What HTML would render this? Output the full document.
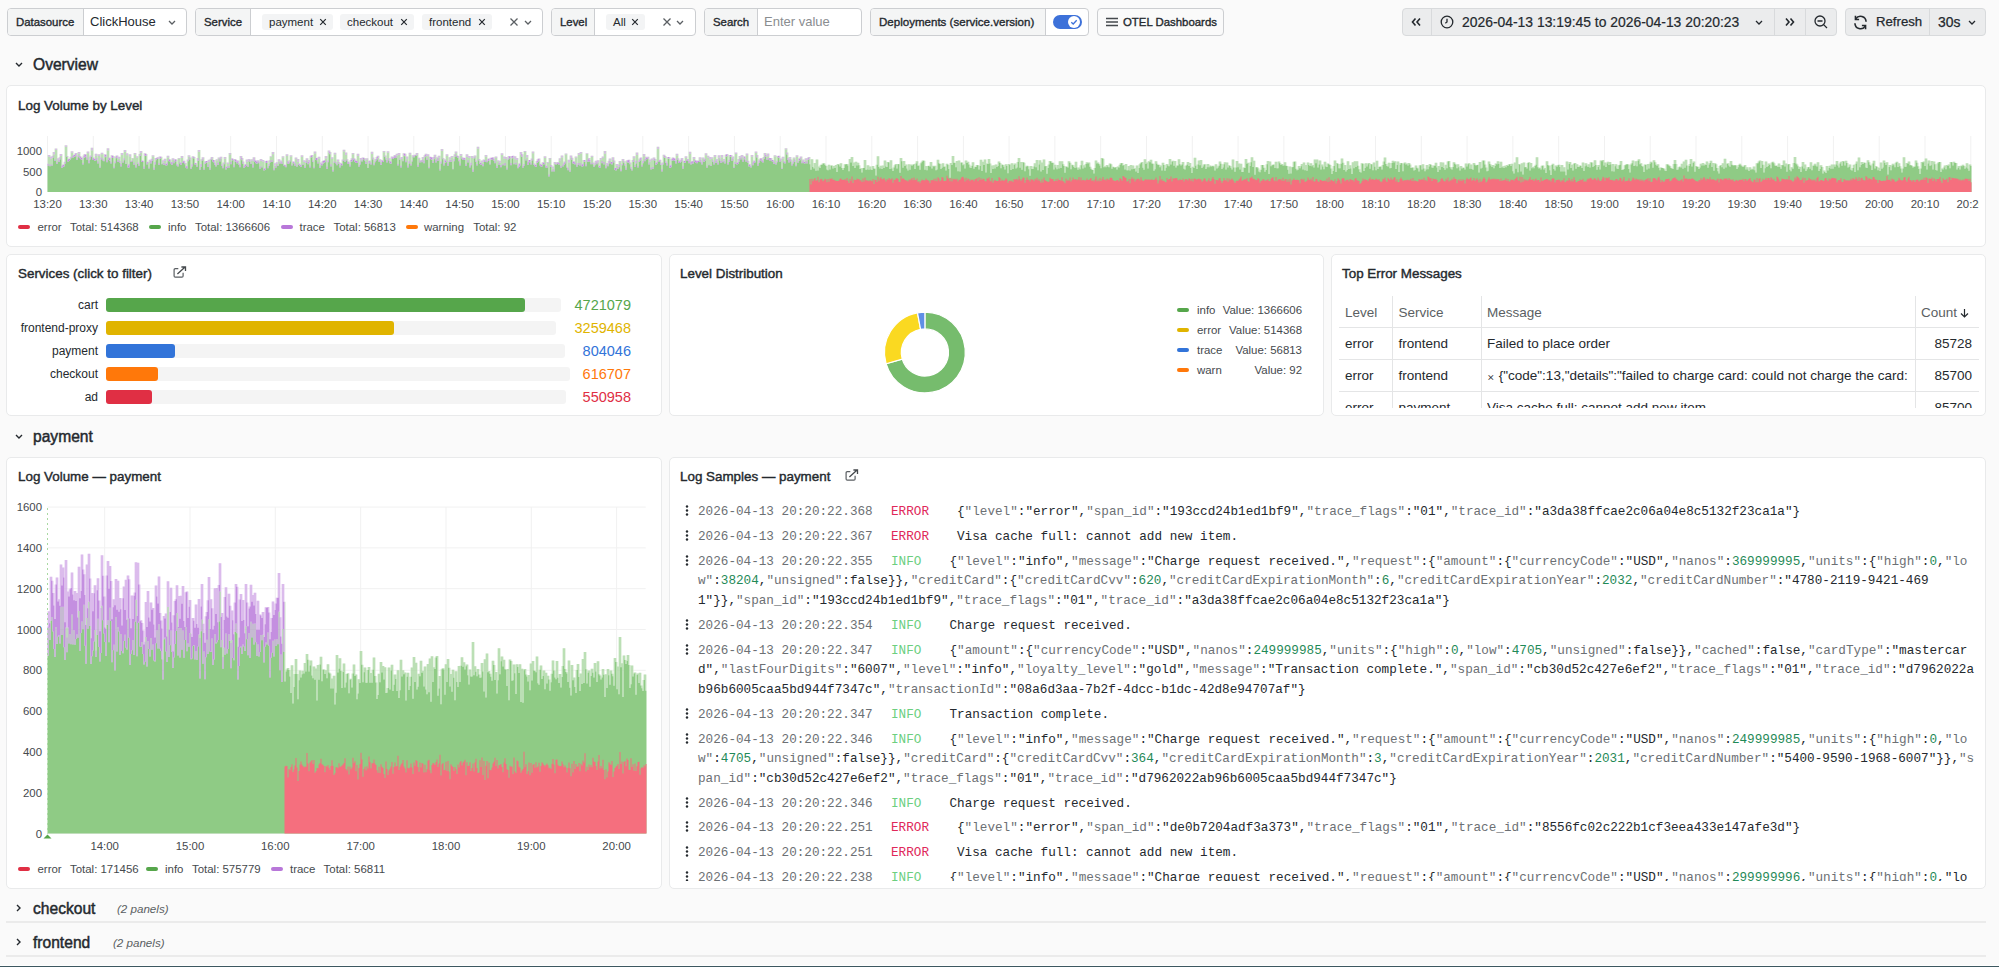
<!DOCTYPE html><html><head><meta charset="utf-8"><style>
*{box-sizing:border-box;margin:0;padding:0}
html,body{width:1999px;height:967px;overflow:hidden;background:#fafafa;font-family:"Liberation Sans",sans-serif;color:#24292e}
.a{position:absolute}
.box{position:absolute;top:8px;height:28px;border:1px solid #ccced1;border-radius:4px;background:#fff;overflow:hidden}
.lbl{position:absolute;top:0;left:0;height:26px;background:#f4f5f5;border-right:1px solid #ccced1;font-size:11.4px;-webkit-text-stroke:0.35px #24292e;line-height:26px;padding-left:8px;color:#24292e;white-space:nowrap}
.val{position:absolute;top:0;height:26px;line-height:26px;font-size:13px;white-space:nowrap}
.chip{position:absolute;top:6px;height:16px;background:#f3f4f5;border-radius:3px;font-size:11.5px;line-height:16px;white-space:nowrap;color:#24292e}
.btn{position:absolute;top:8px;height:28px;border:1px solid #d8dadc;border-radius:4px;background:#ebeced}
.panel{position:absolute;background:#fff;border:1px solid #e9eaeb;border-radius:5px;overflow:hidden}
.ptitle{position:absolute;font-size:13.4px;-webkit-text-stroke:0.4px #24292e;white-space:nowrap;color:#24292e;line-height:16px}
.rowt{position:absolute;font-size:15.6px;-webkit-text-stroke:0.45px #24292e;white-space:nowrap;color:#24292e;line-height:18px}
.ax{position:absolute;font-size:11.4px;color:#45494d;white-space:nowrap;line-height:12px}
.leg{position:absolute;font-size:11.45px;color:#45494d;white-space:nowrap;line-height:12px}
.sw{display:inline-block;width:12px;height:4px;border-radius:2px;vertical-align:middle;margin-right:7px;position:relative;top:-1px}
.mono{font-family:"Liberation Mono",monospace;font-size:12.67px;white-space:pre;line-height:19.6px}
</style></head><body><div class="box" style="left:7px;width:180px"><div class="lbl" style="width:76px">Datasource</div><div class="val" style="left:82px">ClickHouse</div></div>
<svg class="a" style="left:168px;top:20px" width="8" height="5" viewBox="0 0 8 5"><path d="M1 1 L4 4 L7 1" fill="none" stroke="#5b5f63" stroke-width="1.3"/></svg>
<div class="box" style="left:195px;width:348px"><div class="lbl" style="width:55px">Service</div></div>
<div class="chip" style="left:262px;top:14px;width:71px;padding-left:7px">payment</div>
<svg class="a" style="left:319px;top:18px" width="8" height="8" viewBox="0 0 10 10"><path d="M1.5 1.5 L8.5 8.5 M8.5 1.5 L1.5 8.5" fill="none" stroke="#24292e" stroke-width="1.5"/></svg>
<div class="chip" style="left:340px;top:14px;width:74px;padding-left:7px">checkout</div>
<svg class="a" style="left:400px;top:18px" width="8" height="8" viewBox="0 0 10 10"><path d="M1.5 1.5 L8.5 8.5 M8.5 1.5 L1.5 8.5" fill="none" stroke="#24292e" stroke-width="1.5"/></svg>
<div class="chip" style="left:422px;top:14px;width:70px;padding-left:7px">frontend</div>
<svg class="a" style="left:478px;top:18px" width="8" height="8" viewBox="0 0 10 10"><path d="M1.5 1.5 L8.5 8.5 M8.5 1.5 L1.5 8.5" fill="none" stroke="#24292e" stroke-width="1.5"/></svg>
<svg class="a" style="left:509px;top:17px" width="10" height="10" viewBox="0 0 10 10"><path d="M1.5 1.5 L8.5 8.5 M8.5 1.5 L1.5 8.5" fill="none" stroke="#5b5f63" stroke-width="1.3"/></svg>
<svg class="a" style="left:524px;top:20px" width="8" height="5" viewBox="0 0 8 5"><path d="M1 1 L4 4 L7 1" fill="none" stroke="#5b5f63" stroke-width="1.3"/></svg>
<div class="box" style="left:551px;width:145px"><div class="lbl" style="width:43px">Level</div></div>
<div class="chip" style="left:606px;top:14px;width:39px;padding-left:7px">All</div>
<svg class="a" style="left:631px;top:18px" width="8" height="8" viewBox="0 0 10 10"><path d="M1.5 1.5 L8.5 8.5 M8.5 1.5 L1.5 8.5" fill="none" stroke="#24292e" stroke-width="1.5"/></svg>
<svg class="a" style="left:662px;top:17px" width="10" height="10" viewBox="0 0 10 10"><path d="M1.5 1.5 L8.5 8.5 M8.5 1.5 L1.5 8.5" fill="none" stroke="#5b5f63" stroke-width="1.3"/></svg>
<svg class="a" style="left:676px;top:20px" width="8" height="5" viewBox="0 0 8 5"><path d="M1 1 L4 4 L7 1" fill="none" stroke="#5b5f63" stroke-width="1.3"/></svg>
<div class="box" style="left:704px;width:158px"><div class="lbl" style="width:53px">Search</div><div class="val" style="left:59px;color:#8a8d90">Enter value</div></div>
<div class="box" style="left:870px;width:219px"><div class="lbl" style="width:175px;font-size:11.55px">Deployments (service.version)</div></div>
<div class="a" style="left:1053px;top:15px;width:29px;height:14px;border-radius:7px;background:#3d71d9"></div>
<div class="a" style="left:1068px;top:16px;width:12px;height:12px;border-radius:6px;background:#fff"></div>
<svg class="a" style="left:1068px;top:16px" width="12" height="12" viewBox="0 0 12 12"><path d="M3.3 6.2 L5.2 8 L8.7 4.2" fill="none" stroke="#3d71d9" stroke-width="1.3"/></svg>
<div class="box" style="left:1097px;width:127px;background:#fafafa"></div>
<svg class="a" style="left:1106px;top:17px" width="12" height="10" viewBox="0 0 12 10"><path d="M0 1.5 H12 M0 5 H12 M0 8.5 H12" stroke="#45494d" stroke-width="1.4"/></svg>
<div class="a" style="left:1123px;top:8px;line-height:28px;font-size:11.4px;-webkit-text-stroke:0.35px #24292e;white-space:nowrap">OTEL Dashboards</div>
<div class="btn" style="left:1402px;width:435px"></div>
<div class="a" style="left:1431px;top:9px;width:1px;height:26px;background:#d8dadc"></div>
<div class="a" style="left:1774px;top:9px;width:1px;height:26px;background:#d8dadc"></div>
<div class="a" style="left:1805px;top:9px;width:1px;height:26px;background:#d8dadc"></div>
<svg class="a" style="left:1410px;top:17px" width="12" height="10" viewBox="0 0 12 10"><path d="M5.5 1.5 L2.5 5 L5.5 8.5 M10 1.5 L7 5 L10 8.5" fill="none" stroke="#24292e" stroke-width="1.6"/></svg>
<svg class="a" style="left:1440px;top:15px" width="14" height="14" viewBox="0 0 14 14"><circle cx="7" cy="7" r="5.8" fill="none" stroke="#24292e" stroke-width="1.3"/><path d="M7 3.8 V7 L5.3 8.2" fill="none" stroke="#24292e" stroke-width="1.3"/></svg>
<div class="a" style="left:1462px;top:8px;line-height:28px;font-size:13.9px;-webkit-text-stroke:0.2px #24292e;white-space:nowrap">2026-04-13 13:19:45 to 2026-04-13 20:20:23</div>
<svg class="a" style="left:1755px;top:20px" width="8" height="5" viewBox="0 0 8 5"><path d="M1 1 L4 4 L7 1" fill="none" stroke="#24292e" stroke-width="1.3"/></svg>
<svg class="a" style="left:1784px;top:17px" width="12" height="10" viewBox="0 0 12 10"><path d="M2 1.5 L5 5 L2 8.5 M6.5 1.5 L9.5 5 L6.5 8.5" fill="none" stroke="#24292e" stroke-width="1.6"/></svg>
<svg class="a" style="left:1814px;top:15px" width="14" height="14" viewBox="0 0 14 14"><circle cx="6" cy="6" r="5" fill="none" stroke="#24292e" stroke-width="1.3"/><path d="M3.5 6 H8.5 M9.6 9.6 L13 13" fill="none" stroke="#24292e" stroke-width="1.3"/></svg>
<div class="btn" style="left:1845px;width:141px"></div>
<div class="a" style="left:1929px;top:9px;width:1px;height:26px;background:#d8dadc"></div>
<svg class="a" style="left:1853px;top:15px" width="15" height="15" viewBox="0 0 14 14"><path d="M12.2 6.3 A5.2 5.2 0 0 0 2.6 3.6 M1.8 7.7 A5.2 5.2 0 0 0 11.4 10.4" fill="none" stroke="#24292e" stroke-width="1.5"/><path d="M2.3 0.8 V4.2 H5.7 M11.7 13.2 V9.8 H8.3" fill="none" stroke="#24292e" stroke-width="1.5"/></svg>
<div class="a" style="left:1876px;top:8px;line-height:28px;font-size:13.2px;-webkit-text-stroke:0.25px #24292e;white-space:nowrap">Refresh</div>
<div class="a" style="left:1938px;top:8px;line-height:28px;font-size:13.9px;-webkit-text-stroke:0.25px #24292e;white-space:nowrap">30s</div>
<svg class="a" style="left:1968px;top:20px" width="8" height="5" viewBox="0 0 8 5"><path d="M1 1 L4 4 L7 1" fill="none" stroke="#24292e" stroke-width="1.3"/></svg>
<svg class="a" style="left:15px;top:62px" width="8" height="5" viewBox="0 0 8 5"><path d="M1 1 L4 4 L7 1" fill="none" stroke="#24292e" stroke-width="1.4"/></svg>
<div class="rowt" style="left:33px;top:56px">Overview</div>
<svg class="a" style="left:15px;top:434px" width="8" height="5" viewBox="0 0 8 5"><path d="M1 1 L4 4 L7 1" fill="none" stroke="#24292e" stroke-width="1.4"/></svg>
<div class="rowt" style="left:33px;top:428px">payment</div>
<svg class="a" style="left:16px;top:904px" width="5" height="8" viewBox="0 0 5 8"><path d="M1 1 L4 4 L1 7" fill="none" stroke="#24292e" stroke-width="1.4"/></svg>
<div class="rowt" style="left:33px;top:900px">checkout</div>
<div class="a" style="left:117px;top:901.5px;font-size:11.6px;font-style:italic;color:#5b5f63;white-space:nowrap;line-height:14px">(2 panels)</div>
<svg class="a" style="left:16px;top:938px" width="5" height="8" viewBox="0 0 5 8"><path d="M1 1 L4 4 L1 7" fill="none" stroke="#24292e" stroke-width="1.4"/></svg>
<div class="rowt" style="left:33px;top:934px">frontend</div>
<div class="a" style="left:113px;top:935.5px;font-size:11.6px;font-style:italic;color:#5b5f63;white-space:nowrap;line-height:14px">(2 panels)</div>
<div class="a" style="left:6px;top:921px;width:1980px;height:2px;background:#ebebeb"></div>
<div class="a" style="left:6px;top:955px;width:1980px;height:2px;background:#ebebeb"></div>
<div class="a" style="left:0;top:965px;width:1999px;height:1px;background:#fff"></div>
<div class="a" style="left:0;top:966px;width:1999px;height:1px;background:#3d5860"></div>
<div class="panel" style="left:6px;top:85px;width:1980px;height:162px"></div>
<div class="ptitle" style="left:18px;top:97.5px">Log Volume by Level</div>
<svg class="a" style="left:0;top:0" width="1999" height="260" viewBox="0 0 1999 260"><path d="M47.5 136V192" stroke="#f1f1f1" stroke-width="1"/><path d="M93.3 136V192" stroke="#f1f1f1" stroke-width="1"/><path d="M139.1 136V192" stroke="#f1f1f1" stroke-width="1"/><path d="M184.9 136V192" stroke="#f1f1f1" stroke-width="1"/><path d="M230.7 136V192" stroke="#f1f1f1" stroke-width="1"/><path d="M276.5 136V192" stroke="#f1f1f1" stroke-width="1"/><path d="M322.3 136V192" stroke="#f1f1f1" stroke-width="1"/><path d="M368.1 136V192" stroke="#f1f1f1" stroke-width="1"/><path d="M413.8 136V192" stroke="#f1f1f1" stroke-width="1"/><path d="M459.6 136V192" stroke="#f1f1f1" stroke-width="1"/><path d="M505.4 136V192" stroke="#f1f1f1" stroke-width="1"/><path d="M551.2 136V192" stroke="#f1f1f1" stroke-width="1"/><path d="M597 136V192" stroke="#f1f1f1" stroke-width="1"/><path d="M642.8 136V192" stroke="#f1f1f1" stroke-width="1"/><path d="M688.6 136V192" stroke="#f1f1f1" stroke-width="1"/><path d="M734.4 136V192" stroke="#f1f1f1" stroke-width="1"/><path d="M780.2 136V192" stroke="#f1f1f1" stroke-width="1"/><path d="M826 136V192" stroke="#f1f1f1" stroke-width="1"/><path d="M871.8 136V192" stroke="#f1f1f1" stroke-width="1"/><path d="M917.6 136V192" stroke="#f1f1f1" stroke-width="1"/><path d="M963.4 136V192" stroke="#f1f1f1" stroke-width="1"/><path d="M1009.1 136V192" stroke="#f1f1f1" stroke-width="1"/><path d="M1054.9 136V192" stroke="#f1f1f1" stroke-width="1"/><path d="M1100.7 136V192" stroke="#f1f1f1" stroke-width="1"/><path d="M1146.5 136V192" stroke="#f1f1f1" stroke-width="1"/><path d="M1192.3 136V192" stroke="#f1f1f1" stroke-width="1"/><path d="M1238.1 136V192" stroke="#f1f1f1" stroke-width="1"/><path d="M1283.9 136V192" stroke="#f1f1f1" stroke-width="1"/><path d="M1329.7 136V192" stroke="#f1f1f1" stroke-width="1"/><path d="M1375.5 136V192" stroke="#f1f1f1" stroke-width="1"/><path d="M1421.3 136V192" stroke="#f1f1f1" stroke-width="1"/><path d="M1467.1 136V192" stroke="#f1f1f1" stroke-width="1"/><path d="M1512.9 136V192" stroke="#f1f1f1" stroke-width="1"/><path d="M1558.7 136V192" stroke="#f1f1f1" stroke-width="1"/><path d="M1604.5 136V192" stroke="#f1f1f1" stroke-width="1"/><path d="M1650.2 136V192" stroke="#f1f1f1" stroke-width="1"/><path d="M1696 136V192" stroke="#f1f1f1" stroke-width="1"/><path d="M1741.8 136V192" stroke="#f1f1f1" stroke-width="1"/><path d="M1787.6 136V192" stroke="#f1f1f1" stroke-width="1"/><path d="M1833.4 136V192" stroke="#f1f1f1" stroke-width="1"/><path d="M1879.2 136V192" stroke="#f1f1f1" stroke-width="1"/><path d="M1925 136V192" stroke="#f1f1f1" stroke-width="1"/><path d="M1970.8 136V192" stroke="#f1f1f1" stroke-width="1"/><path d="M47.5 163.8V155.1h1V163.8zM49.5 164.4V155.1h1V164.4zM51.5 164.5V155.7h1V164.5zM52.5 155.7V152.1h1V155.7zM54.5 159.4V148.4h1V159.4zM56.5 162.6V148.4h1V162.6zM58.5 160.2V157.3h1V160.2zM59.5 157.3V154.1h1V157.3zM61.5 165.7V154.1h1V165.7zM63.5 164.7V161.8h1V164.7zM64.5 161.8V145.2h1V161.8zM66.5 155.9V145.2h1V155.9zM67.5 159.5V155.9h1V159.5zM69.5 158.7V156.7h1V158.7zM70.5 156.7V151.2h1V156.7zM72.5 155.8V151.2h1V155.8zM73.5 155V154.6h1V155zM74.5 154.6V153.1h1V154.6zM76.5 158.4V153.1h1V158.4zM77.5 155.2V152h1V155.2zM79.5 156.1V152h1V156.1zM80.5 157.3V156.1h1V157.3zM81.5 158.1V157.3h1V158.1zM82.5 162.9V155.4h1V162.9zM83.5 155.4V154.1h1V155.4zM85.5 155.1V154.1h1V155.1zM86.5 157.5V151.5h1V157.5zM88.5 160.5V151.5h1V160.5zM89.5 157.1V155.6h1V157.1zM90.5 155.6V147.8h1V155.6zM92.5 157.5V147.8h1V157.5zM93.5 158.5V157.5h1V158.5zM94.5 158.9V153.7h1V158.9zM96.5 157.7V153.7h1V157.7zM97.5 161.4V154.2h1V161.4zM99.5 166.4V154.2h1V166.4zM100.5 157.4V152.8h1V157.4zM102.5 158.4V152.8h1V158.4zM103.5 160.5V154.3h1V160.5zM105.5 155.1V154.3h1V155.1zM106.5 160.3V148.2h1V160.3zM108.5 157.5V148.2h1V157.5zM109.5 158.2V157.5h1V158.2zM110.5 161.8V155.2h1V161.8zM112.5 156V155.2h1V156zM113.5 166.7V156h1V166.7zM114.5 161.6V156.6h1V161.6zM115.5 156.6V155.6h1V156.6zM117.5 160.2V155.6h1V160.2zM119.5 161V156.8h1V161zM120.5 163.8V153.1h1V163.8zM122.5 161.6V153.1h1V161.6zM123.5 158.2V150h1V158.2zM125.5 163.5V150h1V163.5zM127.5 165.6V153.2h1V165.6zM128.5 164V154.3h1V164zM130.5 161V154.3h1V161zM131.5 160.5V157.9h1V160.5zM133.5 162.4V153.1h1V162.4zM135.5 165.2V153.1h1V165.2zM137.5 162.6V156.3h1V162.6zM138.5 164.6V154h1V164.6zM139.5 154V151.1h1V154zM141.5 160.5V151.1h1V160.5zM143.5 166.5V153.2h1V166.5zM145.5 154V153.2h1V154zM146.5 162.5V154h1V162.5zM148.5 167.3V159.7h1V167.3zM150.5 161V158.7h1V161zM151.5 158.7V155.2h1V158.7zM153.5 167.5V155.2h1V167.5zM154.5 162V158h1V162zM156.5 157.8V157.3h1V157.8zM158.5 163.3V156.4h1V163.3zM160.5 156.7V156.4h1V156.7zM161.5 163.7V156.7h1V163.7zM163.5 163.1V158.7h1V163.1zM165.5 164V158.7h1V164zM166.5 162.5V155.8h1V162.5zM168.5 159.3V155.8h1V159.3zM169.5 159.6V159.3h1V159.6zM170.5 162.3V159.6h1V162.3zM171.5 162.2V158.2h1V162.2zM173.5 161.3V158.2h1V161.3zM175.5 159.6V159.3h1V159.6zM176.5 164V159.6h1V164zM177.5 165.2V158.1h1V165.2zM179.5 162V158.1h1V162zM180.5 163.1V156h1V163.1zM182.5 161.6V156h1V161.6zM184.5 163V160.8h1V163zM185.5 166.5V163h1V166.5zM186.5 166V159.5h1V166zM187.5 159.5V155.2h1V159.5zM189.5 157.4V155.2h1V157.4zM190.5 168V157.4h1V168zM191.5 164.3V156.3h1V164.3zM193.5 156.9V156.3h1V156.9zM194.5 162.9V156.9h1V162.9zM195.5 163.3V162.9h1V163.3zM196.5 165.8V158.1h1V165.8zM197.5 158.1V150.1h1V158.1zM199.5 168.4V150.1h1V168.4zM200.5 164.1V159.2h1V164.1zM201.5 159.2V157.2h1V159.2zM203.5 168.2V157.2h1V168.2zM204.5 162.3V161h1V162.3zM207.5 164.3V159.7h1V164.3zM209.5 168V158.7h1V168zM210.5 158.7V157.1h1V158.7zM212.5 159.9V157.1h1V159.9zM214.5 162.4V160h1V162.4zM215.5 165.2V159.2h1V165.2zM217.5 162.6V157.5h1V162.6zM219.5 158.6V156.8h1V158.6zM221.5 164.2V156.8h1V164.2zM222.5 166.5V162.5h1V166.5zM223.5 162.5V156.9h1V162.5zM225.5 167.2V156.9h1V167.2zM226.5 166.3V162.4h1V166.3zM228.5 166V153.1h1V166zM230.5 161.8V153.1h1V161.8zM232.5 159.2V158.3h1V159.2zM233.5 165.3V159.1h1V165.3zM235.5 160V159.1h1V160zM236.5 161.8V160h1V161.8zM238.5 163.6V160.5h1V163.6zM239.5 164.8V156.1h1V164.8zM241.5 157.9V156.1h1V157.9zM242.5 161.5V157.9h1V161.5zM243.5 166.3V161.5h1V166.3zM244.5 164.5V164.3h1V164.5zM245.5 164.3V159.6h1V164.3zM247.5 165.6V159.1h1V165.6zM249.5 160.3V159.1h1V160.3zM250.5 163.2V159.2h1V163.2zM252.5 164.5V157.2h1V164.5zM254.5 160.4V157.2h1V160.4zM255.5 160.6V160.4h1V160.6zM256.5 161.7V160.2h1V161.7zM258.5 161.6V160.2h1V161.6zM259.5 166.5V159.1h1V166.5zM261.5 166.5V159.1h1V166.5zM263.5 168.7V159.9h1V168.7zM264.5 168.1V161h1V168.1zM265.5 161V160.8h1V161zM267.5 166.6V160.8h1V166.6zM268.5 164V160.3h1V164zM269.5 160.3V156.3h1V160.3zM271.5 160.2V151.9h1V160.2zM273.5 168.3V151.9h1V168.3zM275.5 166.1V162.2h1V166.1zM277.5 164.9V159.3h1V164.9zM279.5 162.4V159.3h1V162.4zM281.5 162.3V156.3h1V162.3zM283.5 164.8V156.3h1V164.8zM285.5 165.8V154.2h1V165.8zM287.5 160.9V154.2h1V160.9zM288.5 162.5V160.2h1V162.5zM289.5 160.2V155.3h1V160.2zM291.5 164.6V155.3h1V164.6zM293.5 161.8V161.5h1V161.8zM294.5 163.4V157.4h1V163.4zM296.5 165.5V157.4h1V165.5zM298.5 163.5V159h1V163.5zM299.5 164.6V163.5h1V164.6zM300.5 165.3V155.3h1V165.3zM302.5 164V155.3h1V164zM304.5 166.6V160.2h1V166.6zM305.5 160.7V158.3h1V160.7zM307.5 162.2V158.3h1V162.2zM309.5 165.8V155.8h1V165.8zM310.5 155.8V155.1h1V155.8zM312.5 160.4V155.1h1V160.4zM313.5 167V151.4h1V167zM315.5 157.8V151.4h1V157.8zM317.5 161.9V156.8h1V161.9zM319.5 166.2V156.8h1V166.2zM321.5 164.1V161.1h1V164.1zM322.5 161.1V160.6h1V161.1zM323.5 160.6V160.3h1V160.6zM324.5 160.3V156h1V160.3zM326.5 166.5V156h1V166.5zM327.5 160.6V150.6h1V160.6zM329.5 151.9V150.6h1V151.9zM330.5 164.3V151.9h1V164.3zM332.5 170V157.3h1V170zM333.5 161.5V152.8h1V161.5zM335.5 161.9V152.8h1V161.9zM336.5 163.7V159.5h1V163.7zM338.5 162.2V159.5h1V162.2zM339.5 165.5V162.2h1V165.5zM341.5 163.9V159.6h1V163.9zM342.5 159.6V149.8h1V159.6zM344.5 160.5V149.8h1V160.5zM346.5 159.3V152.6h1V159.3zM347.5 161.5V159.3h1V161.5zM348.5 162.4V161.5h1V162.4zM349.5 165V160h1V165zM350.5 160V158.2h1V160zM351.5 158.2V152.9h1V158.2zM353.5 158.2V152.9h1V158.2zM354.5 159.6V158.2h1V159.6zM355.5 161.1V159.6h1V161.1zM356.5 161.1V153.8h1V161.1zM358.5 165.2V153.8h1V165.2zM359.5 162.3V158.1h1V162.3zM361.5 160.6V157.4h1V160.6zM363.5 157.9V157.4h1V157.9zM364.5 159.3V157.9h1V159.3zM365.5 161.9V158.2h1V161.9zM367.5 167.5V158.2h1V167.5zM368.5 161V160.5h1V161zM370.5 162.5V151.7h1V162.5zM372.5 157.5V151.7h1V157.5zM373.5 163.7V157.5h1V163.7zM374.5 160.8V159h1V160.8zM375.5 159V156.9h1V159zM376.5 156.9V155.8h1V156.9zM378.5 160.7V155.8h1V160.7zM380.5 162.5V159.2h1V162.5zM382.5 160.9V151h1V160.9zM384.5 155.4V151h1V155.4zM385.5 158.1V155.4h1V158.1zM386.5 160.1V151.3h1V160.1zM388.5 158.3V151.3h1V158.3zM389.5 161V158.3h1V161zM390.5 161.7V156.4h1V161.7zM392.5 157.8V156.4h1V157.8zM393.5 156.6V154.9h1V156.6zM395.5 156.5V153.7h1V156.5zM397.5 164V153h1V164zM399.5 158.3V153h1V158.3zM400.5 165.8V157.1h1V165.8zM402.5 160.4V153.3h1V160.4zM404.5 153.8V153.3h1V153.8zM405.5 160.7V153.8h1V160.7zM407.5 165.6V156.5h1V165.6zM408.5 161.3V152.7h1V161.3zM410.5 163.7V152.7h1V163.7zM411.5 160.5V155.2h1V160.5zM413.5 156.4V154.8h1V156.4zM415.5 155.2V153.1h1V155.2zM417.5 165.1V153.1h1V165.1zM419.5 160.5V157.7h1V160.5zM420.5 160.8V160.1h1V160.8zM421.5 160.1V156.9h1V160.1zM423.5 160.2V155.2h1V160.2zM424.5 155.2V153.7h1V155.2zM426.5 158.5V153.7h1V158.5zM428.5 166.9V154.2h1V166.9zM430.5 157.2V156.7h1V157.2zM432.5 161.3V157h1V161.3zM433.5 157V154.7h1V157zM435.5 160.1V154.7h1V160.1zM437.5 158.3V155.7h1V158.3zM439.5 168.9V155.7h1V168.9zM440.5 161.6V148.9h1V161.6zM442.5 158V148.9h1V158zM443.5 163.8V158h1V163.8zM445.5 160.8V154.2h1V160.8zM447.5 163.3V154.2h1V163.3zM448.5 160.8V157.3h1V160.8zM450.5 160V156h1V160zM452.5 168.6V156h1V168.6zM453.5 158.9V154.2h1V158.9zM454.5 154.2V151.4h1V154.2zM456.5 155.5V151.4h1V155.5zM457.5 156V155.5h1V156zM458.5 159.7V156h1V159.7zM459.5 163.6V154.1h1V163.6zM461.5 157.3V154.1h1V157.3zM462.5 158.6V157.3h1V158.6zM464.5 158.2V157.8h1V158.2zM465.5 164.2V154.2h1V164.2zM467.5 160.2V154.2h1V160.2zM469.5 165.5V156h1V165.5zM470.5 162.8V155.9h1V162.8zM472.5 169.5V155.9h1V169.5zM473.5 157.2V155.5h1V157.2zM475.5 160.6V155.5h1V160.6zM476.5 163.9V146.8h1V163.9zM478.5 159.1V146.8h1V159.1zM479.5 162.4V159.1h1V162.4zM480.5 162.9V160.4h1V162.9zM482.5 164V159.5h1V164zM484.5 160.6V155h1V160.6zM486.5 160.9V155h1V160.9zM487.5 159.2V158.6h1V159.2zM489.5 163.4V157.7h1V163.4zM491.5 157.7V157.3h1V157.7zM493.5 158.7V157.3h1V158.7zM494.5 161.3V156.5h1V161.3zM496.5 166.1V156.5h1V166.1zM498.5 162.7V160.3h1V162.7zM500.5 165V153.2h1V165zM502.5 163.9V153.2h1V163.9zM504.5 163V156.6h1V163zM506.5 167.7V157h1V167.7zM507.5 158.5V156h1V158.5zM509.5 156.6V156h1V156.6zM510.5 163V155.9h1V163zM513.5 163.2V155.7h1V163.2zM515.5 162.8V156.3h1V162.8zM517.5 166.7V157.9h1V166.7zM518.5 164.3V163.3h1V164.3zM519.5 163.3V152.1h1V163.3zM521.5 154.2V152.1h1V154.2zM522.5 166.1V154.2h1V166.1zM523.5 164.1V151h1V164.1zM525.5 159.3V151h1V159.3zM527.5 162.1V154.9h1V162.1zM530.5 162.7V158.6h1V162.7zM531.5 158.6V151.6h1V158.6zM533.5 163.5V151.6h1V163.5zM534.5 165.1V163.5h1V165.1zM535.5 164.8V161.1h1V164.8zM536.5 161.1V159.3h1V161.1zM537.5 159.3V158.4h1V159.3zM539.5 163.8V158.4h1V163.8zM540.5 164.6V163.8h1V164.6zM541.5 164.9V162.2h1V164.9zM543.5 162.8V156.3h1V162.8zM545.5 165.5V156.3h1V165.5zM546.5 166.5V162h1V166.5zM548.5 174.6V158.1h1V174.6zM550.5 165V158.1h1V165zM551.5 170.2V165h1V170.2zM553.5 169.3V162.1h1V169.3zM555.5 164V162.1h1V164zM556.5 163V162.1h1V163zM558.5 163.1V158.2h1V163.1zM560.5 165.9V155.5h1V165.9zM562.5 164.8V155.5h1V164.8zM563.5 162.7V161.4h1V162.7zM564.5 161.4V153.4h1V161.4zM566.5 166.8V153.4h1V166.8zM567.5 167.9V159.8h1V167.9zM569.5 170.3V155.4h1V170.3zM571.5 157.8V155.4h1V157.8zM572.5 161.7V157.8h1V161.7zM574.5 162.4V156.4h1V162.4zM576.5 164.7V156.4h1V164.7zM577.5 163V153.1h1V163zM579.5 163V152.1h1V163zM581.5 164.6V152.1h1V164.6zM582.5 163.4V159.9h1V163.4zM584.5 160.2V159.9h1V160.2zM585.5 164.3V153.2h1V164.3zM587.5 159.5V153.2h1V159.5zM589.5 159.9V157.9h1V159.9zM590.5 162.8V155.7h1V162.8zM592.5 162.6V155.7h1V162.6zM593.5 166.1V162.6h1V166.1zM594.5 163.3V160.8h1V163.3zM596.5 162.8V160.2h1V162.8zM598.5 166.2V160.2h1V166.2zM599.5 165.5V158.1h1V165.5zM601.5 160.9V156.6h1V160.9zM603.5 162V151.1h1V162zM605.5 166.2V151.1h1V166.2zM607.5 164.6V160.8h1V164.6zM608.5 160.8V158.6h1V160.8zM610.5 161.9V158.6h1V161.9zM611.5 162V157.2h1V162zM613.5 160.5V157.2h1V160.5zM614.5 168V160.5h1V168zM615.5 167.9V164.1h1V167.9zM617.5 167.3V164.1h1V167.3zM618.5 164.8V161h1V164.8zM620.5 169.4V161h1V169.4zM621.5 164V159.1h1V164zM623.5 161.2V159.1h1V161.2zM624.5 163.9V161.2h1V163.9zM625.5 167.6V160.5h1V167.6zM626.5 160.5V160.3h1V160.5zM627.5 160.3V159.7h1V160.3zM629.5 162.4V159.7h1V162.4zM630.5 167V162.4h1V167zM631.5 169.1V159.9h1V169.1zM632.5 159.9V156.3h1V159.9zM634.5 165V156.3h1V165zM635.5 160.8V152.6h1V160.8zM637.5 166V152.6h1V166zM638.5 160.6V158.5h1V160.6zM639.5 158.5V157.4h1V158.5zM641.5 165V157.4h1V165zM642.5 160.8V154h1V160.8zM644.5 159.1V154h1V159.1zM646.5 158.1V156.7h1V158.1zM648.5 162.4V156.7h1V162.4zM650.5 167.6V158.4h1V167.6zM652.5 166.9V157.6h1V166.9zM654.5 159V157.6h1V159zM655.5 163V159h1V163zM656.5 161.9V146.8h1V161.9zM658.5 160.7V146.8h1V160.7zM660.5 163.4V159.7h1V163.4zM661.5 169.3V162.4h1V169.3zM662.5 162.4V154.8h1V162.4zM664.5 156.1V154.8h1V156.1zM665.5 161.2V156.1h1V161.2zM666.5 163.1V157.1h1V163.1zM669.5 165.7V157.1h1V165.7zM670.5 164.7V158.8h1V164.7zM671.5 158.8V157.4h1V158.8zM673.5 158.3V157.4h1V158.3zM675.5 161V153.8h1V161zM677.5 158.3V153.8h1V158.3zM678.5 160.9V158.3h1V160.9zM679.5 161.7V159.8h1V161.7zM680.5 159.8V158.1h1V159.8zM682.5 166.3V158.1h1V166.3zM684.5 161V156.2h1V161zM686.5 159.7V156.2h1V159.7zM688.5 160.9V151.7h1V160.9zM690.5 161.9V151.7h1V161.9zM692.5 161.6V157.1h1V161.6zM694.5 160.3V157.1h1V160.3zM695.5 160.5V160.3h1V160.5zM696.5 161.5V160.5h1V161.5zM698.5 160.9V157.3h1V160.9zM700.5 159.7V157.3h1V159.7zM701.5 162.3V157.5h1V162.3zM703.5 159.7V157.5h1V159.7zM704.5 158.7V153.3h1V158.7zM706.5 166.3V153.3h1V166.3zM708.5 164.4V155.7h1V164.4zM710.5 165.2V157h1V165.2zM712.5 160.3V157.2h1V160.3zM713.5 162.4V155h1V162.4zM715.5 160.7V155h1V160.7zM717.5 162.4V155.2h1V162.4zM719.5 158.5V155.2h1V158.5zM720.5 160.7V155.1h1V160.7zM722.5 161V155.1h1V161zM724.5 161.5V154.7h1V161.5zM725.5 154.7V154h1V154.7zM727.5 163V154h1V163zM728.5 159.8V154.9h1V159.8zM731.5 158.4V155h1V158.4zM733.5 167.1V156.4h1V167.1zM734.5 161.7V152.4h1V161.7zM736.5 163.1V152.4h1V163.1zM737.5 162V159h1V162zM738.5 159V156h1V159zM740.5 157.7V155h1V157.7zM742.5 159.6V155h1V159.6zM744.5 157.2V156.3h1V157.2zM745.5 160.2V153.4h1V160.2zM747.5 160.7V153.4h1V160.7zM748.5 164.5V160.7h1V164.5zM750.5 166.1V155h1V166.1zM752.5 162.6V155h1V162.6zM754.5 161.4V151.4h1V161.4zM756.5 154.9V151.4h1V154.9zM757.5 163.8V154.9h1V163.8zM758.5 160.6V159.3h1V160.6zM759.5 159.3V158h1V159.3zM761.5 159.5V158h1V159.5zM762.5 160.8V157.1h1V160.8zM763.5 157.1V153.1h1V157.1zM765.5 154.9V153.1h1V154.9zM766.5 158.6V153.5h1V158.6zM768.5 157.9V153.5h1V157.9zM769.5 158.2V157.9h1V158.2zM771.5 159.8V158h1V159.8zM773.5 161.5V155.3h1V161.5zM775.5 162.9V155.3h1V162.9zM776.5 161V156h1V161zM777.5 156V155.7h1V156zM779.5 160.6V155.7h1V160.6zM781.5 167.9V156.8h1V167.9zM783.5 161V156.8h1V161zM784.5 162.1V148.3h1V162.1zM786.5 152.6V148.3h1V152.6zM787.5 158V152.6h1V158zM788.5 159.7V157h1V159.7zM790.5 159.4V157h1V159.4zM791.5 163.8V159.4h1V163.8zM792.5 161.3V157.6h1V161.3zM794.5 159.5V157.6h1V159.5zM795.5 164.9V155.2h1V164.9zM797.5 161.6V155.2h1V161.6zM798.5 158.8V158.2h1V158.8zM799.5 158.2V156.6h1V158.2zM801.5 161.4V156.6h1V161.4zM803.5 161.6V159.6h1V161.6zM804.5 162V158.2h1V162zM806.5 161.3V158h1V161.3zM807.5 158V157h1V158z" fill="#cfe8ca"/><path d="M809.5 164.2V157h1V164.2zM810.5 169.8V159.2h1V169.8zM812.5 167.1V159.2h1V167.1zM813.5 168.4V162.9h1V168.4zM815.5 170.7V159.4h1V170.7zM817.5 170.4V159.4h1V170.4zM819.5 168V164.8h1V168zM821.5 164.7V163.5h1V164.7zM822.5 163.5V163.2h1V163.5zM824.5 164.8V163.2h1V164.8zM825.5 165.9V164.8h1V165.9zM826.5 169.5V165.9h1V169.5zM827.5 170.2V164.8h1V170.2zM829.5 169.5V164.8h1V169.5zM832.5 168.5V165.5h1V168.5zM834.5 167.9V165.1h1V167.9zM836.5 172.1V164h1V172.1zM838.5 164.7V164h1V164.7zM839.5 166.4V163.3h1V166.4zM841.5 168.1V163.3h1V168.1zM842.5 169.9V168.1h1V169.9zM843.5 168.1V164.3h1V168.1zM847.5 165.5V164.1h1V165.5zM848.5 171.2V159.1h1V171.2zM850.5 162.4V156.9h1V162.4zM852.5 165.9V156.9h1V165.9zM854.5 168.1V161.7h1V168.1zM856.5 165.6V161.7h1V165.6zM858.5 165.3V162.8h1V165.3zM859.5 169.1V165.3h1V169.1zM861.5 172.5V168.1h1V172.5zM863.5 167.9V160.1h1V167.9zM865.5 169.7V160.1h1V169.7zM866.5 169.5V165.3h1V169.5zM868.5 169.8V165.3h1V169.8zM870.5 169.5V166.4h1V169.5zM871.5 169.9V166h1V169.9zM873.5 168.5V166h1V168.5zM874.5 168.7V168.5h1V168.7zM875.5 175.6V164.8h1V175.6zM876.5 164.8V156.2h1V164.8zM878.5 166.9V156.2h1V166.9zM879.5 168.6V165.7h1V168.6zM881.5 169V165.5h1V169zM883.5 167.9V160.4h1V167.9zM885.5 166.6V160.4h1V166.6zM886.5 166.9V162h1V166.9zM888.5 162.6V162h1V162.6zM889.5 169.1V160.3h1V169.1zM891.5 168.6V160.3h1V168.6zM892.5 171V167.4h1V171zM893.5 167.4V165.3h1V167.4zM894.5 165.3V164h1V165.3zM896.5 168.5V164h1V168.5zM898.5 164.2V164h1V164.2zM899.5 172.7V158.1h1V172.7zM901.5 161.2V158.1h1V161.2zM902.5 167.8V161h1V167.8zM904.5 166V161h1V166zM906.5 168.6V164.4h1V168.6zM907.5 170.6V164.2h1V170.6zM909.5 169.8V164.2h1V169.8zM911.5 165.7V164.4h1V165.7zM912.5 165V163.9h1V165zM914.5 169V163.6h1V169zM915.5 163.6V161.3h1V163.6zM917.5 165.7V161.3h1V165.7zM919.5 169.7V163.3h1V169.7zM920.5 163.3V161.8h1V163.3zM921.5 161.8V160.5h1V161.8zM923.5 160.7V160.5h1V160.7zM924.5 169.7V160.7h1V169.7zM926.5 170.2V165.9h1V170.2zM927.5 166.1V165.8h1V166.1zM929.5 166.5V162h1V166.5zM931.5 168.5V162h1V168.5zM933.5 166.5V165.8h1V166.5zM935.5 170.2V165.8h1V170.2zM936.5 169.6V159.7h1V169.6zM938.5 163.3V159.7h1V163.3zM939.5 164.1V163.3h1V164.1zM940.5 169.1V164.1h1V169.1zM941.5 167.7V163.3h1V167.7zM943.5 166.7V163.3h1V166.7zM945.5 170.6V163.7h1V170.6zM947.5 164.7V163.7h1V164.7zM948.5 168.9V164.7h1V168.9zM949.5 177.7V163.1h1V177.7zM951.5 165.1V156h1V165.1zM953.5 162.8V156h1V162.8zM955.5 167.3V161.1h1V167.3zM957.5 171.2V160.4h1V171.2zM959.5 171.5V160.4h1V171.5zM962.5 165.3V162.5h1V165.3zM964.5 168.5V160.5h1V168.5zM966.5 163V160.5h1V163zM968.5 164.6V161.8h1V164.6zM969.5 167.4V164.6h1V167.4zM970.5 168.1V165.8h1V168.1zM971.5 165.8V162.3h1V165.8zM973.5 168.7V162.3h1V168.7zM975.5 166.9V164.9h1V166.9zM977.5 165.3V164.9h1V165.3zM978.5 169.5V165.3h1V169.5zM979.5 165.9V159.8h1V165.9zM981.5 171V159.8h1V171zM983.5 165V159.5h1V165zM985.5 172.4V159.5h1V172.4zM987.5 163.9V159.1h1V163.9zM989.5 163.6V159.1h1V163.6zM990.5 172.9V163.6h1V172.9zM992.5 169.1V165.3h1V169.1zM994.5 168.4V164.6h1V168.4zM996.5 166.9V164.6h1V166.9zM997.5 166V161.6h1V166zM999.5 162.9V161.6h1V162.9zM1000.5 168.3V162.9h1V168.3zM1002.5 164.9V164.5h1V164.9zM1003.5 166.8V164.9h1V166.8zM1004.5 169.5V164.3h1V169.5zM1006.5 165.9V164.3h1V165.9zM1007.5 173.3V164.1h1V173.3zM1009.5 164.9V164.1h1V164.9zM1010.5 170V163.3h1V170zM1012.5 168.9V163.3h1V168.9zM1013.5 164.9V163.5h1V164.9zM1015.5 168.6V163.5h1V168.6zM1016.5 167.4V161.9h1V167.4zM1017.5 161.9V157.9h1V161.9zM1019.5 167.7V157.9h1V167.7zM1021.5 169.8V161.9h1V169.8zM1023.5 162.8V161.9h1V162.8zM1024.5 171.3V162.8h1V171.3zM1025.5 166.7V165.8h1V166.7zM1027.5 166.3V165.8h1V166.3zM1028.5 169.3V166.3h1V169.3zM1029.5 175.7V166.1h1V175.7zM1031.5 168.9V166.1h1V168.9zM1032.5 168.9V166.4h1V168.9zM1033.5 166.4V163.2h1V166.4zM1035.5 167.2V160.1h1V167.2zM1037.5 170.2V160.1h1V170.2zM1038.5 164.4V160.2h1V164.4zM1040.5 171.5V160.2h1V171.5zM1042.5 170V159.5h1V170zM1044.5 166.2V159.5h1V166.2zM1046.5 173.7V166h1V173.7zM1047.5 168V164.4h1V168zM1048.5 164.4V161h1V164.4zM1050.5 161.5V161h1V161.5zM1051.5 162.9V161.5h1V162.9zM1053.5 169.4V162.8h1V169.4zM1055.5 167.6V164.8h1V167.6zM1056.5 169.2V165h1V169.2zM1058.5 168.4V161.2h1V168.4zM1060.5 168V161.2h1V168zM1062.5 164.2V161.2h1V164.2zM1063.5 166V164.2h1V166zM1064.5 172.7V166h1V172.7zM1066.5 166.8V166.5h1V166.8zM1067.5 167.4V161.3h1V167.4zM1069.5 162.8V161.3h1V162.8zM1070.5 169.2V162.8h1V169.2zM1072.5 165.2V164.8h1V165.2zM1073.5 167.1V165.2h1V167.1zM1074.5 167.9V161.8h1V167.9zM1076.5 167.5V161.8h1V167.5zM1077.5 169.8V167.5h1V169.8zM1079.5 169.2V165.3h1V169.2zM1080.5 165.3V160.8h1V165.3zM1082.5 168.5V160.8h1V168.5zM1084.5 167.6V164h1V167.6zM1085.5 164V162.2h1V164zM1087.5 163.6V162.2h1V163.6zM1089.5 166.7V162.6h1V166.7zM1090.5 168.8V166.7h1V168.8zM1091.5 169.8V168.8h1V169.8zM1093.5 173.5V168.1h1V173.5zM1094.5 168.1V160.4h1V168.1zM1096.5 163.5V160.4h1V163.5zM1098.5 163.9V162.4h1V163.9zM1099.5 165.6V163.9h1V165.6zM1100.5 168.3V158.1h1V168.3zM1102.5 158.7V158.1h1V158.7zM1103.5 167.3V158.7h1V167.3zM1105.5 167.2V164.9h1V167.2zM1107.5 166.4V164.9h1V166.4zM1108.5 167.2V163.4h1V167.2zM1110.5 164.3V163.4h1V164.3zM1111.5 168.7V164.3h1V168.7zM1113.5 167.2V166.7h1V167.2zM1114.5 167.8V166.9h1V167.8zM1116.5 169.4V166.4h1V169.4zM1118.5 167.5V164.8h1V167.5zM1119.5 164.8V163.2h1V164.8zM1120.5 163.2V163h1V163.2zM1122.5 165.5V163h1V165.5zM1124.5 169.4V163.9h1V169.4zM1126.5 170.3V163.9h1V170.3zM1127.5 170.2V165.9h1V170.2zM1129.5 170.5V165h1V170.5zM1131.5 169.2V165h1V169.2zM1133.5 169V165.5h1V169zM1135.5 171.4V165.4h1V171.4zM1137.5 172.9V165.4h1V172.9zM1138.5 168V164.2h1V168zM1139.5 164.2V163h1V164.2zM1140.5 163V162h1V163zM1142.5 167.7V162h1V167.7zM1143.5 169.7V159.3h1V169.7zM1145.5 164V159.3h1V164zM1147.5 168.4V161.3h1V168.4zM1149.5 162.3V159.8h1V162.3zM1151.5 163.5V159.8h1V163.5zM1152.5 163.8V163.5h1V163.8zM1153.5 170.8V163.8h1V170.8zM1154.5 169.2V161.3h1V169.2zM1156.5 163.8V161.3h1V163.8zM1157.5 164.9V163.8h1V164.9zM1159.5 167.2V164.8h1V167.2zM1161.5 170.6V162.7h1V170.6zM1163.5 165.1V162.7h1V165.1zM1164.5 170.7V165.1h1V170.7zM1165.5 167.7V164h1V167.7zM1167.5 165.6V164h1V165.6zM1168.5 166.2V159.1h1V166.2zM1170.5 164.5V159.1h1V164.5zM1171.5 161.8V160.8h1V161.8zM1173.5 165.8V160.8h1V165.8zM1175.5 167.6V161.1h1V167.6zM1177.5 165.4V159.3h1V165.4zM1179.5 164.3V159.3h1V164.3zM1180.5 165.4V164.3h1V165.4zM1181.5 164.5V162.1h1V164.5zM1183.5 168.8V162.1h1V168.8zM1184.5 169.6V165.8h1V169.6zM1185.5 165.8V164.7h1V165.8zM1186.5 164.7V162h1V164.7zM1188.5 166.1V162h1V166.1zM1190.5 168.1V163h1V168.1zM1191.5 172.9V166.8h1V172.9zM1193.5 167.9V157.8h1V167.9zM1195.5 165.7V157.8h1V165.7zM1196.5 169V164.6h1V169zM1197.5 164.6V160.4h1V164.6zM1199.5 165.3V160.1h1V165.3zM1201.5 168V160.1h1V168zM1202.5 166.4V164.5h1V166.4zM1203.5 164.5V164.3h1V164.5zM1205.5 169V164.3h1V169zM1206.5 167.2V163.9h1V167.2zM1208.5 167.3V163.9h1V167.3zM1210.5 166.5V165.6h1V166.5zM1211.5 166.2V165.7h1V166.2zM1213.5 166.6V165.7h1V166.6zM1214.5 170.6V164.3h1V170.6zM1216.5 168.4V164.3h1V168.4zM1217.5 167.6V165.7h1V167.6zM1218.5 165.7V161.5h1V165.7zM1220.5 163.8V161.5h1V163.8zM1221.5 169.1V163.8h1V169.1zM1222.5 167.6V164.2h1V167.6zM1223.5 164.2V162.2h1V164.2zM1225.5 169.6V162.2h1V169.6zM1227.5 167.5V162.6h1V167.5zM1229.5 166.1V165.3h1V166.1zM1230.5 167.8V166.1h1V167.8zM1231.5 169.6V159.4h1V169.6zM1233.5 167.6V159.4h1V167.6zM1234.5 171.7V167.4h1V171.7zM1235.5 167.4V161h1V167.4zM1237.5 167.3V161h1V167.3zM1239.5 169.4V163.6h1V169.4zM1241.5 172V163.7h1V172zM1242.5 172V167.5h1V172zM1244.5 167.9V158.9h1V167.9zM1246.5 163.7V158.9h1V163.7zM1248.5 172.7V162.8h1V172.7zM1249.5 165.9V162.2h1V165.9zM1250.5 162.2V157.3h1V162.2zM1252.5 167V157.3h1V167zM1254.5 174.7V160.7h1V174.7zM1255.5 167.6V167.1h1V167.6zM1257.5 168.2V167.1h1V168.2zM1258.5 171.4V168.2h1V171.4zM1259.5 172.2V169.8h1V172.2zM1260.5 169.8V165.1h1V169.8zM1263.5 167.8V164.9h1V167.8zM1264.5 171.7V167.8h1V171.7zM1265.5 170V164.2h1V170zM1266.5 164.2V161.1h1V164.2zM1268.5 174.1V161.1h1V174.1zM1270.5 166.3V161.4h1V166.3zM1271.5 165.3V164.8h1V165.3zM1272.5 164.8V164.4h1V164.8zM1274.5 168.1V161.8h1V168.1zM1276.5 168.3V161.8h1V168.3zM1277.5 168.3V161.5h1V168.3zM1279.5 163.2V161.5h1V163.2zM1280.5 165.1V163.2h1V165.1zM1282.5 165.4V164.1h1V165.4zM1283.5 165.6V162.3h1V165.6zM1285.5 165.7V162.3h1V165.7zM1286.5 166V165.7h1V166zM1287.5 169.7V166h1V169.7zM1288.5 173.7V166.4h1V173.7zM1290.5 173.5V166.4h1V173.5zM1291.5 167.2V167h1V167.2zM1292.5 167V161.7h1V167zM1293.5 161.7V161.4h1V161.7zM1295.5 168.8V161.4h1V168.8zM1296.5 170.2V168.8h1V170.2zM1297.5 169.7V166h1V169.7zM1299.5 168.3V166h1V168.3zM1300.5 166.3V163.9h1V166.3zM1302.5 169.6V162.6h1V169.6zM1304.5 170.3V162.6h1V170.3zM1306.5 170.7V162.4h1V170.7zM1308.5 164.9V162.4h1V164.9zM1309.5 166.1V163.3h1V166.1zM1311.5 166.3V163.3h1V166.3zM1313.5 167.5V159.5h1V167.5zM1315.5 163.3V159.4h1V163.3zM1317.5 167.6V159.4h1V167.6zM1318.5 164.6V160.6h1V164.6zM1320.5 169.6V160.6h1V169.6zM1322.5 166.4V164.5h1V166.4zM1323.5 169.2V161.8h1V169.2zM1325.5 166.6V161.8h1V166.6zM1326.5 167.1V163.5h1V167.1zM1328.5 164.3V163.5h1V164.3zM1329.5 165V164.3h1V165zM1330.5 168.6V165h1V168.6zM1331.5 174V168.6h1V174zM1332.5 170.9V166.1h1V170.9zM1333.5 166.1V160.4h1V166.1zM1335.5 172V160.4h1V172zM1337.5 164.1V163.1h1V164.1zM1338.5 168.2V164.1h1V168.2zM1339.5 168.2V163.8h1V168.2zM1340.5 163.8V158.5h1V163.8zM1342.5 162.7V158.5h1V162.7zM1343.5 170.1V162.7h1V170.1zM1345.5 171.6V164.9h1V171.6zM1346.5 170V161.2h1V170zM1348.5 169.1V161.2h1V169.1zM1350.5 168.4V165.3h1V168.4zM1351.5 173.9V162.3h1V173.9zM1353.5 168.3V161.2h1V168.3zM1355.5 167.1V161.2h1V167.1zM1357.5 165.8V161.2h1V165.8zM1358.5 169.3V165.8h1V169.3zM1359.5 172.1V169.3h1V172.1zM1360.5 172.4V163.3h1V172.4zM1362.5 163.7V163.3h1V163.7zM1363.5 171.1V163.7h1V171.1zM1364.5 168V163.3h1V168zM1366.5 166.4V163.3h1V166.4zM1367.5 164.3V163.1h1V164.3zM1369.5 168.8V163.1h1V168.8zM1371.5 164.6V164h1V164.6zM1372.5 170.2V162.6h1V170.2zM1374.5 166.8V162.6h1V166.8zM1375.5 170.3V160.8h1V170.3zM1377.5 169V160.8h1V169zM1379.5 166.8V166.4h1V166.8zM1381.5 169.5V165.1h1V169.5zM1382.5 165.1V161.4h1V165.1zM1383.5 161.4V157.4h1V161.4zM1385.5 164V157.4h1V164zM1386.5 166V164h1V166zM1387.5 166.5V162.8h1V166.5zM1389.5 168.3V162.8h1V168.3zM1390.5 168V162.9h1V168zM1391.5 162.9V160.8h1V162.9zM1393.5 162.5V160.8h1V162.5zM1395.5 168.9V161.2h1V168.9zM1396.5 165.1V161.4h1V165.1zM1398.5 171.9V161.4h1V171.9zM1399.5 164.8V163.1h1V164.8zM1402.5 171.2V163.3h1V171.2zM1403.5 163.6V162.6h1V163.6zM1405.5 164.5V162.6h1V164.5zM1407.5 165.4V162.9h1V165.4zM1409.5 164.6V162.9h1V164.6zM1410.5 167.9V164.6h1V167.9zM1413.5 170.6V167.5h1V170.6zM1414.5 170V165.6h1V170zM1416.5 167.7V165.6h1V167.7zM1417.5 168.4V167.7h1V168.4zM1418.5 171.5V165.3h1V171.5zM1421.5 169.5V164.2h1V169.5zM1423.5 168.4V164.2h1V168.4zM1424.5 171.2V168.4h1V171.2zM1425.5 169.4V165.1h1V169.4zM1427.5 169.2V165.1h1V169.2zM1428.5 166.5V164h1V166.5zM1430.5 164.9V164h1V164.9zM1431.5 167.4V164.9h1V167.4zM1432.5 167.7V165.5h1V167.7zM1434.5 165.8V162.7h1V165.8zM1436.5 167.6V162.7h1V167.6zM1437.5 171.9V166.1h1V171.9zM1439.5 169.8V162.2h1V169.8zM1441.5 166.9V162.2h1V166.9zM1443.5 168V162.4h1V168zM1444.5 169.8V164.7h1V169.8zM1446.5 168.3V161.5h1V168.3zM1447.5 161.5V161.1h1V161.5zM1449.5 167.1V161.1h1V167.1zM1450.5 168.5V167.1h1V168.5zM1451.5 169.6V167h1V169.6zM1452.5 167V162.3h1V167zM1454.5 163.8V162.3h1V163.8zM1455.5 164.8V163.8h1V164.8zM1456.5 168.3V164.3h1V168.3zM1458.5 167.3V164.3h1V167.3zM1459.5 170.5V165.9h1V170.5zM1461.5 168.4V165.9h1V168.4zM1463.5 168.1V167.6h1V168.1zM1464.5 169.5V163.4h1V169.5zM1466.5 166.4V163.4h1V166.4zM1467.5 164.3V163.3h1V164.3zM1469.5 168.7V163.3h1V168.7zM1471.5 169.1V164.4h1V169.1zM1472.5 169.8V163.1h1V169.8zM1474.5 164.8V163.1h1V164.8zM1475.5 165.4V164.8h1V165.4zM1478.5 172.4V162h1V172.4zM1480.5 168.4V162h1V168.4zM1481.5 167.8V160.5h1V167.8zM1484.5 164.6V160.5h1V164.6zM1485.5 167.5V164.6h1V167.5zM1486.5 171.2V167.5h1V171.2zM1487.5 170.7V161.6h1V170.7zM1489.5 164V161.6h1V164zM1490.5 165.5V164h1V165.5zM1491.5 167.1V165.1h1V167.1zM1493.5 168.3V165.1h1V168.3zM1494.5 166V163.4h1V166zM1496.5 164.3V161.2h1V164.3zM1498.5 163.9V161.2h1V163.9zM1499.5 168V161.7h1V168zM1501.5 167.5V161.7h1V167.5zM1503.5 168V165.7h1V168zM1505.5 167.2V165h1V167.2zM1507.5 165.9V164.4h1V165.9zM1508.5 164.4V164.1h1V164.4zM1510.5 166.1V163.7h1V166.1zM1512.5 171.3V163.7h1V171.3zM1513.5 173.6V162.6h1V173.6zM1515.5 168.7V157.3h1V168.7zM1517.5 172.3V157.3h1V172.3zM1519.5 164.7V164h1V164.7zM1520.5 171.6V163.3h1V171.6zM1522.5 174.5V162.6h1V174.5zM1524.5 167.3V162.6h1V167.3zM1526.5 168.6V163.1h1V168.6zM1527.5 163.1V162.3h1V163.1zM1529.5 170.4V162.3h1V170.4zM1531.5 168.2V163.1h1V168.2zM1533.5 168.2V165.9h1V168.2zM1534.5 165.9V164.7h1V165.9zM1535.5 164.7V157.3h1V164.7zM1537.5 167.2V157.3h1V167.2zM1538.5 168.4V167.2h1V168.4zM1540.5 169.5V165.8h1V169.5zM1541.5 165.8V165.4h1V165.8zM1543.5 169.5V165.4h1V169.5zM1545.5 173.1V161.3h1V173.1zM1547.5 165.1V161.3h1V165.1zM1548.5 165.7V165.1h1V165.7zM1549.5 170.2V165.7h1V170.2zM1550.5 174.9V164.9h1V174.9zM1551.5 164.9V163.7h1V164.9zM1553.5 169.1V163.7h1V169.1zM1554.5 170.5V165.4h1V170.5zM1556.5 166.7V165.2h1V166.7zM1557.5 165.2V164.7h1V165.2zM1559.5 167V164.7h1V167zM1560.5 171.6V165.1h1V171.6zM1562.5 171.4V165.1h1V171.4zM1564.5 171.5V167.2h1V171.5zM1565.5 175.2V161.4h1V175.2zM1567.5 169.6V161.4h1V169.6zM1568.5 164.1V162h1V164.1zM1570.5 167.9V162h1V167.9zM1572.5 170.6V163.7h1V170.6zM1573.5 163.7V163.1h1V163.7zM1575.5 168.8V163.1h1V168.8zM1577.5 167.1V164.3h1V167.1zM1578.5 166.9V165.5h1V166.9zM1581.5 167.9V162.5h1V167.9zM1583.5 171V162.5h1V171zM1584.5 166.2V163.2h1V166.2zM1586.5 165.5V163.2h1V165.5zM1587.5 167V164.2h1V167zM1589.5 167.4V162.2h1V167.4zM1592.5 166.9V162.4h1V166.9zM1593.5 165.9V160.2h1V165.9zM1595.5 165.1V160.2h1V165.1zM1596.5 169.7V165.1h1V169.7zM1597.5 167.1V164.9h1V167.1zM1599.5 169.4V160.5h1V169.4zM1601.5 161.2V159.9h1V161.2zM1603.5 165.4V159.9h1V165.4zM1605.5 167V162.5h1V167zM1606.5 163.4V161.8h1V163.4zM1608.5 165.1V161.8h1V165.1zM1610.5 164.6V162.1h1V164.6zM1611.5 171.2V164h1V171.2zM1613.5 171.4V164h1V171.4zM1614.5 166.3V164.2h1V166.3zM1616.5 168.4V164.2h1V168.4zM1617.5 169.1V165.2h1V169.1zM1618.5 165.2V164.7h1V165.2zM1619.5 164.7V161h1V164.7zM1621.5 170V161h1V170zM1622.5 169.9V169h1V169.9zM1623.5 169V165.2h1V169zM1624.5 165.2V164.8h1V165.2zM1625.5 164.8V164h1V164.8zM1627.5 164.5V164h1V164.5zM1628.5 169V164.5h1V169zM1629.5 172.5V164.6h1V172.5zM1630.5 164.6V163.3h1V164.6zM1631.5 163.3V160.6h1V163.3zM1633.5 166.1V160.6h1V166.1zM1634.5 165.4V161.3h1V165.4zM1636.5 166.3V160.8h1V166.3zM1637.5 160.8V159.3h1V160.8zM1639.5 164.2V159.3h1V164.2zM1641.5 165.9V163.2h1V165.9zM1642.5 166.8V165.9h1V166.8zM1643.5 171.9V164.6h1V171.9zM1646.5 169.5V164.1h1V169.5zM1648.5 168.6V163.8h1V168.6zM1649.5 163.8V161.7h1V163.8zM1651.5 162.7V161.7h1V162.7zM1652.5 167.7V160.2h1V167.7zM1654.5 162.3V160.2h1V162.3zM1655.5 164.7V162.3h1V164.7zM1656.5 165.7V164.3h1V165.7zM1658.5 167.7V164.3h1V167.7zM1659.5 170.3V167.5h1V170.3zM1661.5 168V167.5h1V168zM1663.5 168.7V168h1V168.7zM1664.5 170.4V168.7h1V170.4zM1665.5 170.9V164.3h1V170.9zM1667.5 164.6V164.3h1V164.6zM1668.5 165.4V164.6h1V165.4zM1669.5 166.2V165.4h1V166.2zM1670.5 168V166.2h1V168zM1671.5 168.4V168h1V168.4zM1672.5 169.1V164.1h1V169.1zM1673.5 164.1V160h1V164.1zM1675.5 163.9V160h1V163.9zM1676.5 169.8V163.9h1V169.8zM1677.5 169.5V167.2h1V169.5zM1678.5 167.2V166.5h1V167.2zM1680.5 167.6V163.8h1V167.6zM1682.5 168.7V161.6h1V168.7zM1684.5 167.8V159.7h1V167.8zM1686.5 165.4V159.7h1V165.4zM1687.5 171.5V165.4h1V171.5zM1688.5 165.9V164.1h1V165.9zM1689.5 164.1V159h1V164.1zM1691.5 166.5V159h1V166.5zM1692.5 163V161.4h1V163zM1694.5 171.7V161.4h1V171.7zM1696.5 166.7V166.1h1V166.7zM1698.5 168.9V166.8h1V168.9zM1699.5 167.4V163.7h1V167.4zM1701.5 165.6V163.1h1V165.6zM1703.5 165.5V163.1h1V165.5zM1705.5 164.9V161.6h1V164.9zM1707.5 167.8V161.6h1V167.8zM1708.5 164.4V163h1V164.4zM1709.5 163V160.8h1V163zM1711.5 167.1V160.8h1V167.1zM1713.5 170.7V163h1V170.7zM1715.5 164.2V163.3h1V164.2zM1716.5 168V164.2h1V168zM1717.5 171.2V168h1V171.2zM1718.5 173.5V165.9h1V173.5zM1719.5 165.9V165.1h1V165.9zM1721.5 167.2V163.3h1V167.2zM1723.5 168.7V158.8h1V168.7zM1725.5 167.6V158.8h1V167.6zM1726.5 164.1V163.3h1V164.1zM1728.5 165.6V163.3h1V165.6zM1729.5 166.8V160.9h1V166.8zM1731.5 164.7V160.9h1V164.7zM1732.5 165.2V164.7h1V165.2zM1733.5 165.5V165.1h1V165.5zM1735.5 165.5V165.1h1V165.5zM1736.5 169V165.5h1V169zM1737.5 167.2V165h1V167.2zM1738.5 165V163.8h1V165zM1740.5 165.2V163.8h1V165.2zM1741.5 166.2V165.2h1V166.2zM1742.5 167V166.2h1V167zM1743.5 166.3V165.1h1V166.3zM1745.5 169.4V165.1h1V169.4zM1747.5 169.6V167.2h1V169.6zM1748.5 170.9V167.2h1V170.9zM1750.5 169.7V167.2h1V169.7zM1752.5 169.5V166.5h1V169.5zM1754.5 170.2V166.5h1V170.2zM1755.5 172.4V163.3h1V172.4zM1757.5 163.2V161.6h1V163.2zM1758.5 161.6V160.4h1V161.6zM1760.5 168V160.4h1V168zM1762.5 164.8V161h1V164.8zM1763.5 172.6V164.8h1V172.6zM1764.5 168.2V161.6h1V168.2zM1766.5 167.1V161.6h1V167.1zM1767.5 165.9V163.6h1V165.9zM1769.5 165.1V163.6h1V165.1zM1770.5 168.2V162.5h1V168.2zM1771.5 162.5V161.7h1V162.5zM1773.5 163.2V161.7h1V163.2zM1774.5 165.5V163.2h1V165.5zM1775.5 166.1V165.5h1V166.1zM1777.5 166.9V163.5h1V166.9zM1779.5 166.9V163.5h1V166.9zM1780.5 168.8V164.9h1V168.8zM1782.5 165.2V160.6h1V165.2zM1784.5 166.5V160.6h1V166.5zM1786.5 171.7V163.6h1V171.7zM1787.5 164.6V163.9h1V164.6zM1789.5 169.7V163.9h1V169.7zM1790.5 171.3V167.2h1V171.3zM1792.5 168.8V163h1V168.8zM1793.5 163V157.1h1V163zM1795.5 163.6V157.1h1V163.6zM1796.5 164.4V163.6h1V164.4zM1797.5 166.2V164.4h1V166.2zM1798.5 169.1V166.2h1V169.1zM1800.5 172.1V166.5h1V172.1zM1801.5 166.5V161.9h1V166.5zM1803.5 168.5V161.9h1V168.5zM1805.5 171V164.6h1V171zM1806.5 169.2V167.2h1V169.2zM1809.5 168.7V162.3h1V168.7zM1811.5 170.2V162.3h1V170.2zM1812.5 165.7V165.4h1V165.7zM1813.5 165.4V163.7h1V165.4zM1815.5 165.5V163.7h1V165.5zM1816.5 166.5V162.3h1V166.5zM1818.5 170.9V162.3h1V170.9zM1819.5 168.9V165.3h1V168.9zM1821.5 167.1V165.3h1V167.1zM1822.5 173.4V167.1h1V173.4zM1824.5 171.9V170.6h1V171.9zM1825.5 172.9V166.1h1V172.9zM1827.5 170.4V166.1h1V170.4zM1828.5 167.9V165.8h1V167.9zM1830.5 168.8V164.4h1V168.8zM1832.5 168.7V164.4h1V168.7zM1834.5 166.7V164.5h1V166.7zM1835.5 164.5V160.9h1V164.5zM1837.5 165.4V160.9h1V165.4zM1838.5 167.5V163.6h1V167.5zM1839.5 163.6V161.7h1V163.6zM1841.5 165.7V160.9h1V165.7zM1843.5 161.8V160.9h1V161.8zM1844.5 165.4V160.7h1V165.4zM1846.5 163V160.7h1V163zM1847.5 167.4V163h1V167.4zM1848.5 166.7V164.6h1V166.7zM1850.5 169.8V164.6h1V169.8zM1851.5 170.5V168.1h1V170.5zM1852.5 168.1V164.7h1V168.1zM1854.5 171.9V163.8h1V171.9zM1855.5 163.8V161.6h1V163.8zM1857.5 170.3V157.4h1V170.3zM1859.5 167.3V157.4h1V167.3zM1860.5 164.9V162.1h1V164.9zM1862.5 163.9V162.1h1V163.9zM1865.5 167.6V162.8h1V167.6zM1866.5 167.9V160.3h1V167.9zM1868.5 162.2V160.3h1V162.2zM1869.5 164.7V162.2h1V164.7zM1870.5 165.8V164.7h1V165.8zM1871.5 170V163.4h1V170zM1872.5 163.4V160.8h1V163.4zM1874.5 168.5V160.8h1V168.5zM1876.5 166.9V166h1V166.9zM1877.5 170.3V166.9h1V170.3zM1879.5 171.1V162.5h1V171.1zM1881.5 168.8V162.5h1V168.8zM1882.5 167.5V160.4h1V167.5zM1884.5 163.1V160.4h1V163.1zM1885.5 165.1V162.2h1V165.1zM1887.5 174.6V162.2h1V174.6zM1888.5 167V164.9h1V167zM1890.5 170.3V164.9h1V170.3zM1891.5 165.5V163.7h1V165.5zM1893.5 165.2V163.7h1V165.2zM1894.5 167.3V162.8h1V167.3zM1895.5 162.8V161.7h1V162.8zM1897.5 166.9V161.7h1V166.9zM1899.5 166.3V163.3h1V166.3zM1900.5 168.4V166.3h1V168.4zM1901.5 172.4V168.4h1V172.4zM1902.5 168.4V157.2h1V168.4zM1904.5 166.7V157.2h1V166.7zM1905.5 166.7V163.1h1V166.7zM1907.5 163.8V161.4h1V163.8zM1909.5 165.3V161.4h1V165.3zM1911.5 166V164.9h1V166zM1912.5 167.5V166h1V167.5zM1913.5 166.7V166.4h1V166.7zM1914.5 166.4V160.5h1V166.4zM1916.5 162.8V160.5h1V162.8zM1917.5 166.2V162.8h1V166.2zM1918.5 168.9V166.2h1V168.9zM1919.5 174V168.4h1V174zM1920.5 168.4V162.1h1V168.4zM1922.5 162.5V161.6h1V162.5zM1924.5 165.9V158.6h1V165.9zM1926.5 169.4V158.6h1V169.4zM1927.5 163.5V160.5h1V163.5zM1929.5 165.8V160.5h1V165.8zM1930.5 165.2V160.9h1V165.2zM1932.5 169.4V160.9h1V169.4zM1934.5 164.2V161.5h1V164.2zM1935.5 170.1V164.2h1V170.1zM1936.5 170.6V163.2h1V170.6zM1937.5 163.2V162.1h1V163.2zM1940.5 172.1V162h1V172.1zM1942.5 169.6V167.6h1V169.6zM1943.5 167.6V165.4h1V167.6zM1945.5 169.3V165h1V169.3zM1947.5 166V164.6h1V166zM1949.5 168.3V162h1V168.3zM1952.5 165.4V161.7h1V165.4zM1954.5 163.1V161.7h1V163.1zM1956.5 169.6V163.1h1V169.6zM1957.5 167.7V166h1V167.7zM1959.5 169.4V165.7h1V169.4zM1961.5 166.2V164.7h1V166.2zM1963.5 165.9V164.7h1V165.9zM1964.5 168.8V165.9h1V168.8zM1965.5 167.6V163.3h1V167.6zM1967.5 168.4V163.3h1V168.4zM1968.5 170.7V164.4h1V170.7zM1970.5 166V164.4h1V166z" fill="#cfe8ca"/><path d="M47.5 192V165.8H48.5V156.7H49.5V166.2H50.5V158.8H51.5V165.7H52.5V157.8H53.5V154.4H54.5V161.1H55.5V150.1H56.5V163.9H57.5V160.2H58.5V162H59.5V159.5H60.5V156.1H61.5V167.9H62.5V166.4H63.5V166.6H64.5V163.7H65.5V147H66.5V157.1H67.5V161.7H68.5V160.9H69.5V160.1H70.5V158.2H71.5V152.8H72.5V157.7H73.5V156.6H74.5V156.4H75.5V155.3H76.5V159.9H77.5V157.3H78.5V153.7H79.5V158.2H80.5V159.3H81.5V159.7H82.5V164.6H83.5V158H84.5V156.4H85.5V157.2H86.5V159.7H87.5V153.2H88.5V163.3H89.5V159.4H90.5V156.9H91.5V150.5H92.5V159.7H93.5V159.9H94.5V160.9H95.5V155.9H96.5V160.2H97.5V163.6H98.5V155.9H99.5V167.8H100.5V159.5H101.5V154.2H102.5V160.5H103.5V161.2H104.5V157.3H105.5V156.5H106.5V162.3H107.5V150.4H108.5V160.1H109.5V161H110.5V163.5H111.5V157.7H112.5V158H113.5V168.2H114.5V163.2H115.5V158.3H116.5V157.5H117.5V162.1H118.5V159H119.5V162.8H120.5V166.4H121.5V154.9H122.5V162.8H123.5V160.2H124.5V152H125.5V164.1H126.5V155.2H127.5V167.6H128.5V167.6H129.5V156.4H130.5V161.8H131.5V161.6H132.5V158.6H133.5V164.8H134.5V154.4H135.5V167.5H136.5V157.7H137.5V164.1H138.5V166.1H139.5V156.1H140.5V152.9H141.5V161.9H142.5V161.9H143.5V168.7H144.5V155.5H145.5V156H146.5V164.4H147.5V163H148.5V168.5H149.5V161.6H150.5V163.5H151.5V160.9H152.5V156.6H153.5V169.7H154.5V164.5H155.5V160.3H156.5V158.6H157.5V158.8H158.5V164.9H159.5V158.7H160.5V157.7H161.5V164.3H162.5V162.4H163.5V165.1H164.5V161.1H165.5V165.4H166.5V165.2H167.5V157.6H168.5V161.2H169.5V161.3H170.5V163.6H171.5V164.9H172.5V160.1H173.5V163.2H174.5V160.9H175.5V161.5H176.5V165.4H177.5V166.5H178.5V158.8H179.5V163.6H180.5V165H181.5V157.9H182.5V163.1H183.5V163.1H184.5V164.2H185.5V167.8H186.5V168.4H187.5V161.2H188.5V156.7H189.5V159.7H190.5V169.1H191.5V166.6H192.5V157.5H193.5V158.6H194.5V164.5H195.5V164.3H196.5V167.1H197.5V161H198.5V151.8H199.5V170.1H200.5V166.9H201.5V160.7H202.5V159.3H203.5V169.8H204.5V164.1H205.5V162.6H206.5V162.4H207.5V166.9H208.5V161.8H209.5V169.8H210.5V159.9H211.5V158.8H212.5V161.7H213.5V162.4H214.5V165H215.5V166.6H216.5V160.5H217.5V164.9H218.5V158.5H219.5V161.4H220.5V158.6H221.5V165.9H222.5V168.2H223.5V164.3H224.5V158.7H225.5V169.5H226.5V168H227.5V164.1H228.5V167.7H229.5V154.6H230.5V164.2H231.5V160.6H232.5V160.1H233.5V167.2H234.5V161.6H235.5V161.7H236.5V163.5H237.5V162.7H238.5V165.1H239.5V167.2H240.5V158.4H241.5V160.2H242.5V163.7H243.5V168H244.5V166.7H245.5V166.1H246.5V162.1H247.5V167H248.5V160.4H249.5V161.9H250.5V164.1H251.5V160.8H252.5V167.4H253.5V160.8H254.5V162H255.5V163.3H256.5V163.8H257.5V161.6H258.5V163.2H259.5V168.8H260.5V160.9H261.5V167.4H262.5V161.7H263.5V170.6H264.5V169.9H265.5V163.1H266.5V162.7H267.5V168.3H268.5V165.7H269.5V162.5H270.5V156.9H271.5V161.9H272.5V154.2H273.5V170.3H274.5V165.7H275.5V167.8H276.5V164H277.5V165.9H278.5V161.6H279.5V163.7H280.5V162.6H281.5V164.1H282.5V157.6H283.5V165.7H284.5V166.2H285.5V167.3H286.5V156H287.5V163.8H288.5V163.5H289.5V161.6H290.5V156.5H291.5V165.6H292.5V162.8H293.5V163.5H294.5V165.7H295.5V159.3H296.5V166.8H297.5V162H298.5V164.9H299.5V165.9H300.5V167H301.5V157.1H302.5V165.1H303.5V162.1H304.5V167.9H305.5V163.1H306.5V160.3H307.5V164.2H308.5V162.9H309.5V167.4H310.5V157.5H311.5V156.9H312.5V162.1H313.5V168.3H314.5V153.5H315.5V160.1H316.5V160.2H317.5V163.6H318.5V158.5H319.5V167.9H320.5V164.7H321.5V165.4H322.5V163.8H323.5V162.6H324.5V162.3H325.5V158.5H326.5V169H327.5V162.3H328.5V152.4H329.5V154.2H330.5V166.4H331.5V159.1H332.5V171.6H333.5V162.8H334.5V154.5H335.5V163.6H336.5V165.2H337.5V161.5H338.5V164H339.5V167.6H340.5V164.9H341.5V165.5H342.5V160.9H343.5V151.6H344.5V162H345.5V155.1H346.5V160.4H347.5V163.7H348.5V163.7H349.5V166.4H350.5V161.5H351.5V161.4H352.5V154.2H353.5V160H354.5V162H355.5V162.8H356.5V162.9H357.5V156.1H358.5V166.8H359.5V164.6H360.5V160.3H361.5V161.5H362.5V159.4H363.5V159.1H364.5V160.8H365.5V163.9H366.5V159.7H367.5V168.1H368.5V163.4H369.5V161.3H370.5V164.5H371.5V154.1H372.5V159.5H373.5V165.3H374.5V162.3H375.5V160.6H376.5V159.5H377.5V157.8H378.5V161.8H379.5V161.3H380.5V164.9H381.5V162.1H382.5V162.1H383.5V152.3H384.5V157H385.5V159.6H386.5V162.4H387.5V152.7H388.5V160.6H389.5V163.2H390.5V163.8H391.5V158.8H392.5V159.1H393.5V157.9H394.5V157.5H395.5V158.1H396.5V155.7H397.5V165.6H398.5V154.7H399.5V160H400.5V167.4H401.5V159H402.5V161.2H403.5V155.5H404.5V156.3H405.5V162.3H406.5V159.2H407.5V167.4H408.5V163.4H409.5V154.4H410.5V165.5H411.5V161.6H412.5V156.8H413.5V157.6H414.5V155.9H415.5V156.1H416.5V154.8H417.5V166.8H418.5V159H419.5V162.5H420.5V161.1H421.5V162.2H422.5V159.2H423.5V163.3H424.5V157.2H425.5V156H426.5V160H427.5V156.3H428.5V168.2H429.5V158.6H430.5V159.3H431.5V159.9H432.5V162.9H433.5V159.2H434.5V157.3H435.5V162.5H436.5V158.6H437.5V161.1H438.5V157.4H439.5V170.4H440.5V163.5H441.5V151.1H442.5V159.3H443.5V165.5H444.5V162.6H445.5V162.3H446.5V156.1H447.5V165.8H448.5V162H449.5V159.4H450.5V162.1H451.5V157.4H452.5V169.2H453.5V161.3H454.5V156.7H455.5V153.2H456.5V156.6H457.5V158.1H458.5V161.3H459.5V165.5H460.5V155.7H461.5V158.8H462.5V160H463.5V159.5H464.5V159.8H465.5V165.9H466.5V156.9H467.5V162.5H468.5V158.1H469.5V167.6H470.5V165.2H471.5V158H472.5V171.7H473.5V158.4H474.5V157.3H475.5V162.1H476.5V165.6H477.5V148.8H478.5V160.6H479.5V164H480.5V165.1H481.5V162.6H482.5V166.3H483.5V161.7H484.5V162H485.5V156.7H486.5V162.3H487.5V160.9H488.5V160.6H489.5V164.6H490.5V160H491.5V159H492.5V159.4H493.5V160.7H494.5V163.2H495.5V158.1H496.5V167.9H497.5V161.2H498.5V164.8H499.5V162.7H500.5V167.3H501.5V154.9H502.5V165.2H503.5V158.5H504.5V165.5H505.5V159.1H506.5V169.5H507.5V159.8H508.5V158.5H509.5V158.1H510.5V165.3H511.5V158.4H512.5V157.5H513.5V164.2H514.5V159.3H515.5V164.5H516.5V159.9H517.5V168.2H518.5V167.1H519.5V165.6H520.5V154.8H521.5V156.9H522.5V167.8H523.5V165.8H524.5V152.1H525.5V160.6H526.5V157.4H527.5V165H528.5V162.6H529.5V161.7H530.5V164.5H531.5V160.5H532.5V153.3H533.5V165H534.5V166.3H535.5V167.1H536.5V162.9H537.5V161.7H538.5V160.6H539.5V165.5H540.5V166.4H541.5V166.6H542.5V164H543.5V164.4H544.5V157.9H545.5V167.5H546.5V167.8H547.5V163H548.5V176.6H549.5V159.2H550.5V167.1H551.5V171.6H552.5V168.4H553.5V171.6H554.5V164.1H555.5V164.8H556.5V164.1H557.5V163.5H558.5V164.8H559.5V160.4H560.5V167.7H561.5V157.6H562.5V166.6H563.5V165H564.5V163.5H565.5V154.6H566.5V167.8H567.5V170.2H568.5V162.5H569.5V171.8H570.5V157.7H571.5V160H572.5V163.5H573.5V163.6H574.5V164.4H575.5V157.7H576.5V166.8H577.5V164.8H578.5V155.1H579.5V165.4H580.5V153.4H581.5V166.5H582.5V166.3H583.5V161.6H584.5V161.7H585.5V166.2H586.5V153.9H587.5V162H588.5V160.7H589.5V161.8H590.5V164.2H591.5V157H592.5V164.2H593.5V166.9H594.5V165.2H595.5V163.1H596.5V164.3H597.5V162.4H598.5V167.3H599.5V167.8H600.5V159.5H601.5V163.2H602.5V158.1H603.5V164.6H604.5V153.7H605.5V168.2H606.5V164.8H607.5V166.3H608.5V163.6H609.5V160.6H610.5V163.4H611.5V164.4H612.5V160.1H613.5V162.4H614.5V170.1H615.5V170.5H616.5V166H617.5V168.9H618.5V167.2H619.5V162.3H620.5V171.2H621.5V165.3H622.5V160.9H623.5V162.8H624.5V165.6H625.5V169.8H626.5V161.5H627.5V162.7H628.5V162.2H629.5V164.2H630.5V168.4H631.5V170.5H632.5V162H633.5V158.2H634.5V167H635.5V163.6H636.5V154.9H637.5V167.6H638.5V162.1H639.5V160.7H640.5V159.4H641.5V166.4H642.5V163.3H643.5V156.3H644.5V161.2H645.5V159.3H646.5V159.2H647.5V158.7H648.5V164.5H649.5V161.4H650.5V169.5H651.5V160.2H652.5V169H653.5V159.5H654.5V160.7H655.5V165.1H656.5V163.8H657.5V149H658.5V161.7H659.5V161.9H660.5V165.1H661.5V171.5H662.5V164.6H663.5V156.6H664.5V158.1H665.5V162.9H666.5V165.5H667.5V158.4H668.5V158.5H669.5V168.1H670.5V167.2H671.5V161.1H672.5V159.8H673.5V160.4H674.5V160.8H675.5V163.4H676.5V155.6H677.5V159.9H678.5V162.9H679.5V163.1H680.5V161.7H681.5V160.3H682.5V168.8H683.5V162.2H684.5V163H685.5V157.9H686.5V160.8H687.5V160.7H688.5V163.2H689.5V154H690.5V164.5H691.5V162.7H692.5V163.7H693.5V159H694.5V162.1H695.5V162.8H696.5V163.3H697.5V162H698.5V162.1H699.5V159.4H700.5V162.3H701.5V164.4H702.5V159.1H703.5V162H704.5V160.7H705.5V155.2H706.5V167.8H707.5V157.5H708.5V165.3H709.5V159.5H710.5V166H711.5V158.8H712.5V162H713.5V164.5H714.5V157H715.5V163H716.5V161.2H717.5V164.5H718.5V157.7H719.5V160.6H720.5V163H721.5V157.5H722.5V162.2H723.5V160.9H724.5V163.6H725.5V156.7H726.5V156.1H727.5V164.5H728.5V162H729.5V156.8H730.5V156.4H731.5V161H732.5V158.7H733.5V168.1H734.5V164H735.5V153.9H736.5V164.5H737.5V164.1H738.5V161.7H739.5V157.5H740.5V159.5H741.5V157.2H742.5V161.8H743.5V158.1H744.5V159.4H745.5V161.7H746.5V155.3H747.5V162.8H748.5V166.4H749.5V165.9H750.5V167.6H751.5V156.8H752.5V165.3H753.5V163H754.5V162.5H755.5V153H756.5V157.4H757.5V165.7H758.5V162.7H759.5V160.5H760.5V160.2H761.5V161.6H762.5V162.6H763.5V159.1H764.5V155.4H765.5V157.1H766.5V159.9H767.5V156.2H768.5V159.6H769.5V160.7H770.5V159.4H771.5V161.2H772.5V161.4H773.5V164.1H774.5V156.4H775.5V164.5H776.5V162.2H777.5V157.1H778.5V157.9H779.5V162.1H780.5V160.4H781.5V169.1H782.5V158.6H783.5V162.4H784.5V163.6H785.5V149.6H786.5V154.6H787.5V160H788.5V162.4H789.5V158.8H790.5V161.4H791.5V165.5H792.5V163.4H793.5V158.5H794.5V161.9H795.5V166.2H796.5V157H797.5V162.8H798.5V160.4H799.5V160.2H800.5V158.3H801.5V163.2H802.5V161.6H803.5V163.3H804.5V163.6H805.5V160.6H806.5V163.4H807.5V159.9H808.5V158.6H809.5V164.2H810.5V169.8H811.5V159.2H812.5V167.1H813.5V168.4H814.5V162.9H815.5V170.7H816.5V159.4H817.5V170.4H818.5V166.5H819.5V168H820.5V164.8H821.5V164.7H822.5V163.5H823.5V163.2H824.5V164.8H825.5V165.9H826.5V169.5H827.5V170.2H828.5V164.8H829.5V169.5H830.5V165.4H831.5V165.5H832.5V168.5H833.5V166.1H834.5V167.9H835.5V165.1H836.5V172.1H837.5V164H838.5V164.7H839.5V166.4H840.5V163.3H841.5V168.1H842.5V169.9H843.5V168.1H844.5V164.3H845.5V164.2H846.5V164.1H847.5V165.5H848.5V171.2H849.5V159.1H850.5V162.4H851.5V156.9H852.5V165.9H853.5V162.6H854.5V168.1H855.5V161.7H856.5V165.6H857.5V162.8H858.5V165.3H859.5V169.1H860.5V168.2H861.5V172.5H862.5V168.1H863.5V167.9H864.5V160.1H865.5V169.7H866.5V169.5H867.5V165.3H868.5V169.8H869.5V166.4H870.5V169.5H871.5V169.9H872.5V166H873.5V168.5H874.5V168.7H875.5V175.6H876.5V164.8H877.5V156.2H878.5V166.9H879.5V168.6H880.5V165.7H881.5V169H882.5V165.5H883.5V167.9H884.5V160.4H885.5V166.6H886.5V166.9H887.5V162H888.5V162.6H889.5V169.1H890.5V160.3H891.5V168.6H892.5V171H893.5V167.4H894.5V165.3H895.5V164H896.5V168.5H897.5V164H898.5V164.2H899.5V172.7H900.5V158.1H901.5V161.2H902.5V167.8H903.5V161H904.5V166H905.5V164.4H906.5V168.6H907.5V170.6H908.5V164.2H909.5V169.8H910.5V164.4H911.5V165.7H912.5V165H913.5V163.9H914.5V169H915.5V163.6H916.5V161.3H917.5V165.7H918.5V165.5H919.5V169.7H920.5V163.3H921.5V161.8H922.5V160.5H923.5V160.7H924.5V169.7H925.5V165.9H926.5V170.2H927.5V166.1H928.5V165.8H929.5V166.5H930.5V162H931.5V168.5H932.5V165.8H933.5V166.5H934.5V165.8H935.5V170.2H936.5V169.6H937.5V159.7H938.5V163.3H939.5V164.1H940.5V169.1H941.5V167.7H942.5V163.3H943.5V166.7H944.5V166.6H945.5V170.6H946.5V163.7H947.5V164.7H948.5V168.9H949.5V177.7H950.5V163.1H951.5V165.1H952.5V156H953.5V162.8H954.5V162.7H955.5V167.3H956.5V161.1H957.5V171.2H958.5V160.4H959.5V171.5H960.5V162.4H961.5V162.5H962.5V165.3H963.5V164.2H964.5V168.5H965.5V160.5H966.5V163H967.5V161.8H968.5V164.6H969.5V167.4H970.5V168.1H971.5V165.8H972.5V162.3H973.5V168.7H974.5V166.7H975.5V166.9H976.5V164.9H977.5V165.3H978.5V169.5H979.5V165.9H980.5V159.8H981.5V171H982.5V161.8H983.5V165H984.5V159.5H985.5V172.4H986.5V163.6H987.5V163.9H988.5V159.1H989.5V163.6H990.5V172.9H991.5V165.5H992.5V169.1H993.5V165.3H994.5V168.4H995.5V164.6H996.5V166.9H997.5V166H998.5V161.6H999.5V162.9H1000.5V168.3H1001.5V164.5H1002.5V164.9H1003.5V166.8H1004.5V169.5H1005.5V164.3H1006.5V165.9H1007.5V173.3H1008.5V164.1H1009.5V164.9H1010.5V170H1011.5V163.3H1012.5V168.9H1013.5V164.9H1014.5V163.5H1015.5V168.6H1016.5V167.4H1017.5V161.9H1018.5V157.9H1019.5V167.7H1020.5V161.9H1021.5V169.8H1022.5V161.9H1023.5V162.8H1024.5V171.3H1025.5V166.7H1026.5V165.8H1027.5V166.3H1028.5V169.3H1029.5V175.7H1030.5V166.1H1031.5V168.9H1032.5V168.9H1033.5V166.4H1034.5V163.2H1035.5V167.2H1036.5V160.1H1037.5V170.2H1038.5V164.4H1039.5V160.2H1040.5V171.5H1041.5V162.5H1042.5V170H1043.5V159.5H1044.5V166.2H1045.5V166H1046.5V173.7H1047.5V168H1048.5V164.4H1049.5V161H1050.5V161.5H1051.5V162.9H1052.5V162.8H1053.5V169.4H1054.5V164.8H1055.5V167.6H1056.5V169.2H1057.5V165H1058.5V168.4H1059.5V161.2H1060.5V168H1061.5V161.2H1062.5V164.2H1063.5V166H1064.5V172.7H1065.5V166.5H1066.5V166.8H1067.5V167.4H1068.5V161.3H1069.5V162.8H1070.5V169.2H1071.5V164.8H1072.5V165.2H1073.5V167.1H1074.5V167.9H1075.5V161.8H1076.5V167.5H1077.5V169.8H1078.5V167.5H1079.5V169.2H1080.5V165.3H1081.5V160.8H1082.5V168.5H1083.5V165.3H1084.5V167.6H1085.5V164H1086.5V162.2H1087.5V163.6H1088.5V162.6H1089.5V166.7H1090.5V168.8H1091.5V169.8H1092.5V169.9H1093.5V173.5H1094.5V168.1H1095.5V160.4H1096.5V163.5H1097.5V162.4H1098.5V163.9H1099.5V165.6H1100.5V168.3H1101.5V158.1H1102.5V158.7H1103.5V167.3H1104.5V166.2H1105.5V167.2H1106.5V164.9H1107.5V166.4H1108.5V167.2H1109.5V163.4H1110.5V164.3H1111.5V168.7H1112.5V166.7H1113.5V167.2H1114.5V167.8H1115.5V166.9H1116.5V169.4H1117.5V166.4H1118.5V167.5H1119.5V164.8H1120.5V163.2H1121.5V163H1122.5V165.5H1123.5V165H1124.5V169.4H1125.5V163.9H1126.5V170.3H1127.5V170.2H1128.5V165.9H1129.5V170.5H1130.5V165H1131.5V169.2H1132.5V165.5H1133.5V169H1134.5V168.3H1135.5V171.4H1136.5V165.4H1137.5V172.9H1138.5V168H1139.5V164.2H1140.5V163H1141.5V162H1142.5V167.7H1143.5V169.7H1144.5V159.3H1145.5V164H1146.5V162.5H1147.5V168.4H1148.5V161.3H1149.5V162.3H1150.5V159.8H1151.5V163.5H1152.5V163.8H1153.5V170.8H1154.5V169.2H1155.5V161.3H1156.5V163.8H1157.5V164.9H1158.5V164.8H1159.5V167.2H1160.5V165.5H1161.5V170.6H1162.5V162.7H1163.5V165.1H1164.5V170.7H1165.5V167.7H1166.5V164H1167.5V165.6H1168.5V166.2H1169.5V159.1H1170.5V164.5H1171.5V161.8H1172.5V160.8H1173.5V165.8H1174.5V161.1H1175.5V167.6H1176.5V165.5H1177.5V165.4H1178.5V159.3H1179.5V164.3H1180.5V165.4H1181.5V164.5H1182.5V162.1H1183.5V168.8H1184.5V169.6H1185.5V165.8H1186.5V164.7H1187.5V162H1188.5V166.1H1189.5V163H1190.5V168.1H1191.5V172.9H1192.5V166.8H1193.5V167.9H1194.5V157.8H1195.5V165.7H1196.5V169H1197.5V164.6H1198.5V160.4H1199.5V165.3H1200.5V160.1H1201.5V168H1202.5V166.4H1203.5V164.5H1204.5V164.3H1205.5V169H1206.5V167.2H1207.5V163.9H1208.5V167.3H1209.5V165.6H1210.5V166.5H1211.5V166.2H1212.5V165.7H1213.5V166.6H1214.5V170.6H1215.5V164.3H1216.5V168.4H1217.5V167.6H1218.5V165.7H1219.5V161.5H1220.5V163.8H1221.5V169.1H1222.5V167.6H1223.5V164.2H1224.5V162.2H1225.5V169.6H1226.5V162.6H1227.5V167.5H1228.5V165.3H1229.5V166.1H1230.5V167.8H1231.5V169.6H1232.5V159.4H1233.5V167.6H1234.5V171.7H1235.5V167.4H1236.5V161H1237.5V167.3H1238.5V163.6H1239.5V169.4H1240.5V163.7H1241.5V172H1242.5V172H1243.5V167.5H1244.5V167.9H1245.5V158.9H1246.5V163.7H1247.5V162.8H1248.5V172.7H1249.5V165.9H1250.5V162.2H1251.5V157.3H1252.5V167H1253.5V160.7H1254.5V174.7H1255.5V167.6H1256.5V167.1H1257.5V168.2H1258.5V171.4H1259.5V172.2H1260.5V169.8H1261.5V165.1H1262.5V164.9H1263.5V167.8H1264.5V171.7H1265.5V170H1266.5V164.2H1267.5V161.1H1268.5V174.1H1269.5V161.4H1270.5V166.3H1271.5V165.3H1272.5V164.8H1273.5V164.4H1274.5V168.1H1275.5V161.8H1276.5V168.3H1277.5V168.3H1278.5V161.5H1279.5V163.2H1280.5V165.1H1281.5V164.1H1282.5V165.4H1283.5V165.6H1284.5V162.3H1285.5V165.7H1286.5V166H1287.5V169.7H1288.5V173.7H1289.5V166.4H1290.5V173.5H1291.5V167.2H1292.5V167H1293.5V161.7H1294.5V161.4H1295.5V168.8H1296.5V170.2H1297.5V169.7H1298.5V166H1299.5V168.3H1300.5V166.3H1301.5V163.9H1302.5V169.6H1303.5V162.6H1304.5V170.3H1305.5V165.1H1306.5V170.7H1307.5V162.4H1308.5V164.9H1309.5V166.1H1310.5V163.3H1311.5V166.3H1312.5V165H1313.5V167.5H1314.5V159.5H1315.5V163.3H1316.5V159.4H1317.5V167.6H1318.5V164.6H1319.5V160.6H1320.5V169.6H1321.5V164.5H1322.5V166.4H1323.5V169.2H1324.5V161.8H1325.5V166.6H1326.5V167.1H1327.5V163.5H1328.5V164.3H1329.5V165H1330.5V168.6H1331.5V174H1332.5V170.9H1333.5V166.1H1334.5V160.4H1335.5V172H1336.5V163.1H1337.5V164.1H1338.5V168.2H1339.5V168.2H1340.5V163.8H1341.5V158.5H1342.5V162.7H1343.5V170.1H1344.5V164.9H1345.5V171.6H1346.5V170H1347.5V161.2H1348.5V169.1H1349.5V165.3H1350.5V168.4H1351.5V173.9H1352.5V162.3H1353.5V168.3H1354.5V161.2H1355.5V167.1H1356.5V161.2H1357.5V165.8H1358.5V169.3H1359.5V172.1H1360.5V172.4H1361.5V163.3H1362.5V163.7H1363.5V171.1H1364.5V168H1365.5V163.3H1366.5V166.4H1367.5V164.3H1368.5V163.1H1369.5V168.8H1370.5V164H1371.5V164.6H1372.5V170.2H1373.5V162.6H1374.5V166.8H1375.5V170.3H1376.5V160.8H1377.5V169H1378.5V166.7H1379.5V166.8H1380.5V166.4H1381.5V169.5H1382.5V165.1H1383.5V161.4H1384.5V157.4H1385.5V164H1386.5V166H1387.5V166.5H1388.5V162.8H1389.5V168.3H1390.5V168H1391.5V162.9H1392.5V160.8H1393.5V162.5H1394.5V161.2H1395.5V168.9H1396.5V165.1H1397.5V161.4H1398.5V171.9H1399.5V164.8H1400.5V163.1H1401.5V163.3H1402.5V171.2H1403.5V163.6H1404.5V162.6H1405.5V164.5H1406.5V163.4H1407.5V165.4H1408.5V162.9H1409.5V164.6H1410.5V167.9H1411.5V167.4H1412.5V167.5H1413.5V170.6H1414.5V170H1415.5V165.6H1416.5V167.7H1417.5V168.4H1418.5V171.5H1419.5V165.3H1420.5V165.3H1421.5V169.5H1422.5V164.2H1423.5V168.4H1424.5V171.2H1425.5V169.4H1426.5V165.1H1427.5V169.2H1428.5V166.5H1429.5V164H1430.5V164.9H1431.5V167.4H1432.5V167.7H1433.5V165.5H1434.5V165.8H1435.5V162.7H1436.5V167.6H1437.5V171.9H1438.5V166.1H1439.5V169.8H1440.5V162.2H1441.5V166.9H1442.5V162.4H1443.5V168H1444.5V169.8H1445.5V164.7H1446.5V168.3H1447.5V161.5H1448.5V161.1H1449.5V167.1H1450.5V168.5H1451.5V169.6H1452.5V167H1453.5V162.3H1454.5V163.8H1455.5V164.8H1456.5V168.3H1457.5V164.3H1458.5V167.3H1459.5V170.5H1460.5V165.9H1461.5V168.4H1462.5V167.6H1463.5V168.1H1464.5V169.5H1465.5V163.4H1466.5V166.4H1467.5V164.3H1468.5V163.3H1469.5V168.7H1470.5V164.4H1471.5V169.1H1472.5V169.8H1473.5V163.1H1474.5V164.8H1475.5V165.4H1476.5V164.9H1477.5V164.8H1478.5V172.4H1479.5V162H1480.5V168.4H1481.5V167.8H1482.5V160.5H1483.5V160.5H1484.5V164.6H1485.5V167.5H1486.5V171.2H1487.5V170.7H1488.5V161.6H1489.5V164H1490.5V165.5H1491.5V167.1H1492.5V165.1H1493.5V168.3H1494.5V166H1495.5V163.4H1496.5V164.3H1497.5V161.2H1498.5V163.9H1499.5V168H1500.5V161.7H1501.5V167.5H1502.5V166.2H1503.5V168H1504.5V165.7H1505.5V167.2H1506.5V165H1507.5V165.9H1508.5V164.4H1509.5V164.1H1510.5V166.1H1511.5V163.7H1512.5V171.3H1513.5V173.6H1514.5V162.6H1515.5V168.7H1516.5V157.3H1517.5V172.3H1518.5V164H1519.5V164.7H1520.5V171.6H1521.5V163.3H1522.5V174.5H1523.5V162.6H1524.5V167.3H1525.5V166.9H1526.5V168.6H1527.5V163.1H1528.5V162.3H1529.5V170.4H1530.5V163.1H1531.5V168.2H1532.5V167.1H1533.5V168.2H1534.5V165.9H1535.5V164.7H1536.5V157.3H1537.5V167.2H1538.5V168.4H1539.5V167.7H1540.5V169.5H1541.5V165.8H1542.5V165.4H1543.5V169.5H1544.5V167.9H1545.5V173.1H1546.5V161.3H1547.5V165.1H1548.5V165.7H1549.5V170.2H1550.5V174.9H1551.5V164.9H1552.5V163.7H1553.5V169.1H1554.5V170.5H1555.5V165.4H1556.5V166.7H1557.5V165.2H1558.5V164.7H1559.5V167H1560.5V171.6H1561.5V165.1H1562.5V171.4H1563.5V167.2H1564.5V171.5H1565.5V175.2H1566.5V161.4H1567.5V169.6H1568.5V164.1H1569.5V162H1570.5V167.9H1571.5V164.7H1572.5V170.6H1573.5V163.7H1574.5V163.1H1575.5V168.8H1576.5V164.3H1577.5V167.1H1578.5V166.9H1579.5V165.5H1580.5V165.7H1581.5V167.9H1582.5V162.5H1583.5V171H1584.5V166.2H1585.5V163.2H1586.5V165.5H1587.5V167H1588.5V164.2H1589.5V167.4H1590.5V162.2H1591.5V162.4H1592.5V166.9H1593.5V165.9H1594.5V160.2H1595.5V165.1H1596.5V169.7H1597.5V167.1H1598.5V164.9H1599.5V169.4H1600.5V160.5H1601.5V161.2H1602.5V159.9H1603.5V165.4H1604.5V162.5H1605.5V167H1606.5V163.4H1607.5V161.8H1608.5V165.1H1609.5V162.1H1610.5V164.6H1611.5V171.2H1612.5V164H1613.5V171.4H1614.5V166.3H1615.5V164.2H1616.5V168.4H1617.5V169.1H1618.5V165.2H1619.5V164.7H1620.5V161H1621.5V170H1622.5V169.9H1623.5V169H1624.5V165.2H1625.5V164.8H1626.5V164H1627.5V164.5H1628.5V169H1629.5V172.5H1630.5V164.6H1631.5V163.3H1632.5V160.6H1633.5V166.1H1634.5V165.4H1635.5V161.3H1636.5V166.3H1637.5V160.8H1638.5V159.3H1639.5V164.2H1640.5V163.2H1641.5V165.9H1642.5V166.8H1643.5V171.9H1644.5V164.6H1645.5V164.7H1646.5V169.5H1647.5V164.1H1648.5V168.6H1649.5V163.8H1650.5V161.7H1651.5V162.7H1652.5V167.7H1653.5V160.2H1654.5V162.3H1655.5V164.7H1656.5V165.7H1657.5V164.3H1658.5V167.7H1659.5V170.3H1660.5V167.5H1661.5V168H1662.5V168H1663.5V168.7H1664.5V170.4H1665.5V170.9H1666.5V164.3H1667.5V164.6H1668.5V165.4H1669.5V166.2H1670.5V168H1671.5V168.4H1672.5V169.1H1673.5V164.1H1674.5V160H1675.5V163.9H1676.5V169.8H1677.5V169.5H1678.5V167.2H1679.5V166.5H1680.5V167.6H1681.5V163.8H1682.5V168.7H1683.5V161.6H1684.5V167.8H1685.5V159.7H1686.5V165.4H1687.5V171.5H1688.5V165.9H1689.5V164.1H1690.5V159H1691.5V166.5H1692.5V163H1693.5V161.4H1694.5V171.7H1695.5V166.1H1696.5V166.7H1697.5V166.8H1698.5V168.9H1699.5V167.4H1700.5V163.7H1701.5V165.6H1702.5V163.1H1703.5V165.5H1704.5V164.2H1705.5V164.9H1706.5V161.6H1707.5V167.8H1708.5V164.4H1709.5V163H1710.5V160.8H1711.5V167.1H1712.5V163H1713.5V170.7H1714.5V163.3H1715.5V164.2H1716.5V168H1717.5V171.2H1718.5V173.5H1719.5V165.9H1720.5V165.1H1721.5V167.2H1722.5V163.3H1723.5V168.7H1724.5V158.8H1725.5V167.6H1726.5V164.1H1727.5V163.3H1728.5V165.6H1729.5V166.8H1730.5V160.9H1731.5V164.7H1732.5V165.2H1733.5V165.5H1734.5V165.1H1735.5V165.5H1736.5V169H1737.5V167.2H1738.5V165H1739.5V163.8H1740.5V165.2H1741.5V166.2H1742.5V167H1743.5V166.3H1744.5V165.1H1745.5V169.4H1746.5V167.2H1747.5V169.6H1748.5V170.9H1749.5V167.2H1750.5V169.7H1751.5V168.7H1752.5V169.5H1753.5V166.5H1754.5V170.2H1755.5V172.4H1756.5V163.3H1757.5V163.2H1758.5V161.6H1759.5V160.4H1760.5V168H1761.5V161H1762.5V164.8H1763.5V172.6H1764.5V168.2H1765.5V161.6H1766.5V167.1H1767.5V165.9H1768.5V163.6H1769.5V165.1H1770.5V168.2H1771.5V162.5H1772.5V161.7H1773.5V163.2H1774.5V165.5H1775.5V166.1H1776.5V165.5H1777.5V166.9H1778.5V163.5H1779.5V166.9H1780.5V168.8H1781.5V164.9H1782.5V165.2H1783.5V160.6H1784.5V166.5H1785.5V163.6H1786.5V171.7H1787.5V164.6H1788.5V163.9H1789.5V169.7H1790.5V171.3H1791.5V167.2H1792.5V168.8H1793.5V163H1794.5V157.1H1795.5V163.6H1796.5V164.4H1797.5V166.2H1798.5V169.1H1799.5V167H1800.5V172.1H1801.5V166.5H1802.5V161.9H1803.5V168.5H1804.5V164.6H1805.5V171H1806.5V169.2H1807.5V167.2H1808.5V167H1809.5V168.7H1810.5V162.3H1811.5V170.2H1812.5V165.7H1813.5V165.4H1814.5V163.7H1815.5V165.5H1816.5V166.5H1817.5V162.3H1818.5V170.9H1819.5V168.9H1820.5V165.3H1821.5V167.1H1822.5V173.4H1823.5V170.6H1824.5V171.9H1825.5V172.9H1826.5V166.1H1827.5V170.4H1828.5V167.9H1829.5V165.8H1830.5V168.8H1831.5V164.4H1832.5V168.7H1833.5V164.6H1834.5V166.7H1835.5V164.5H1836.5V160.9H1837.5V165.4H1838.5V167.5H1839.5V163.6H1840.5V161.7H1841.5V165.7H1842.5V160.9H1843.5V161.8H1844.5V165.4H1845.5V160.7H1846.5V163H1847.5V167.4H1848.5V166.7H1849.5V164.6H1850.5V169.8H1851.5V170.5H1852.5V168.1H1853.5V164.7H1854.5V171.9H1855.5V163.8H1856.5V161.6H1857.5V170.3H1858.5V157.4H1859.5V167.3H1860.5V164.9H1861.5V162.1H1862.5V163.9H1863.5V162.6H1864.5V162.8H1865.5V167.6H1866.5V167.9H1867.5V160.3H1868.5V162.2H1869.5V164.7H1870.5V165.8H1871.5V170H1872.5V163.4H1873.5V160.8H1874.5V168.5H1875.5V166H1876.5V166.9H1877.5V170.3H1878.5V167.7H1879.5V171.1H1880.5V162.5H1881.5V168.8H1882.5V167.5H1883.5V160.4H1884.5V163.1H1885.5V165.1H1886.5V162.2H1887.5V174.6H1888.5V167H1889.5V164.9H1890.5V170.3H1891.5V165.5H1892.5V163.7H1893.5V165.2H1894.5V167.3H1895.5V162.8H1896.5V161.7H1897.5V166.9H1898.5V163.3H1899.5V166.3H1900.5V168.4H1901.5V172.4H1902.5V168.4H1903.5V157.2H1904.5V166.7H1905.5V166.7H1906.5V163.1H1907.5V163.8H1908.5V161.4H1909.5V165.3H1910.5V164.9H1911.5V166H1912.5V167.5H1913.5V166.7H1914.5V166.4H1915.5V160.5H1916.5V162.8H1917.5V166.2H1918.5V168.9H1919.5V174H1920.5V168.4H1921.5V162.1H1922.5V162.5H1923.5V161.6H1924.5V165.9H1925.5V158.6H1926.5V169.4H1927.5V163.5H1928.5V160.5H1929.5V165.8H1930.5V165.2H1931.5V160.9H1932.5V169.4H1933.5V161.5H1934.5V164.2H1935.5V170.1H1936.5V170.6H1937.5V163.2H1938.5V162.1H1939.5V162H1940.5V172.1H1941.5V168.6H1942.5V169.6H1943.5V167.6H1944.5V165.4H1945.5V169.3H1946.5V165H1947.5V166H1948.5V164.6H1949.5V168.3H1950.5V162H1951.5V162.2H1952.5V165.4H1953.5V161.7H1954.5V163.1H1955.5V163.1H1956.5V169.6H1957.5V167.7H1958.5V166H1959.5V169.4H1960.5V165.7H1961.5V166.2H1962.5V164.7H1963.5V165.9H1964.5V168.8H1965.5V167.6H1966.5V163.3H1967.5V168.4H1968.5V170.7H1969.5V164.4H1970.5V166H1971.5V192Z" fill="#8fcb85"/><path d="M47.5 165.8V163.8h1V165.8zM48.5 156.7V155.1h1V156.7zM49.5 166.2V164.4h1V166.2zM50.5 158.8V156.4h1V158.8zM51.5 165.7V164.5h1V165.7zM52.5 157.8V155.7h1V157.8zM53.5 154.4V152.1h1V154.4zM54.5 161.1V159.4h1V161.1zM55.5 150.1V148.4h1V150.1zM56.5 163.9V162.6h1V163.9zM57.5 160.2V158.3h1V160.2zM58.5 162V160.2h1V162zM59.5 159.5V157.3h1V159.5zM60.5 156.1V154.1h1V156.1zM61.5 167.9V165.7h1V167.9zM62.5 166.4V164.6h1V166.4zM63.5 166.6V164.7h1V166.6zM64.5 163.7V161.8h1V163.7zM65.5 147V145.2h1V147zM66.5 157.1V155.9h1V157.1zM67.5 161.7V159.5h1V161.7zM68.5 160.9V158.8h1V160.9zM69.5 160.1V158.7h1V160.1zM70.5 158.2V156.7h1V158.2zM71.5 152.8V151.2h1V152.8zM72.5 157.7V155.8h1V157.7zM73.5 156.6V155h1V156.6zM74.5 156.4V154.6h1V156.4zM75.5 155.3V153.1h1V155.3zM76.5 159.9V158.4h1V159.9zM77.5 157.3V155.2h1V157.3zM78.5 153.7V152h1V153.7zM79.5 158.2V156.1h1V158.2zM80.5 159.3V157.3h1V159.3zM81.5 159.7V158.1h1V159.7zM82.5 164.6V162.9h1V164.6zM83.5 158V155.4h1V158zM84.5 156.4V154.1h1V156.4zM85.5 157.2V155.1h1V157.2zM86.5 159.7V157.5h1V159.7zM87.5 153.2V151.5h1V153.2zM88.5 163.3V160.5h1V163.3zM89.5 159.4V157.1h1V159.4zM90.5 156.9V155.6h1V156.9zM91.5 150.5V147.8h1V150.5zM92.5 159.7V157.5h1V159.7zM93.5 159.9V158.5h1V159.9zM94.5 160.9V158.9h1V160.9zM95.5 155.9V153.7h1V155.9zM96.5 160.2V157.7h1V160.2zM97.5 163.6V161.4h1V163.6zM98.5 155.9V154.2h1V155.9zM99.5 167.8V166.4h1V167.8zM100.5 159.5V157.4h1V159.5zM101.5 154.2V152.8h1V154.2zM102.5 160.5V158.4h1V160.5zM103.5 161.2V160.5h1V161.2zM104.5 157.3V154.3h1V157.3zM105.5 156.5V155.1h1V156.5zM106.5 162.3V160.3h1V162.3zM107.5 150.4V148.2h1V150.4zM108.5 160.1V157.5h1V160.1zM109.5 161V158.2h1V161zM110.5 163.5V161.8h1V163.5zM111.5 157.7V155.2h1V157.7zM112.5 158V156h1V158zM113.5 168.2V166.7h1V168.2zM114.5 163.2V161.6h1V163.2zM115.5 158.3V156.6h1V158.3zM116.5 157.5V155.6h1V157.5zM117.5 162.1V160.2h1V162.1zM118.5 159V156.8h1V159zM119.5 162.8V161h1V162.8zM120.5 166.4V163.8h1V166.4zM121.5 154.9V153.1h1V154.9zM122.5 162.8V161.6h1V162.8zM123.5 160.2V158.2h1V160.2zM124.5 152V150h1V152zM125.5 164.1V163.5h1V164.1zM126.5 155.2V153.2h1V155.2zM127.5 167.6V165.6h1V167.6zM128.5 167.6V164h1V167.6zM129.5 156.4V154.3h1V156.4zM130.5 161.8V161h1V161.8zM131.5 161.6V160.5h1V161.6zM132.5 158.6V157.9h1V158.6zM133.5 164.8V162.4h1V164.8zM134.5 154.4V153.1h1V154.4zM135.5 167.5V165.2h1V167.5zM136.5 157.7V156.3h1V157.7zM137.5 164.1V162.6h1V164.1zM138.5 166.1V164.6h1V166.1zM139.5 156.1V154h1V156.1zM140.5 152.9V151.1h1V152.9zM141.5 161.9V160.5h1V161.9zM142.5 161.9V160.7h1V161.9zM143.5 168.7V166.5h1V168.7zM144.5 155.5V153.2h1V155.5zM145.5 156V154h1V156zM146.5 164.4V162.5h1V164.4zM147.5 163V161.7h1V163zM148.5 168.5V167.3h1V168.5zM149.5 161.6V159.7h1V161.6zM150.5 163.5V161h1V163.5zM151.5 160.9V158.7h1V160.9zM152.5 156.6V155.2h1V156.6zM153.5 169.7V167.5h1V169.7zM154.5 164.5V162h1V164.5zM155.5 160.3V158h1V160.3zM156.5 158.6V157.8h1V158.6zM157.5 158.8V157.3h1V158.8zM158.5 164.9V163.3h1V164.9zM159.5 158.7V156.4h1V158.7zM160.5 157.7V156.7h1V157.7zM161.5 164.3V163.7h1V164.3zM162.5 162.4V160.2h1V162.4zM163.5 165.1V163.1h1V165.1zM164.5 161.1V158.7h1V161.1zM165.5 165.4V164h1V165.4zM166.5 165.2V162.5h1V165.2zM167.5 157.6V155.8h1V157.6zM168.5 161.2V159.3h1V161.2zM169.5 161.3V159.6h1V161.3zM170.5 163.6V162.3h1V163.6zM171.5 164.9V162.2h1V164.9zM172.5 160.1V158.2h1V160.1zM173.5 163.2V161.3h1V163.2zM174.5 160.9V159.3h1V160.9zM175.5 161.5V159.6h1V161.5zM176.5 165.4V164h1V165.4zM177.5 166.5V165.2h1V166.5zM178.5 158.8V158.1h1V158.8zM179.5 163.6V162h1V163.6zM180.5 165V163.1h1V165zM181.5 157.9V156h1V157.9zM182.5 163.1V161.6h1V163.1zM183.5 163.1V160.8h1V163.1zM184.5 164.2V163h1V164.2zM185.5 167.8V166.5h1V167.8zM186.5 168.4V166h1V168.4zM187.5 161.2V159.5h1V161.2zM188.5 156.7V155.2h1V156.7zM189.5 159.7V157.4h1V159.7zM190.5 169.1V168h1V169.1zM191.5 166.6V164.3h1V166.6zM192.5 157.5V156.3h1V157.5zM193.5 158.6V156.9h1V158.6zM194.5 164.5V162.9h1V164.5zM195.5 164.3V163.3h1V164.3zM196.5 167.1V165.8h1V167.1zM197.5 161V158.1h1V161zM198.5 151.8V150.1h1V151.8zM199.5 170.1V168.4h1V170.1zM200.5 166.9V164.1h1V166.9zM201.5 160.7V159.2h1V160.7zM202.5 159.3V157.2h1V159.3zM203.5 169.8V168.2h1V169.8zM204.5 164.1V162.3h1V164.1zM205.5 162.6V161h1V162.6zM206.5 162.4V160.9h1V162.4zM207.5 166.9V164.3h1V166.9zM208.5 161.8V159.7h1V161.8zM209.5 169.8V168h1V169.8zM210.5 159.9V158.7h1V159.9zM211.5 158.8V157.1h1V158.8zM212.5 161.7V159.9h1V161.7zM213.5 162.4V160h1V162.4zM214.5 165V162.4h1V165zM215.5 166.6V165.2h1V166.6zM216.5 160.5V159.2h1V160.5zM217.5 164.9V162.6h1V164.9zM218.5 158.5V157.5h1V158.5zM219.5 161.4V158.6h1V161.4zM220.5 158.6V156.8h1V158.6zM221.5 165.9V164.2h1V165.9zM222.5 168.2V166.5h1V168.2zM223.5 164.3V162.5h1V164.3zM224.5 158.7V156.9h1V158.7zM225.5 169.5V167.2h1V169.5zM226.5 168V166.3h1V168zM227.5 164.1V162.4h1V164.1zM228.5 167.7V166h1V167.7zM229.5 154.6V153.1h1V154.6zM230.5 164.2V161.8h1V164.2zM231.5 160.6V158.3h1V160.6zM232.5 160.1V159.2h1V160.1zM233.5 167.2V165.3h1V167.2zM234.5 161.6V159.1h1V161.6zM235.5 161.7V160h1V161.7zM236.5 163.5V161.8h1V163.5zM237.5 162.7V160.5h1V162.7zM238.5 165.1V163.6h1V165.1zM239.5 167.2V164.8h1V167.2zM240.5 158.4V156.1h1V158.4zM241.5 160.2V157.9h1V160.2zM242.5 163.7V161.5h1V163.7zM243.5 168V166.3h1V168zM244.5 166.7V164.5h1V166.7zM245.5 166.1V164.3h1V166.1zM246.5 162.1V159.6h1V162.1zM247.5 167V165.6h1V167zM248.5 160.4V159.1h1V160.4zM249.5 161.9V160.3h1V161.9zM250.5 164.1V163.2h1V164.1zM251.5 160.8V159.2h1V160.8zM252.5 167.4V164.5h1V167.4zM253.5 160.8V157.2h1V160.8zM254.5 162V160.4h1V162zM255.5 163.3V160.6h1V163.3zM256.5 163.8V161.7h1V163.8zM257.5 161.6V160.2h1V161.6zM258.5 163.2V161.6h1V163.2zM259.5 168.8V166.5h1V168.8zM260.5 160.9V159.1h1V160.9zM261.5 167.4V166.5h1V167.4zM262.5 161.7V159.9h1V161.7zM263.5 170.6V168.7h1V170.6zM264.5 169.9V168.1h1V169.9zM265.5 163.1V161h1V163.1zM266.5 162.7V160.8h1V162.7zM267.5 168.3V166.6h1V168.3zM268.5 165.7V164h1V165.7zM269.5 162.5V160.3h1V162.5zM270.5 156.9V156.3h1V156.9zM271.5 161.9V160.2h1V161.9zM272.5 154.2V151.9h1V154.2zM273.5 170.3V168.3h1V170.3zM274.5 165.7V163.3h1V165.7zM275.5 167.8V166.1h1V167.8zM276.5 164V162.2h1V164zM277.5 165.9V164.9h1V165.9zM278.5 161.6V159.3h1V161.6zM279.5 163.7V162.4h1V163.7zM280.5 162.6V160.5h1V162.6zM281.5 164.1V162.3h1V164.1zM282.5 157.6V156.3h1V157.6zM283.5 165.7V164.8h1V165.7zM284.5 166.2V164.8h1V166.2zM285.5 167.3V165.8h1V167.3zM286.5 156V154.2h1V156zM287.5 163.8V160.9h1V163.8zM288.5 163.5V162.5h1V163.5zM289.5 161.6V160.2h1V161.6zM290.5 156.5V155.3h1V156.5zM291.5 165.6V164.6h1V165.6zM292.5 162.8V161.5h1V162.8zM293.5 163.5V161.8h1V163.5zM294.5 165.7V163.4h1V165.7zM295.5 159.3V157.4h1V159.3zM296.5 166.8V165.5h1V166.8zM297.5 162V159h1V162zM298.5 164.9V163.5h1V164.9zM299.5 165.9V164.6h1V165.9zM300.5 167V165.3h1V167zM301.5 157.1V155.3h1V157.1zM302.5 165.1V164h1V165.1zM303.5 162.1V160.2h1V162.1zM304.5 167.9V166.6h1V167.9zM305.5 163.1V160.7h1V163.1zM306.5 160.3V158.3h1V160.3zM307.5 164.2V162.2h1V164.2zM308.5 162.9V159.9h1V162.9zM309.5 167.4V165.8h1V167.4zM310.5 157.5V155.8h1V157.5zM311.5 156.9V155.1h1V156.9zM312.5 162.1V160.4h1V162.1zM313.5 168.3V167h1V168.3zM314.5 153.5V151.4h1V153.5zM315.5 160.1V157.8h1V160.1zM316.5 160.2V157.9h1V160.2zM317.5 163.6V161.9h1V163.6zM318.5 158.5V156.8h1V158.5zM319.5 167.9V166.2h1V167.9zM320.5 164.7V162.5h1V164.7zM321.5 165.4V164.1h1V165.4zM322.5 163.8V161.1h1V163.8zM323.5 162.6V160.6h1V162.6zM324.5 162.3V160.3h1V162.3zM325.5 158.5V156h1V158.5zM326.5 169V166.5h1V169zM327.5 162.3V160.6h1V162.3zM328.5 152.4V150.6h1V152.4zM329.5 154.2V151.9h1V154.2zM330.5 166.4V164.3h1V166.4zM331.5 159.1V157.3h1V159.1zM332.5 171.6V170h1V171.6zM333.5 162.8V161.5h1V162.8zM334.5 154.5V152.8h1V154.5zM335.5 163.6V161.9h1V163.6zM336.5 165.2V163.7h1V165.2zM337.5 161.5V159.5h1V161.5zM338.5 164V162.2h1V164zM339.5 167.6V165.5h1V167.6zM340.5 164.9V163h1V164.9zM341.5 165.5V163.9h1V165.5zM342.5 160.9V159.6h1V160.9zM343.5 151.6V149.8h1V151.6zM344.5 162V160.5h1V162zM345.5 155.1V152.6h1V155.1zM346.5 160.4V159.3h1V160.4zM347.5 163.7V161.5h1V163.7zM348.5 163.7V162.4h1V163.7zM349.5 166.4V165h1V166.4zM350.5 161.5V160h1V161.5zM351.5 161.4V158.2h1V161.4zM352.5 154.2V152.9h1V154.2zM353.5 160V158.2h1V160zM354.5 162V159.6h1V162zM355.5 162.8V161.1h1V162.8zM356.5 162.9V161.1h1V162.9zM357.5 156.1V153.8h1V156.1zM358.5 166.8V165.2h1V166.8zM359.5 164.6V162.3h1V164.6zM360.5 160.3V158.1h1V160.3zM361.5 161.5V160.6h1V161.5zM362.5 159.4V157.4h1V159.4zM363.5 159.1V157.9h1V159.1zM364.5 160.8V159.3h1V160.8zM365.5 163.9V161.9h1V163.9zM366.5 159.7V158.2h1V159.7zM367.5 168.1V167.5h1V168.1zM368.5 163.4V161h1V163.4zM369.5 161.3V160.5h1V161.3zM370.5 164.5V162.5h1V164.5zM371.5 154.1V151.7h1V154.1zM372.5 159.5V157.5h1V159.5zM373.5 165.3V163.7h1V165.3zM374.5 162.3V160.8h1V162.3zM375.5 160.6V159h1V160.6zM376.5 159.5V156.9h1V159.5zM377.5 157.8V155.8h1V157.8zM378.5 161.8V160.7h1V161.8zM379.5 161.3V159.2h1V161.3zM380.5 164.9V162.5h1V164.9zM381.5 162.1V160.1h1V162.1zM382.5 162.1V160.9h1V162.1zM383.5 152.3V151h1V152.3zM384.5 157V155.4h1V157zM385.5 159.6V158.1h1V159.6zM386.5 162.4V160.1h1V162.4zM387.5 152.7V151.3h1V152.7zM388.5 160.6V158.3h1V160.6zM389.5 163.2V161h1V163.2zM390.5 163.8V161.7h1V163.8zM391.5 158.8V156.4h1V158.8zM392.5 159.1V157.8h1V159.1zM393.5 157.9V156.6h1V157.9zM394.5 157.5V154.9h1V157.5zM395.5 158.1V156.5h1V158.1zM396.5 155.7V153.7h1V155.7zM397.5 165.6V164h1V165.6zM398.5 154.7V153h1V154.7zM399.5 160V158.3h1V160zM400.5 167.4V165.8h1V167.4zM401.5 159V157.1h1V159zM402.5 161.2V160.4h1V161.2zM403.5 155.5V153.3h1V155.5zM404.5 156.3V153.8h1V156.3zM405.5 162.3V160.7h1V162.3zM406.5 159.2V156.5h1V159.2zM407.5 167.4V165.6h1V167.4zM408.5 163.4V161.3h1V163.4zM409.5 154.4V152.7h1V154.4zM410.5 165.5V163.7h1V165.5zM411.5 161.6V160.5h1V161.6zM412.5 156.8V155.2h1V156.8zM413.5 157.6V156.4h1V157.6zM414.5 155.9V154.8h1V155.9zM415.5 156.1V155.2h1V156.1zM416.5 154.8V153.1h1V154.8zM417.5 166.8V165.1h1V166.8zM418.5 159V157.7h1V159zM419.5 162.5V160.5h1V162.5zM420.5 161.1V160.8h1V161.1zM421.5 162.2V160.1h1V162.2zM422.5 159.2V156.9h1V159.2zM423.5 163.3V160.2h1V163.3zM424.5 157.2V155.2h1V157.2zM425.5 156V153.7h1V156zM426.5 160V158.5h1V160zM427.5 156.3V154.2h1V156.3zM428.5 168.2V166.9h1V168.2zM429.5 158.6V156.7h1V158.6zM430.5 159.3V157.2h1V159.3zM431.5 159.9V157.3h1V159.9zM432.5 162.9V161.3h1V162.9zM433.5 159.2V157h1V159.2zM434.5 157.3V154.7h1V157.3zM435.5 162.5V160.1h1V162.5zM436.5 158.6V157.3h1V158.6zM437.5 161.1V158.3h1V161.1zM438.5 157.4V155.7h1V157.4zM439.5 170.4V168.9h1V170.4zM440.5 163.5V161.6h1V163.5zM441.5 151.1V148.9h1V151.1zM442.5 159.3V158h1V159.3zM443.5 165.5V163.8h1V165.5zM444.5 162.6V159.2h1V162.6zM445.5 162.3V160.8h1V162.3zM446.5 156.1V154.2h1V156.1zM447.5 165.8V163.3h1V165.8zM448.5 162V160.8h1V162zM449.5 159.4V157.3h1V159.4zM450.5 162.1V160h1V162.1zM451.5 157.4V156h1V157.4zM452.5 169.2V168.6h1V169.2zM453.5 161.3V158.9h1V161.3zM454.5 156.7V154.2h1V156.7zM455.5 153.2V151.4h1V153.2zM456.5 156.6V155.5h1V156.6zM457.5 158.1V156h1V158.1zM458.5 161.3V159.7h1V161.3zM459.5 165.5V163.6h1V165.5zM460.5 155.7V154.1h1V155.7zM461.5 158.8V157.3h1V158.8zM462.5 160V158.6h1V160zM463.5 159.5V157.8h1V159.5zM464.5 159.8V158.2h1V159.8zM465.5 165.9V164.2h1V165.9zM466.5 156.9V154.2h1V156.9zM467.5 162.5V160.2h1V162.5zM468.5 158.1V156h1V158.1zM469.5 167.6V165.5h1V167.6zM470.5 165.2V162.8h1V165.2zM471.5 158V155.9h1V158zM472.5 171.7V169.5h1V171.7zM473.5 158.4V157.2h1V158.4zM474.5 157.3V155.5h1V157.3zM475.5 162.1V160.6h1V162.1zM476.5 165.6V163.9h1V165.6zM477.5 148.8V146.8h1V148.8zM478.5 160.6V159.1h1V160.6zM479.5 164V162.4h1V164zM480.5 165.1V162.9h1V165.1zM481.5 162.6V160.4h1V162.6zM482.5 166.3V164h1V166.3zM483.5 161.7V159.5h1V161.7zM484.5 162V160.6h1V162zM485.5 156.7V155h1V156.7zM486.5 162.3V160.9h1V162.3zM487.5 160.9V159.2h1V160.9zM488.5 160.6V158.6h1V160.6zM489.5 164.6V163.4h1V164.6zM490.5 160V157.7h1V160zM491.5 159V157.7h1V159zM492.5 159.4V157.3h1V159.4zM493.5 160.7V158.7h1V160.7zM494.5 163.2V161.3h1V163.2zM495.5 158.1V156.5h1V158.1zM496.5 167.9V166.1h1V167.9zM497.5 161.2V160.3h1V161.2zM498.5 164.8V162.7h1V164.8zM499.5 162.7V160.8h1V162.7zM500.5 167.3V165h1V167.3zM501.5 154.9V153.2h1V154.9zM502.5 165.2V163.9h1V165.2zM503.5 158.5V156.6h1V158.5zM504.5 165.5V163h1V165.5zM505.5 159.1V157h1V159.1zM506.5 169.5V167.7h1V169.5zM507.5 159.8V158.5h1V159.8zM508.5 158.5V156h1V158.5zM509.5 158.1V156.6h1V158.1zM510.5 165.3V163h1V165.3zM511.5 158.4V155.9h1V158.4zM512.5 157.5V155.7h1V157.5zM513.5 164.2V163.2h1V164.2zM514.5 159.3V156.3h1V159.3zM515.5 164.5V162.8h1V164.5zM516.5 159.9V157.9h1V159.9zM517.5 168.2V166.7h1V168.2zM518.5 167.1V164.3h1V167.1zM519.5 165.6V163.3h1V165.6zM520.5 154.8V152.1h1V154.8zM521.5 156.9V154.2h1V156.9zM522.5 167.8V166.1h1V167.8zM523.5 165.8V164.1h1V165.8zM524.5 152.1V151h1V152.1zM525.5 160.6V159.3h1V160.6zM526.5 157.4V154.9h1V157.4zM527.5 165V162.1h1V165zM528.5 162.6V160.1h1V162.6zM529.5 161.7V160.1h1V161.7zM530.5 164.5V162.7h1V164.5zM531.5 160.5V158.6h1V160.5zM532.5 153.3V151.6h1V153.3zM533.5 165V163.5h1V165zM534.5 166.3V165.1h1V166.3zM535.5 167.1V164.8h1V167.1zM536.5 162.9V161.1h1V162.9zM537.5 161.7V159.3h1V161.7zM538.5 160.6V158.4h1V160.6zM539.5 165.5V163.8h1V165.5zM540.5 166.4V164.6h1V166.4zM541.5 166.6V164.9h1V166.6zM542.5 164V162.2h1V164zM543.5 164.4V162.8h1V164.4zM544.5 157.9V156.3h1V157.9zM545.5 167.5V165.5h1V167.5zM546.5 167.8V166.5h1V167.8zM547.5 163V162h1V163zM548.5 176.6V174.6h1V176.6zM549.5 159.2V158.1h1V159.2zM550.5 167.1V165h1V167.1zM551.5 171.6V170.2h1V171.6zM552.5 168.4V166.6h1V168.4zM553.5 171.6V169.3h1V171.6zM554.5 164.1V162.1h1V164.1zM555.5 164.8V164h1V164.8zM556.5 164.1V163h1V164.1zM557.5 163.5V162.1h1V163.5zM558.5 164.8V163.1h1V164.8zM559.5 160.4V158.2h1V160.4zM560.5 167.7V165.9h1V167.7zM561.5 157.6V155.5h1V157.6zM562.5 166.6V164.8h1V166.6zM563.5 165V162.7h1V165zM564.5 163.5V161.4h1V163.5zM565.5 154.6V153.4h1V154.6zM566.5 167.8V166.8h1V167.8zM567.5 170.2V167.9h1V170.2zM568.5 162.5V159.8h1V162.5zM569.5 171.8V170.3h1V171.8zM570.5 157.7V155.4h1V157.7zM571.5 160V157.8h1V160zM572.5 163.5V161.7h1V163.5zM573.5 163.6V161.3h1V163.6zM574.5 164.4V162.4h1V164.4zM575.5 157.7V156.4h1V157.7zM576.5 166.8V164.7h1V166.8zM577.5 164.8V163h1V164.8zM578.5 155.1V153.1h1V155.1zM579.5 165.4V163h1V165.4zM580.5 153.4V152.1h1V153.4zM581.5 166.5V164.6h1V166.5zM582.5 166.3V163.4h1V166.3zM583.5 161.6V159.9h1V161.6zM584.5 161.7V160.2h1V161.7zM585.5 166.2V164.3h1V166.2zM586.5 153.9V153.2h1V153.9zM587.5 162V159.5h1V162zM588.5 160.7V157.9h1V160.7zM589.5 161.8V159.9h1V161.8zM590.5 164.2V162.8h1V164.2zM591.5 157V155.7h1V157zM592.5 164.2V162.6h1V164.2zM593.5 166.9V166.1h1V166.9zM594.5 165.2V163.3h1V165.2zM595.5 163.1V160.8h1V163.1zM596.5 164.3V162.8h1V164.3zM597.5 162.4V160.2h1V162.4zM598.5 167.3V166.2h1V167.3zM599.5 167.8V165.5h1V167.8zM600.5 159.5V158.1h1V159.5zM601.5 163.2V160.9h1V163.2zM602.5 158.1V156.6h1V158.1zM603.5 164.6V162h1V164.6zM604.5 153.7V151.1h1V153.7zM605.5 168.2V166.2h1V168.2zM606.5 164.8V163h1V164.8zM607.5 166.3V164.6h1V166.3zM608.5 163.6V160.8h1V163.6zM609.5 160.6V158.6h1V160.6zM610.5 163.4V161.9h1V163.4zM611.5 164.4V162h1V164.4zM612.5 160.1V157.2h1V160.1zM613.5 162.4V160.5h1V162.4zM614.5 170.1V168h1V170.1zM615.5 170.5V167.9h1V170.5zM616.5 166V164.1h1V166zM617.5 168.9V167.3h1V168.9zM618.5 167.2V164.8h1V167.2zM619.5 162.3V161h1V162.3zM620.5 171.2V169.4h1V171.2zM621.5 165.3V164h1V165.3zM622.5 160.9V159.1h1V160.9zM623.5 162.8V161.2h1V162.8zM624.5 165.6V163.9h1V165.6zM625.5 169.8V167.6h1V169.8zM626.5 161.5V160.5h1V161.5zM627.5 162.7V160.3h1V162.7zM628.5 162.2V159.7h1V162.2zM629.5 164.2V162.4h1V164.2zM630.5 168.4V167h1V168.4zM631.5 170.5V169.1h1V170.5zM632.5 162V159.9h1V162zM633.5 158.2V156.3h1V158.2zM634.5 167V165h1V167zM635.5 163.6V160.8h1V163.6zM636.5 154.9V152.6h1V154.9zM637.5 167.6V166h1V167.6zM638.5 162.1V160.6h1V162.1zM639.5 160.7V158.5h1V160.7zM640.5 159.4V157.4h1V159.4zM641.5 166.4V165h1V166.4zM642.5 163.3V160.8h1V163.3zM643.5 156.3V154h1V156.3zM644.5 161.2V159.1h1V161.2zM645.5 159.3V156.8h1V159.3zM646.5 159.2V158.1h1V159.2zM647.5 158.7V156.7h1V158.7zM648.5 164.5V162.4h1V164.5zM649.5 161.4V159.6h1V161.4zM650.5 169.5V167.6h1V169.5zM651.5 160.2V158.4h1V160.2zM652.5 169V166.9h1V169zM653.5 159.5V157.6h1V159.5zM654.5 160.7V159h1V160.7zM655.5 165.1V163h1V165.1zM656.5 163.8V161.9h1V163.8zM657.5 149V146.8h1V149zM658.5 161.7V160.7h1V161.7zM659.5 161.9V159.7h1V161.9zM660.5 165.1V163.4h1V165.1zM661.5 171.5V169.3h1V171.5zM662.5 164.6V162.4h1V164.6zM663.5 156.6V154.8h1V156.6zM664.5 158.1V156.1h1V158.1zM665.5 162.9V161.2h1V162.9zM666.5 165.5V163.1h1V165.5zM667.5 158.4V157.1h1V158.4zM668.5 158.5V157.1h1V158.5zM669.5 168.1V165.7h1V168.1zM670.5 167.2V164.7h1V167.2zM671.5 161.1V158.8h1V161.1zM672.5 159.8V157.4h1V159.8zM673.5 160.4V158.3h1V160.4zM674.5 160.8V158.4h1V160.8zM675.5 163.4V161h1V163.4zM676.5 155.6V153.8h1V155.6zM677.5 159.9V158.3h1V159.9zM678.5 162.9V160.9h1V162.9zM679.5 163.1V161.7h1V163.1zM680.5 161.7V159.8h1V161.7zM681.5 160.3V158.1h1V160.3zM682.5 168.8V166.3h1V168.8zM683.5 162.2V160.8h1V162.2zM684.5 163V161h1V163zM685.5 157.9V156.2h1V157.9zM686.5 160.8V159.7h1V160.8zM687.5 160.7V158.9h1V160.7zM688.5 163.2V160.9h1V163.2zM689.5 154V151.7h1V154zM690.5 164.5V161.9h1V164.5zM691.5 162.7V160.9h1V162.7zM692.5 163.7V161.6h1V163.7zM693.5 159V157.1h1V159zM694.5 162.1V160.3h1V162.1zM695.5 162.8V160.5h1V162.8zM696.5 163.3V161.5h1V163.3zM697.5 162V160.5h1V162zM698.5 162.1V160.9h1V162.1zM699.5 159.4V157.3h1V159.4zM700.5 162.3V159.7h1V162.3zM701.5 164.4V162.3h1V164.4zM702.5 159.1V157.5h1V159.1zM703.5 162V159.7h1V162zM704.5 160.7V158.7h1V160.7zM705.5 155.2V153.3h1V155.2zM706.5 167.8V166.3h1V167.8zM707.5 157.5V155.7h1V157.5zM708.5 165.3V164.4h1V165.3zM709.5 159.5V157h1V159.5zM710.5 166V165.2h1V166zM711.5 158.8V157.2h1V158.8zM712.5 162V160.3h1V162zM713.5 164.5V162.4h1V164.5zM714.5 157V155h1V157zM715.5 163V160.7h1V163zM716.5 161.2V159.1h1V161.2zM717.5 164.5V162.4h1V164.5zM718.5 157.7V155.2h1V157.7zM719.5 160.6V158.5h1V160.6zM720.5 163V160.7h1V163zM721.5 157.5V155.1h1V157.5zM722.5 162.2V161h1V162.2zM723.5 160.9V159.1h1V160.9zM724.5 163.6V161.5h1V163.6zM725.5 156.7V154.7h1V156.7zM726.5 156.1V154h1V156.1zM727.5 164.5V163h1V164.5zM728.5 162V159.8h1V162zM729.5 156.8V154.9h1V156.8zM730.5 156.4V155h1V156.4zM731.5 161V158.4h1V161zM732.5 158.7V156.4h1V158.7zM733.5 168.1V167.1h1V168.1zM734.5 164V161.7h1V164zM735.5 153.9V152.4h1V153.9zM736.5 164.5V163.1h1V164.5zM737.5 164.1V162h1V164.1zM738.5 161.7V159h1V161.7zM739.5 157.5V156h1V157.5zM740.5 159.5V157.7h1V159.5zM741.5 157.2V155h1V157.2zM742.5 161.8V159.6h1V161.8zM743.5 158.1V156.3h1V158.1zM744.5 159.4V157.2h1V159.4zM745.5 161.7V160.2h1V161.7zM746.5 155.3V153.4h1V155.3zM747.5 162.8V160.7h1V162.8zM748.5 166.4V164.5h1V166.4zM749.5 165.9V164.3h1V165.9zM750.5 167.6V166.1h1V167.6zM751.5 156.8V155h1V156.8zM752.5 165.3V162.6h1V165.3zM753.5 163V160.4h1V163zM754.5 162.5V161.4h1V162.5zM755.5 153V151.4h1V153zM756.5 157.4V154.9h1V157.4zM757.5 165.7V163.8h1V165.7zM758.5 162.7V160.6h1V162.7zM759.5 160.5V159.3h1V160.5zM760.5 160.2V158h1V160.2zM761.5 161.6V159.5h1V161.6zM762.5 162.6V160.8h1V162.6zM763.5 159.1V157.1h1V159.1zM764.5 155.4V153.1h1V155.4zM765.5 157.1V154.9h1V157.1zM766.5 159.9V158.6h1V159.9zM767.5 156.2V153.5h1V156.2zM768.5 159.6V157.9h1V159.6zM769.5 160.7V158.2h1V160.7zM770.5 159.4V158h1V159.4zM771.5 161.2V159.8h1V161.2zM772.5 161.4V159.9h1V161.4zM773.5 164.1V161.5h1V164.1zM774.5 156.4V155.3h1V156.4zM775.5 164.5V162.9h1V164.5zM776.5 162.2V161h1V162.2zM777.5 157.1V156h1V157.1zM778.5 157.9V155.7h1V157.9zM779.5 162.1V160.6h1V162.1zM780.5 160.4V158.5h1V160.4zM781.5 169.1V167.9h1V169.1zM782.5 158.6V156.8h1V158.6zM783.5 162.4V161h1V162.4zM784.5 163.6V162.1h1V163.6zM785.5 149.6V148.3h1V149.6zM786.5 154.6V152.6h1V154.6zM787.5 160V158h1V160zM788.5 162.4V159.7h1V162.4zM789.5 158.8V157h1V158.8zM790.5 161.4V159.4h1V161.4zM791.5 165.5V163.8h1V165.5zM792.5 163.4V161.3h1V163.4zM793.5 158.5V157.6h1V158.5zM794.5 161.9V159.5h1V161.9zM795.5 166.2V164.9h1V166.2zM796.5 157V155.2h1V157zM797.5 162.8V161.6h1V162.8zM798.5 160.4V158.8h1V160.4zM799.5 160.2V158.2h1V160.2zM800.5 158.3V156.6h1V158.3zM801.5 163.2V161.4h1V163.2zM802.5 161.6V159.6h1V161.6zM803.5 163.3V161.6h1V163.3zM804.5 163.6V162h1V163.6zM805.5 160.6V158.2h1V160.6zM806.5 163.4V161.3h1V163.4zM807.5 159.9V158h1V159.9zM808.5 158.6V157h1V158.6z" fill="#c48fe0"/><path d="M809.5 192V178.9H810.5V184.6H811.5V178.8H812.5V181.2H813.5V179.2H814.5V178H815.5V180.8H816.5V180.3H817.5V176.7H818.5V182.2H819.5V179.8H820.5V178.8H821.5V179.3H822.5V181.2H823.5V180.3H824.5V178.7H825.5V179.5H826.5V182.3H827.5V179.1H828.5V181.8H829.5V178.6H830.5V179H831.5V178.3H832.5V180H833.5V179.4H834.5V180.6H835.5V180.8H836.5V181.1H837.5V181H838.5V180.4H839.5V178.7H840.5V178.6H841.5V179.8H842.5V179.8H843.5V180.1H844.5V179.1H845.5V180.6H846.5V178H847.5V180.7H848.5V183.1H849.5V178.9H850.5V180.7H851.5V176.4H852.5V183H853.5V179.4H854.5V179.9H855.5V180H856.5V178.5H857.5V179.2H858.5V178.9H859.5V180.6H860.5V180.3H861.5V181.9H862.5V178.4H863.5V181.6H864.5V177.6H865.5V180.3H866.5V180.5H867.5V180.5H868.5V181.2H869.5V180.1H870.5V180.8H871.5V181.3H872.5V179H873.5V184.1H874.5V179.8H875.5V180.1H876.5V182.1H877.5V176.7H878.5V180.7H879.5V178.6H880.5V177.2H881.5V179.2H882.5V179.2H883.5V178.1H884.5V179.7H885.5V181.4H886.5V179.1H887.5V180.1H888.5V178.1H889.5V179.3H890.5V179.6H891.5V178.2H892.5V182.7H893.5V179.5H894.5V180.1H895.5V178.4H896.5V177.9H897.5V179H898.5V181.8H899.5V182H900.5V175.9H901.5V179.2H902.5V178H903.5V179H904.5V179.9H905.5V180.4H906.5V180.5H907.5V181.5H908.5V179.4H909.5V180.3H910.5V179.2H911.5V177.9H912.5V180.3H913.5V177.5H914.5V179.8H915.5V180.2H916.5V178.5H917.5V182.1H918.5V181H919.5V183.1H920.5V181H921.5V179.5H922.5V180.3H923.5V180.3H924.5V180.4H925.5V178.4H926.5V179.8H927.5V180.2H928.5V180.7H929.5V183H930.5V180.3H931.5V180.2H932.5V180.3H933.5V178.8H934.5V180.9H935.5V178.5H936.5V181.2H937.5V177.2H938.5V178.5H939.5V181.3H940.5V180.3H941.5V176.9H942.5V177.7H943.5V181H944.5V180.9H945.5V180.6H946.5V175.8H947.5V178.3H948.5V178.7H949.5V181.2H950.5V178.2H951.5V181.4H952.5V178.8H953.5V179.4H954.5V178.8H955.5V179.7H956.5V178.7H957.5V181.4H958.5V179.8H959.5V180H960.5V178.5H961.5V176.9H962.5V176.8H963.5V178.4H964.5V181.4H965.5V177.8H966.5V180.2H967.5V178.4H968.5V179.3H969.5V180.9H970.5V179.5H971.5V180.1H972.5V179.4H973.5V181.2H974.5V179.3H975.5V179.2H976.5V178H977.5V181.3H978.5V177.3H979.5V179.9H980.5V178.2H981.5V179.9H982.5V178.7H983.5V179H984.5V180.9H985.5V181.4H986.5V178.3H987.5V178.7H988.5V177.2H989.5V180.5H990.5V181.4H991.5V177.9H992.5V182.8H993.5V180.7H994.5V179.8H995.5V180.7H996.5V181H997.5V181.1H998.5V177.1H999.5V178.1H1000.5V181.1H1001.5V179.6H1002.5V180.6H1003.5V180.7H1004.5V179.7H1005.5V178.2H1006.5V179.5H1007.5V182.7H1008.5V181H1009.5V180.5H1010.5V181.2H1011.5V180.4H1012.5V182.1H1013.5V179.1H1014.5V179.7H1015.5V179.3H1016.5V178.8H1017.5V180.2H1018.5V176.2H1019.5V179.1H1020.5V180.8H1021.5V179.2H1022.5V177.4H1023.5V177.8H1024.5V182.8H1025.5V179.9H1026.5V177.5H1027.5V179.8H1028.5V179.8H1029.5V181.5H1030.5V179.2H1031.5V179.4H1032.5V179.7H1033.5V181.2H1034.5V178.8H1035.5V179.8H1036.5V177.7H1037.5V180.6H1038.5V179.2H1039.5V181H1040.5V182.7H1041.5V179.3H1042.5V182.4H1043.5V177.6H1044.5V180.1H1045.5V181H1046.5V181.2H1047.5V181.9H1048.5V181.6H1049.5V177.8H1050.5V178.7H1051.5V179.3H1052.5V179H1053.5V181.2H1054.5V181.1H1055.5V179H1056.5V181.1H1057.5V178.4H1058.5V180H1059.5V179.9H1060.5V180.7H1061.5V177.2H1062.5V181.3H1063.5V181.5H1064.5V183.3H1065.5V178.4H1066.5V180.7H1067.5V179.7H1068.5V180.7H1069.5V177.5H1070.5V181.4H1071.5V180.1H1072.5V177.4H1073.5V179.5H1074.5V179.5H1075.5V179.1H1076.5V180.3H1077.5V179.5H1078.5V177.1H1079.5V180.2H1080.5V177.5H1081.5V180.4H1082.5V179.9H1083.5V179.7H1084.5V180.8H1085.5V180H1086.5V178.6H1087.5V179.9H1088.5V180H1089.5V179.1H1090.5V177.9H1091.5V181.1H1092.5V179.9H1093.5V181.4H1094.5V179.5H1095.5V176.5H1096.5V181.3H1097.5V179.5H1098.5V181.3H1099.5V178.1H1100.5V180.9H1101.5V179.3H1102.5V177.1H1103.5V180H1104.5V179.2H1105.5V180.4H1106.5V178.5H1107.5V179.3H1108.5V180H1109.5V177.9H1110.5V177.5H1111.5V178.2H1112.5V180.3H1113.5V180.6H1114.5V181H1115.5V180.7H1116.5V180.1H1117.5V180.3H1118.5V181.5H1119.5V177.9H1120.5V178.9H1121.5V180.8H1122.5V176.1H1123.5V176.6H1124.5V177.6H1125.5V178H1126.5V181.5H1127.5V181.2H1128.5V179.1H1129.5V183.3H1130.5V179H1131.5V177.2H1132.5V179.3H1133.5V178.6H1134.5V181.6H1135.5V179.6H1136.5V179.2H1137.5V178.6H1138.5V179H1139.5V180.4H1140.5V177.2H1141.5V179.8H1142.5V181H1143.5V180.4H1144.5V179.4H1145.5V179.3H1146.5V179.7H1147.5V179.4H1148.5V179.5H1149.5V179.8H1150.5V179.8H1151.5V179.3H1152.5V180.1H1153.5V180H1154.5V179.3H1155.5V177.6H1156.5V179.7H1157.5V183.4H1158.5V180.6H1159.5V176H1160.5V180.3H1161.5V179.1H1162.5V181H1163.5V180.6H1164.5V181.7H1165.5V182.3H1166.5V178H1167.5V180.1H1168.5V179H1169.5V178.9H1170.5V176.5H1171.5V181.5H1172.5V178.3H1173.5V178.8H1174.5V178.3H1175.5V178H1176.5V178.2H1177.5V180.2H1178.5V180.2H1179.5V178.9H1180.5V180H1181.5V180H1182.5V178.4H1183.5V181.5H1184.5V179.6H1185.5V179.1H1186.5V179.6H1187.5V180.6H1188.5V178.2H1189.5V179H1190.5V180.8H1191.5V178.7H1192.5V181.6H1193.5V178.8H1194.5V178.4H1195.5V179.4H1196.5V179.6H1197.5V178.9H1198.5V178.6H1199.5V179.6H1200.5V179.2H1201.5V181.8H1202.5V180.6H1203.5V178.5H1204.5V178.6H1205.5V180.7H1206.5V181.7H1207.5V180.3H1208.5V178.3H1209.5V181.3H1210.5V181H1211.5V178.8H1212.5V177.1H1213.5V179.1H1214.5V183.8H1215.5V179.9H1216.5V179.9H1217.5V180.4H1218.5V178.6H1219.5V177.9H1220.5V180.8H1221.5V182.9H1222.5V181.1H1223.5V178H1224.5V179.9H1225.5V180.8H1226.5V178.3H1227.5V181.7H1228.5V178.6H1229.5V180.3H1230.5V179.4H1231.5V178.5H1232.5V179.8H1233.5V181.2H1234.5V183H1235.5V181.3H1236.5V180.4H1237.5V181H1238.5V179.4H1239.5V178.4H1240.5V176.5H1241.5V180.7H1242.5V180.3H1243.5V179.4H1244.5V179.2H1245.5V179.6H1246.5V178H1247.5V181.1H1248.5V182.1H1249.5V177.8H1250.5V177.7H1251.5V176.6H1252.5V178.8H1253.5V178.8H1254.5V179.5H1255.5V180.2H1256.5V179.8H1257.5V178H1258.5V179.1H1259.5V182.8H1260.5V180.8H1261.5V180.7H1262.5V178.9H1263.5V179.4H1264.5V181.1H1265.5V180.3H1266.5V180.2H1267.5V178.9H1268.5V181H1269.5V181.3H1270.5V178.7H1271.5V177.8H1272.5V177.3H1273.5V180.3H1274.5V181.3H1275.5V176.9H1276.5V181.3H1277.5V179.7H1278.5V179.1H1279.5V179.6H1280.5V179.3H1281.5V180.8H1282.5V177.8H1283.5V181H1284.5V179.6H1285.5V179H1286.5V181.7H1287.5V179.6H1288.5V181.8H1289.5V178.8H1290.5V184.5H1291.5V180.6H1292.5V179.7H1293.5V178.6H1294.5V180H1295.5V179.9H1296.5V179.5H1297.5V180.1H1298.5V180.3H1299.5V183.2H1300.5V179.3H1301.5V178.7H1302.5V180.2H1303.5V178.7H1304.5V181.8H1305.5V181.4H1306.5V180.5H1307.5V177.5H1308.5V179.4H1309.5V180H1310.5V178.4H1311.5V180.4H1312.5V177H1313.5V181.6H1314.5V181.3H1315.5V178.8H1316.5V179.2H1317.5V181.2H1318.5V182.1H1319.5V179.8H1320.5V180.1H1321.5V180.7H1322.5V180.9H1323.5V180.8H1324.5V180.5H1325.5V181.3H1326.5V178.6H1327.5V181.9H1328.5V177.2H1329.5V181.4H1330.5V179.8H1331.5V180.3H1332.5V180.9H1333.5V181.6H1334.5V179.3H1335.5V183.6H1336.5V180.9H1337.5V178.2H1338.5V179.6H1339.5V180.5H1340.5V183.4H1341.5V178.7H1342.5V177.9H1343.5V178.5H1344.5V181.2H1345.5V180.3H1346.5V179.7H1347.5V179.7H1348.5V181.4H1349.5V178.9H1350.5V179.5H1351.5V180.2H1352.5V180H1353.5V181.4H1354.5V178.7H1355.5V178H1356.5V180.3H1357.5V180.4H1358.5V181H1359.5V184H1360.5V182.9H1361.5V181.2H1362.5V178.6H1363.5V180.5H1364.5V179H1365.5V179.9H1366.5V180H1367.5V181.2H1368.5V179H1369.5V177.4H1370.5V179.7H1371.5V179.3H1372.5V179.1H1373.5V179.9H1374.5V179.8H1375.5V178.5H1376.5V179.2H1377.5V180.1H1378.5V179H1379.5V180.9H1380.5V182.2H1381.5V181.5H1382.5V178.7H1383.5V179.4H1384.5V177.5H1385.5V180.5H1386.5V182.1H1387.5V177.8H1388.5V179.1H1389.5V180H1390.5V177.5H1391.5V179.5H1392.5V179.4H1393.5V177.6H1394.5V177.2H1395.5V181.5H1396.5V179.3H1397.5V182.2H1398.5V182H1399.5V179.1H1400.5V177.5H1401.5V179.2H1402.5V180.8H1403.5V180.4H1404.5V180.1H1405.5V180.5H1406.5V179.7H1407.5V179.7H1408.5V180.4H1409.5V179.8H1410.5V178.8H1411.5V180.9H1412.5V177.9H1413.5V181.2H1414.5V180.3H1415.5V180.9H1416.5V181.3H1417.5V181.4H1418.5V179H1419.5V179.7H1420.5V179.8H1421.5V179.1H1422.5V179.9H1423.5V177.8H1424.5V180.6H1425.5V179.8H1426.5V181.2H1427.5V176.5H1428.5V177.3H1429.5V178.7H1430.5V177.9H1431.5V180.9H1432.5V178.6H1433.5V179.1H1434.5V179.5H1435.5V178.8H1436.5V180.1H1437.5V182.8H1438.5V181.9H1439.5V181.3H1440.5V179H1441.5V178H1442.5V179.4H1443.5V181H1444.5V181.5H1445.5V178.7H1446.5V180.3H1447.5V177.5H1448.5V181.5H1449.5V180.3H1450.5V180.4H1451.5V178.8H1452.5V179.7H1453.5V177.2H1454.5V179.1H1455.5V178.9H1456.5V183.3H1457.5V180.2H1458.5V179.3H1459.5V181H1460.5V179.3H1461.5V181H1462.5V179.2H1463.5V179.9H1464.5V183.5H1465.5V179.6H1466.5V177.8H1467.5V178.9H1468.5V179.6H1469.5V178.5H1470.5V177.6H1471.5V180.7H1472.5V180H1473.5V178.1H1474.5V181H1475.5V179.4H1476.5V178.3H1477.5V180.1H1478.5V182.4H1479.5V179H1480.5V182.1H1481.5V180.7H1482.5V178.8H1483.5V177.2H1484.5V178.8H1485.5V182.4H1486.5V181.4H1487.5V179.5H1488.5V177.2H1489.5V179.2H1490.5V179.4H1491.5V178.7H1492.5V179.3H1493.5V178.6H1494.5V179.4H1495.5V178.8H1496.5V179.4H1497.5V179.1H1498.5V179.3H1499.5V181.1H1500.5V178.6H1501.5V181.1H1502.5V180.1H1503.5V180.4H1504.5V179.8H1505.5V178.2H1506.5V181.1H1507.5V179H1508.5V181.4H1509.5V181.3H1510.5V179.4H1511.5V180H1512.5V179.7H1513.5V180.7H1514.5V179.1H1515.5V178.2H1516.5V176.7H1517.5V179.9H1518.5V181H1519.5V176.7H1520.5V182.4H1521.5V177H1522.5V181.7H1523.5V178.8H1524.5V180.4H1525.5V179.6H1526.5V180.5H1527.5V180.6H1528.5V179.1H1529.5V177.1H1530.5V179.8H1531.5V180H1532.5V179.1H1533.5V180.9H1534.5V179.6H1535.5V178.4H1536.5V180.4H1537.5V180H1538.5V179.9H1539.5V182H1540.5V177.6H1541.5V180.8H1542.5V180.7H1543.5V179.8H1544.5V180H1545.5V178.9H1546.5V179.1H1547.5V179.5H1548.5V180.5H1549.5V179.9H1550.5V181.4H1551.5V179.1H1552.5V178.1H1553.5V178.7H1554.5V182.4H1555.5V180.2H1556.5V179.9H1557.5V179.7H1558.5V179.4H1559.5V180.4H1560.5V181.8H1561.5V180.1H1562.5V180.8H1563.5V178.3H1564.5V182.2H1565.5V181.4H1566.5V180.3H1567.5V180.8H1568.5V178.1H1569.5V179.9H1570.5V181.4H1571.5V179H1572.5V181.4H1573.5V177.2H1574.5V180.1H1575.5V182.3H1576.5V182.2H1577.5V181.1H1578.5V181H1579.5V179.3H1580.5V180.2H1581.5V180.1H1582.5V178.8H1583.5V181.7H1584.5V180.8H1585.5V181.7H1586.5V179.7H1587.5V178.5H1588.5V179.2H1589.5V177.9H1590.5V177.7H1591.5V179.3H1592.5V180.1H1593.5V178.5H1594.5V178.2H1595.5V179.4H1596.5V180.6H1597.5V177.6H1598.5V179.6H1599.5V181H1600.5V180.7H1601.5V179.2H1602.5V176.8H1603.5V177.8H1604.5V180.7H1605.5V177.6H1606.5V178.1H1607.5V178.5H1608.5V177H1609.5V179.7H1610.5V180.1H1611.5V179.8H1612.5V180.5H1613.5V180.5H1614.5V180.4H1615.5V179H1616.5V178.9H1617.5V180.5H1618.5V180.3H1619.5V177.8H1620.5V178.2H1621.5V181.3H1622.5V179.5H1623.5V177H1624.5V181.4H1625.5V180.7H1626.5V181.1H1627.5V180.5H1628.5V178.2H1629.5V180.9H1630.5V181.3H1631.5V179.7H1632.5V177.6H1633.5V178.6H1634.5V180.2H1635.5V178.4H1636.5V179.2H1637.5V179.8H1638.5V179.3H1639.5V180.7H1640.5V179.3H1641.5V180.7H1642.5V179.7H1643.5V181.4H1644.5V180.1H1645.5V179.3H1646.5V179.2H1647.5V178.1H1648.5V180.7H1649.5V178.2H1650.5V182H1651.5V181.8H1652.5V178.4H1653.5V177.9H1654.5V178.2H1655.5V179.2H1656.5V180.4H1657.5V177.8H1658.5V176.8H1659.5V179.6H1660.5V182.2H1661.5V180.1H1662.5V181.2H1663.5V182H1664.5V180.4H1665.5V179.1H1666.5V179H1667.5V178.9H1668.5V178.5H1669.5V181.2H1670.5V180.8H1671.5V179.5H1672.5V178.2H1673.5V177.9H1674.5V177.2H1675.5V178.7H1676.5V179.5H1677.5V180.4H1678.5V180.7H1679.5V180.8H1680.5V180H1681.5V179.1H1682.5V181.6H1683.5V175.5H1684.5V179H1685.5V178.2H1686.5V178.8H1687.5V179.6H1688.5V178.8H1689.5V179.1H1690.5V179.3H1691.5V178.3H1692.5V178.8H1693.5V179.6H1694.5V180.2H1695.5V181.2H1696.5V181.1H1697.5V181.8H1698.5V180H1699.5V180.4H1700.5V178.3H1701.5V179.9H1702.5V178.4H1703.5V177.1H1704.5V178.5H1705.5V180.5H1706.5V178.5H1707.5V179H1708.5V179.4H1709.5V177.3H1710.5V179.4H1711.5V179.5H1712.5V179.2H1713.5V179.4H1714.5V180.2H1715.5V180.7H1716.5V179.4H1717.5V178.5H1718.5V182.6H1719.5V178.9H1720.5V178.7H1721.5V179.5H1722.5V180.2H1723.5V178.5H1724.5V178.8H1725.5V178.6H1726.5V178.6H1727.5V180.1H1728.5V177.9H1729.5V179.5H1730.5V179.6H1731.5V180.3H1732.5V179.3H1733.5V181.2H1734.5V181.2H1735.5V179.8H1736.5V180.3H1737.5V181.1H1738.5V179.8H1739.5V180H1740.5V179.4H1741.5V180H1742.5V178.7H1743.5V181.3H1744.5V179H1745.5V179.3H1746.5V181H1747.5V179.7H1748.5V179H1749.5V177.9H1750.5V180.4H1751.5V181.5H1752.5V182.3H1753.5V179.4H1754.5V179.7H1755.5V182.3H1756.5V178.1H1757.5V182.2H1758.5V178.8H1759.5V178.2H1760.5V182H1761.5V180.7H1762.5V178.7H1763.5V180H1764.5V179.5H1765.5V177.7H1766.5V179.8H1767.5V178.1H1768.5V178.1H1769.5V180.1H1770.5V177.2H1771.5V178.6H1772.5V180H1773.5V178.7H1774.5V181.1H1775.5V181.5H1776.5V176.6H1777.5V177.4H1778.5V179.6H1779.5V181.7H1780.5V180.7H1781.5V178.5H1782.5V179.1H1783.5V179.1H1784.5V179.5H1785.5V179.6H1786.5V179H1787.5V179.8H1788.5V176H1789.5V180H1790.5V179.7H1791.5V180.8H1792.5V181.8H1793.5V180.6H1794.5V177.4H1795.5V179.5H1796.5V176.3H1797.5V177.2H1798.5V178.2H1799.5V180.2H1800.5V180H1801.5V179.5H1802.5V177.5H1803.5V182.7H1804.5V178.1H1805.5V180.7H1806.5V180.2H1807.5V180H1808.5V177.8H1809.5V179.2H1810.5V179.3H1811.5V180.5H1812.5V179.6H1813.5V180.6H1814.5V179.6H1815.5V181.6H1816.5V177.9H1817.5V176.8H1818.5V181.5H1819.5V180.7H1820.5V180H1821.5V179.9H1822.5V181H1823.5V180.7H1824.5V178.4H1825.5V178H1826.5V179.9H1827.5V181.2H1828.5V178.4H1829.5V179.8H1830.5V178.7H1831.5V177.8H1832.5V178.2H1833.5V178.1H1834.5V178.5H1835.5V178.4H1836.5V182.4H1837.5V180.6H1838.5V179.9H1839.5V180.2H1840.5V178.3H1841.5V182H1842.5V181.8H1843.5V179.1H1844.5V179.7H1845.5V180.7H1846.5V180.1H1847.5V180.8H1848.5V180.2H1849.5V180.4H1850.5V178.7H1851.5V180.3H1852.5V178.1H1853.5V179H1854.5V179.7H1855.5V177.2H1856.5V178.7H1857.5V181.1H1858.5V177.2H1859.5V180.8H1860.5V178.3H1861.5V177.8H1862.5V179.8H1863.5V180.3H1864.5V180.6H1865.5V176.1H1866.5V177.2H1867.5V179.8H1868.5V178.1H1869.5V179.1H1870.5V179H1871.5V180.1H1872.5V177.2H1873.5V176.9H1874.5V179H1875.5V180H1876.5V179.8H1877.5V182.9H1878.5V180H1879.5V180.1H1880.5V180.9H1881.5V181H1882.5V180.8H1883.5V180.4H1884.5V181.1H1885.5V180.3H1886.5V176H1887.5V179.7H1888.5V180.1H1889.5V179.5H1890.5V181.2H1891.5V178.5H1892.5V179.6H1893.5V179.5H1894.5V181.2H1895.5V182.1H1896.5V180.7H1897.5V180.4H1898.5V177.8H1899.5V179.4H1900.5V180H1901.5V180.7H1902.5V179.9H1903.5V177.6H1904.5V176.9H1905.5V180.2H1906.5V181.8H1907.5V178.6H1908.5V176.8H1909.5V180.1H1910.5V180.3H1911.5V181.5H1912.5V180.1H1913.5V180.2H1914.5V182.1H1915.5V179.9H1916.5V179.6H1917.5V179.7H1918.5V181.4H1919.5V180.5H1920.5V180H1921.5V179.2H1922.5V180.1H1923.5V177.8H1924.5V180.1H1925.5V177.3H1926.5V178H1927.5V182.9H1928.5V178.6H1929.5V178.8H1930.5V179H1931.5V177.5H1932.5V181H1933.5V178.2H1934.5V179.2H1935.5V181.4H1936.5V178.9H1937.5V178.9H1938.5V178.7H1939.5V176.9H1940.5V180.8H1941.5V182.9H1942.5V178.3H1943.5V179.4H1944.5V180H1945.5V179.6H1946.5V178.5H1947.5V182.3H1948.5V177.3H1949.5V177.3H1950.5V180H1951.5V177.7H1952.5V178.1H1953.5V178.6H1954.5V178.2H1955.5V178.4H1956.5V178.7H1957.5V178.7H1958.5V180.2H1959.5V179.2H1960.5V180.4H1961.5V180.2H1962.5V179.3H1963.5V180.4H1964.5V178.8H1965.5V178.5H1966.5V179.1H1967.5V178.7H1968.5V180.9H1969.5V178.8H1970.5V182.2H1971.5V192Z" fill="#f56f7e"/></svg>
<div class="ax" style="right:1957px;top:145px;text-align:right">1000</div>
<div class="ax" style="right:1957px;top:165.5px;text-align:right">500</div>
<div class="ax" style="right:1957px;top:185.5px;text-align:right">0</div>
<div class="a" style="left:0;top:196px;width:1979px;height:16px;overflow:hidden">
<div class="ax" style="left:27.5px;width:40px;top:2px;text-align:center">13:20</div>
<div class="ax" style="left:73.3px;width:40px;top:2px;text-align:center">13:30</div>
<div class="ax" style="left:119.1px;width:40px;top:2px;text-align:center">13:40</div>
<div class="ax" style="left:164.9px;width:40px;top:2px;text-align:center">13:50</div>
<div class="ax" style="left:210.7px;width:40px;top:2px;text-align:center">14:00</div>
<div class="ax" style="left:256.5px;width:40px;top:2px;text-align:center">14:10</div>
<div class="ax" style="left:302.3px;width:40px;top:2px;text-align:center">14:20</div>
<div class="ax" style="left:348.1px;width:40px;top:2px;text-align:center">14:30</div>
<div class="ax" style="left:393.8px;width:40px;top:2px;text-align:center">14:40</div>
<div class="ax" style="left:439.6px;width:40px;top:2px;text-align:center">14:50</div>
<div class="ax" style="left:485.4px;width:40px;top:2px;text-align:center">15:00</div>
<div class="ax" style="left:531.2px;width:40px;top:2px;text-align:center">15:10</div>
<div class="ax" style="left:577px;width:40px;top:2px;text-align:center">15:20</div>
<div class="ax" style="left:622.8px;width:40px;top:2px;text-align:center">15:30</div>
<div class="ax" style="left:668.6px;width:40px;top:2px;text-align:center">15:40</div>
<div class="ax" style="left:714.4px;width:40px;top:2px;text-align:center">15:50</div>
<div class="ax" style="left:760.2px;width:40px;top:2px;text-align:center">16:00</div>
<div class="ax" style="left:806px;width:40px;top:2px;text-align:center">16:10</div>
<div class="ax" style="left:851.8px;width:40px;top:2px;text-align:center">16:20</div>
<div class="ax" style="left:897.6px;width:40px;top:2px;text-align:center">16:30</div>
<div class="ax" style="left:943.4px;width:40px;top:2px;text-align:center">16:40</div>
<div class="ax" style="left:989.1px;width:40px;top:2px;text-align:center">16:50</div>
<div class="ax" style="left:1034.9px;width:40px;top:2px;text-align:center">17:00</div>
<div class="ax" style="left:1080.7px;width:40px;top:2px;text-align:center">17:10</div>
<div class="ax" style="left:1126.5px;width:40px;top:2px;text-align:center">17:20</div>
<div class="ax" style="left:1172.3px;width:40px;top:2px;text-align:center">17:30</div>
<div class="ax" style="left:1218.1px;width:40px;top:2px;text-align:center">17:40</div>
<div class="ax" style="left:1263.9px;width:40px;top:2px;text-align:center">17:50</div>
<div class="ax" style="left:1309.7px;width:40px;top:2px;text-align:center">18:00</div>
<div class="ax" style="left:1355.5px;width:40px;top:2px;text-align:center">18:10</div>
<div class="ax" style="left:1401.3px;width:40px;top:2px;text-align:center">18:20</div>
<div class="ax" style="left:1447.1px;width:40px;top:2px;text-align:center">18:30</div>
<div class="ax" style="left:1492.9px;width:40px;top:2px;text-align:center">18:40</div>
<div class="ax" style="left:1538.7px;width:40px;top:2px;text-align:center">18:50</div>
<div class="ax" style="left:1584.5px;width:40px;top:2px;text-align:center">19:00</div>
<div class="ax" style="left:1630.2px;width:40px;top:2px;text-align:center">19:10</div>
<div class="ax" style="left:1676px;width:40px;top:2px;text-align:center">19:20</div>
<div class="ax" style="left:1721.8px;width:40px;top:2px;text-align:center">19:30</div>
<div class="ax" style="left:1767.6px;width:40px;top:2px;text-align:center">19:40</div>
<div class="ax" style="left:1813.4px;width:40px;top:2px;text-align:center">19:50</div>
<div class="ax" style="left:1859.2px;width:40px;top:2px;text-align:center">20:00</div>
<div class="ax" style="left:1905px;width:40px;top:2px;text-align:center">20:10</div>
<div class="ax" style="left:1950.8px;width:40px;top:2px;text-align:center">20:20</div>
</div>
<div class="a" style="left:18px;top:225.3px;width:12px;height:4px;border-radius:2px;background:#e02f44"></div>
<div class="leg" style="left:37.5px;top:220.8px">error</div>
<div class="leg" style="left:70px;top:220.8px">Total: 514368</div>
<div class="a" style="left:149px;top:225.3px;width:12px;height:4px;border-radius:2px;background:#56a64b"></div>
<div class="leg" style="left:168px;top:220.8px">info</div>
<div class="leg" style="left:195px;top:220.8px">Total: 1366606</div>
<div class="a" style="left:280.5px;top:225.3px;width:12px;height:4px;border-radius:2px;background:#b877d9"></div>
<div class="leg" style="left:299.5px;top:220.8px">trace</div>
<div class="leg" style="left:333.5px;top:220.8px">Total: 56813</div>
<div class="a" style="left:405.5px;top:225.3px;width:12px;height:4px;border-radius:2px;background:#ff780a"></div>
<div class="leg" style="left:424px;top:220.8px">warning</div>
<div class="leg" style="left:473.2px;top:220.8px">Total: 92</div>
<div class="panel" style="left:6px;top:254px;width:656px;height:162px"></div>
<div class="ptitle" style="left:18px;top:265.5px">Services (click to filter)</div>
<svg class="a" style="left:173px;top:265.7px" width="14" height="13" viewBox="0 0 14 13"><path d="M5.3 2.7 H2.3 Q1.1 2.7 1.1 3.9 V10 Q1.1 11.2 2.3 11.2 H8.9 Q10.1 11.2 10.1 10 V6.8" fill="none" stroke="#5b5f63" stroke-width="1.2"/><path d="M4.4 8.1 L12.1 1.1 M8.4 1 H12.5 V5" fill="none" stroke="#45494d" stroke-width="1.3"/></svg>
<div class="a" style="left:10px;width:88px;top:298px;height:14px;line-height:14px;text-align:right;font-size:12px;color:#24292e;white-space:nowrap">cart</div>
<div class="a" style="left:106px;top:298px;width:455px;height:14px;border-radius:3px;background:#f4f4f4"></div>
<div class="a" style="left:106px;top:298px;width:419px;height:14px;border-radius:3px;background:#56a64b"></div>
<div class="a" style="right:1368px;top:297px;line-height:16px;font-size:14.5px;color:#56a64b;white-space:nowrap">4721079</div>
<div class="a" style="left:10px;width:88px;top:321px;height:14px;line-height:14px;text-align:right;font-size:12px;color:#24292e;white-space:nowrap">frontend-proxy</div>
<div class="a" style="left:106px;top:321px;width:450px;height:14px;border-radius:3px;background:#f4f4f4"></div>
<div class="a" style="left:106px;top:321px;width:288px;height:14px;border-radius:3px;background:#e0b400"></div>
<div class="a" style="right:1368px;top:320px;line-height:16px;font-size:14.5px;color:#e0b400;white-space:nowrap">3259468</div>
<div class="a" style="left:10px;width:88px;top:344px;height:14px;line-height:14px;text-align:right;font-size:12px;color:#24292e;white-space:nowrap">payment</div>
<div class="a" style="left:106px;top:344px;width:459px;height:14px;border-radius:3px;background:#f4f4f4"></div>
<div class="a" style="left:106px;top:344px;width:69px;height:14px;border-radius:3px;background:#3274d9"></div>
<div class="a" style="right:1368px;top:343px;line-height:16px;font-size:14.5px;color:#3274d9;white-space:nowrap">804046</div>
<div class="a" style="left:10px;width:88px;top:367px;height:14px;line-height:14px;text-align:right;font-size:12px;color:#24292e;white-space:nowrap">checkout</div>
<div class="a" style="left:106px;top:367px;width:464px;height:14px;border-radius:3px;background:#f4f4f4"></div>
<div class="a" style="left:106px;top:367px;width:52px;height:14px;border-radius:3px;background:#ff780a"></div>
<div class="a" style="right:1368px;top:366px;line-height:16px;font-size:14.5px;color:#ff780a;white-space:nowrap">616707</div>
<div class="a" style="left:10px;width:88px;top:390px;height:14px;line-height:14px;text-align:right;font-size:12px;color:#24292e;white-space:nowrap">ad</div>
<div class="a" style="left:106px;top:390px;width:460px;height:14px;border-radius:3px;background:#f4f4f4"></div>
<div class="a" style="left:106px;top:390px;width:46px;height:14px;border-radius:3px;background:#e02f44"></div>
<div class="a" style="right:1368px;top:389px;line-height:16px;font-size:14.5px;color:#e02f44;white-space:nowrap">550958</div>
<div class="panel" style="left:669px;top:254px;width:655px;height:162px"></div>
<div class="ptitle" style="left:680px;top:265.5px">Level Distribution</div>
<svg class="a" style="left:0;top:0" width="1999" height="420"><path d="M924.90 312.10A40.4 40.4 0 1 1 886.09 363.72L902.23 359.05A23.6 23.6 0 1 0 924.90 328.90Z" fill="#76bc6d" stroke="#fff" stroke-width="1.2"/><path d="M886.09 363.72A40.4 40.4 0 0 1 917.49 312.79L920.57 329.30A23.6 23.6 0 0 0 902.23 359.05Z" fill="#fad921" stroke="#fff" stroke-width="1.2"/><path d="M917.49 312.79A40.4 40.4 0 0 1 924.89 312.10L924.89 328.90A23.6 23.6 0 0 0 920.57 329.30Z" fill="#5f8fe6" stroke="#fff" stroke-width="1.2"/></svg>
<div class="a" style="left:1177px;top:307.5px;width:12px;height:4px;border-radius:2px;background:#56a64b"></div>
<div class="leg" style="left:1197px;top:303.5px">info</div>
<div class="leg" style="right:697px;top:303.5px">Value: 1366606</div>
<div class="a" style="left:1177px;top:327.8px;width:12px;height:4px;border-radius:2px;background:#e0b400"></div>
<div class="leg" style="left:1197px;top:323.8px">error</div>
<div class="leg" style="right:697px;top:323.8px">Value: 514368</div>
<div class="a" style="left:1177px;top:348.1px;width:12px;height:4px;border-radius:2px;background:#3274d9"></div>
<div class="leg" style="left:1197px;top:344.1px">trace</div>
<div class="leg" style="right:697px;top:344.1px">Value: 56813</div>
<div class="a" style="left:1177px;top:368.4px;width:12px;height:4px;border-radius:2px;background:#ff780a"></div>
<div class="leg" style="left:1197px;top:364.4px">warn</div>
<div class="leg" style="right:697px;top:364.4px">Value: 92</div>
<div class="panel" style="left:1331px;top:254px;width:655px;height:162px"></div>
<div class="ptitle" style="left:1342px;top:265.5px">Top Error Messages</div>
<div class="a" style="left:1339px;top:296px;width:640px;height:112px;overflow:hidden">
<div class="a" style="left:0;top:31.0px;width:640px;height:1px;background:#e4e5e6"></div>
<div class="a" style="left:0;top:63.0px;width:640px;height:1px;background:#e4e5e6"></div>
<div class="a" style="left:0;top:95.0px;width:640px;height:1px;background:#e4e5e6"></div>
<div class="a" style="left:52.90000000000009px;top:0;width:1px;height:112px;background:#e4e5e6"></div>
<div class="a" style="left:141.5999999999999px;top:0;width:1px;height:112px;background:#e4e5e6"></div>
<div class="a" style="left:575.5px;top:0;width:1px;height:112px;background:#e4e5e6"></div>
<div class="a" style="left:6px;top:8.5px;line-height:16px;font-size:13.5px;color:#5b5f63;white-space:nowrap">Level</div>
<div class="a" style="left:59.5px;top:8.5px;line-height:16px;font-size:13.5px;color:#5b5f63;white-space:nowrap">Service</div>
<div class="a" style="left:148px;top:8.5px;line-height:16px;font-size:13.5px;color:#5b5f63;white-space:nowrap">Message</div>
<div class="a" style="left:582px;top:8.5px;line-height:16px;font-size:13.5px;color:#5b5f63;white-space:nowrap">Count</div>
<svg class="a" style="left:621px;top:12px" width="9" height="10" viewBox="0 0 9 10"><path d="M4.5 1 V9 M1 5.5 L4.5 9 L8 5.5" fill="none" stroke="#24292e" stroke-width="1.2"/></svg>
<div class="a" style="left:6px;top:39.5px;line-height:16px;font-size:13.5px;color:#24292e;white-space:nowrap">error</div>
<div class="a" style="left:59.5px;top:39.5px;line-height:16px;font-size:13.5px;color:#24292e;white-space:nowrap">frontend</div>
<div class="a" style="left:148px;top:39.5px;width:426px;overflow:hidden;line-height:16px;font-size:13.5px;color:#24292e;white-space:nowrap">Failed to place order</div>
<div class="a" style="right:7px;top:39.5px;line-height:16px;font-size:13.5px;color:#24292e;white-space:nowrap">85728</div>
<div class="a" style="left:6px;top:71.5px;line-height:16px;font-size:13.5px;color:#24292e;white-space:nowrap">error</div>
<div class="a" style="left:59.5px;top:71.5px;line-height:16px;font-size:13.5px;color:#24292e;white-space:nowrap">frontend</div>
<div class="a" style="left:148px;top:71.5px;width:426px;overflow:hidden;line-height:16px;font-size:13.5px;color:#24292e;white-space:nowrap"><span style="font-size:9px">&#x2A2F;</span> {"code":13,"details":"failed to charge card: could not charge the card:</div>
<div class="a" style="right:7px;top:71.5px;line-height:16px;font-size:13.5px;color:#24292e;white-space:nowrap">85700</div>
<div class="a" style="left:6px;top:103.5px;line-height:16px;font-size:13.5px;color:#24292e;white-space:nowrap">error</div>
<div class="a" style="left:59.5px;top:103.5px;line-height:16px;font-size:13.5px;color:#24292e;white-space:nowrap">payment</div>
<div class="a" style="left:148px;top:103.5px;width:426px;overflow:hidden;line-height:16px;font-size:13.5px;color:#24292e;white-space:nowrap">Visa cache full: cannot add new item.</div>
<div class="a" style="right:7px;top:103.5px;line-height:16px;font-size:13.5px;color:#24292e;white-space:nowrap">85700</div>
</div>
<div class="panel" style="left:6px;top:457px;width:656px;height:432px"></div>
<div class="ptitle" style="left:18px;top:468.5px">Log Volume — payment</div>
<svg class="a" style="left:0;top:0" width="1999" height="900"><path d="M47.5 833.5H645.7" stroke="#f1f1f1" stroke-width="1"/><path d="M47.5 792.7H645.7" stroke="#f1f1f1" stroke-width="1"/><path d="M47.5 751.9H645.7" stroke="#f1f1f1" stroke-width="1"/><path d="M47.5 711.1H645.7" stroke="#f1f1f1" stroke-width="1"/><path d="M47.5 670.3H645.7" stroke="#f1f1f1" stroke-width="1"/><path d="M47.5 629.5H645.7" stroke="#f1f1f1" stroke-width="1"/><path d="M47.5 588.7H645.7" stroke="#f1f1f1" stroke-width="1"/><path d="M47.5 547.9H645.7" stroke="#f1f1f1" stroke-width="1"/><path d="M47.5 507.1H645.7" stroke="#f1f1f1" stroke-width="1"/><path d="M104.7 507V833.5" stroke="#f1f1f1" stroke-width="1"/><path d="M190 507V833.5" stroke="#f1f1f1" stroke-width="1"/><path d="M275.3 507V833.5" stroke="#f1f1f1" stroke-width="1"/><path d="M360.7 507V833.5" stroke="#f1f1f1" stroke-width="1"/><path d="M446 507V833.5" stroke="#f1f1f1" stroke-width="1"/><path d="M531.3 507V833.5" stroke="#f1f1f1" stroke-width="1"/><path d="M616.6 507V833.5" stroke="#f1f1f1" stroke-width="1"/><path d="M47.5 626.8V611.3h1V626.8zM49.5 623.3V576.7h1V623.3zM51.5 580.7V576.7h1V580.7zM52.5 593V580.7h1V593zM53.5 605.5V593h1V605.5zM54.5 619.1V584.5h1V619.1zM55.5 584.5V577.6h1V584.5zM57.5 601.5V577.6h1V601.5zM59.5 605.7V564.6h1V605.7zM61.5 585.6V564.6h1V585.6zM63.5 577.6V567.5h1V577.6zM64.5 622.3V560h1V622.3zM66.5 637.6V560h1V637.6zM68.5 596.6V589.2h1V596.6zM69.5 589.2V588h1V589.2zM70.5 588V572.5h1V588zM72.5 594.5V572.5h1V594.5zM73.5 600.2V591.1h1V600.2zM75.5 601V591.1h1V601zM77.5 617.5V566.8h1V617.5zM79.5 598.3V566.8h1V598.3zM80.5 590.9V554.4h1V590.9zM82.5 569.6V554.4h1V569.6zM83.5 574.3V569.6h1V574.3zM84.5 595.1V574.3h1V595.1zM85.5 625V564.4h1V625zM87.5 608.2V553.7h1V608.2zM89.5 578.6V553.7h1V578.6zM90.5 638.2V578.6h1V638.2zM92.5 611.3V592.9h1V611.3zM93.5 593.3V585.2h1V593.3zM95.5 650.4V585.2h1V650.4zM96.5 590.3V578.2h1V590.3zM98.5 600.6V578.2h1V600.6zM99.5 631.3V600.6h1V631.3zM100.5 608V555.3h1V608zM102.5 575.7V555.3h1V575.7zM103.5 596.6V575.7h1V596.6zM104.5 627.4V596.6h1V627.4zM105.5 628.7V575.6h1V628.7zM106.5 575.6V560.9h1V575.6zM108.5 588.7V560.9h1V588.7zM110.5 581.1V566h1V581.1zM111.5 619.2V581.1h1V619.2zM112.5 607.2V599.3h1V607.2zM114.5 605.2V579h1V605.2zM116.5 609.7V579h1V609.7zM118.5 611.8V580.8h1V611.8zM120.5 609.2V598.1h1V609.2zM121.5 625.4V598.2h1V625.4zM122.5 598.2V586.5h1V598.2zM124.5 610V579.8h1V610zM126.5 619.7V575.6h1V619.7zM128.5 579.2V575.6h1V579.2zM129.5 618.5V579.2h1V618.5zM130.5 628.3V595.4h1V628.3zM132.5 619V595.4h1V619zM133.5 595.7V592.4h1V595.7zM134.5 592.4V562.2h1V592.4zM136.5 616.1V562.2h1V616.1zM138.5 584.6V562.7h1V584.6zM139.5 621.3V584.6h1V621.3zM141.5 622.9V620.2h1V622.9zM142.5 630.4V622.9h1V630.4zM143.5 644.6V630.4h1V644.6zM144.5 641.7V602.1h1V641.7zM146.5 626.9V590.9h1V626.9zM148.5 617.6V590.9h1V617.6zM149.5 621.5V602.4h1V621.5zM151.5 609.7V602.4h1V609.7zM153.5 624.4V607.9h1V624.4zM154.5 637.4V585.5h1V637.4zM156.5 596.5V585.5h1V596.5zM157.5 603.6V576.5h1V603.6zM159.5 612.9V576.5h1V612.9zM160.5 620.6V612.9h1V620.6zM161.5 628.4V620.6h1V628.4zM162.5 659.6V616.1h1V659.6zM164.5 618.5V613.4h1V618.5zM166.5 636.6V581.3h1V636.6zM168.5 629.8V581.3h1V629.8zM169.5 611.9V587.7h1V611.9zM171.5 622.6V587.7h1V622.6zM172.5 651.5V615.3h1V651.5zM173.5 615.3V601.1h1V615.3zM174.5 601.1V599.3h1V601.1zM175.5 599.3V585.3h1V599.3zM177.5 626.9V585.3h1V626.9zM179.5 618.7V595.7h1V618.7zM181.5 603.7V585.9h1V603.7zM183.5 620.9V585.9h1V620.9zM184.5 627.1V592.2h1V627.1zM185.5 592.2V591.5h1V592.2zM187.5 618.1V591.5h1V618.1zM188.5 606.7V600.1h1V606.7zM190.5 633.7V600.1h1V633.7zM191.5 637V618.1h1V637zM193.5 620.8V618.1h1V620.8zM194.5 627.8V604.4h1V627.8zM196.5 623.9V604.4h1V623.9zM197.5 627.8V598.9h1V627.8zM199.5 638.1V598.9h1V638.1zM200.5 606.6V583.9h1V606.6zM202.5 623.7V583.9h1V623.7zM203.5 633.1V623.7h1V633.1zM204.5 642.8V616.3h1V642.8zM205.5 616.3V612.1h1V616.3zM206.5 612.1V600.2h1V612.1zM207.5 600.2V576.9h1V600.2zM209.5 628.9V576.9h1V628.9zM211.5 608.3V599.2h1V608.3zM212.5 629.4V608.3h1V629.4zM213.5 625.7V588.3h1V625.7zM215.5 613.9V588h1V613.9zM217.5 622.3V585.1h1V622.3zM218.5 585.1V563.3h1V585.1zM220.5 617V563.3h1V617zM222.5 657.1V612.9h1V657.1zM223.5 620V597h1V620zM224.5 597V587.3h1V597zM226.5 616.5V587.3h1V616.5zM227.5 617.8V593.7h1V617.8zM229.5 605.7V593.7h1V605.7zM230.5 643V605.7h1V643zM232.5 620.2V610.4h1V620.2zM233.5 634.2V602.5h1V634.2zM234.5 602.5V584h1V602.5zM236.5 586.7V584h1V586.7zM237.5 646.7V586.7h1V646.7zM238.5 637.5V599.6h1V637.5zM239.5 599.6V594.1h1V599.6zM241.5 621V594.1h1V621zM243.5 620V600h1V620zM244.5 633.2V584.1h1V633.2zM246.5 602.4V584.1h1V602.4zM247.5 626.2V602.4h1V626.2zM248.5 608.6V606.4h1V608.6zM249.5 606.4V584.7h1V606.4zM251.5 601.8V584.7h1V601.8zM253.5 605.4V592.7h1V605.4zM255.5 614.1V592.7h1V614.1zM256.5 629.7V600.8h1V629.7zM258.5 629.7V600.8h1V629.7zM260.5 615.5V614.4h1V615.5zM261.5 617.9V612h1V617.9zM263.5 636.9V612h1V636.9zM264.5 624.3V607.2h1V624.3zM266.5 607.8V606.9h1V607.8zM268.5 612.5V606.9h1V612.5zM269.5 639.3V612.5h1V639.3zM270.5 632.1V617.9h1V632.1zM271.5 617.9V601.6h1V617.9zM273.5 615V601.6h1V615zM274.5 610.1V603.4h1V610.1zM275.5 603.4V597.7h1V603.4zM277.5 597.7V573h1V597.7zM279.5 617.3V573h1V617.3zM280.5 636.4V617.3h1V636.4zM281.5 643.7V584.1h1V643.7zM283.5 601.8V584.1h1V601.8z" fill="#e6d0f1"/><path d="M284.5 681.4V601.8h1V681.4zM285.5 671.6V669.6h1V671.6zM286.5 669.6V667.9h1V669.6zM288.5 670V667.9h1V670zM289.5 676.6V670h1V676.6zM290.5 693V665.3h1V693zM292.5 703.6V665.3h1V703.6zM293.5 687.1V674h1V687.1zM294.5 674V658.9h1V674zM296.5 673.9V658.9h1V673.9zM297.5 699.2V673.9h1V699.2zM298.5 680.3V670.4h1V680.3zM300.5 677.4V670.4h1V677.4zM301.5 674.3V670.7h1V674.3zM303.5 673.4V663.1h1V673.4zM305.5 671.5V654.1h1V671.5zM307.5 659.7V654.1h1V659.7zM308.5 671.6V659.7h1V671.6zM309.5 665.6V660.6h1V665.6zM311.5 675.5V660.6h1V675.5zM312.5 678.3V666.5h1V678.3zM314.5 679.8V666.5h1V679.8zM316.5 700.6V664.9h1V700.6zM318.5 679.8V664.6h1V679.8zM319.5 664.6V656.8h1V664.6zM321.5 681.3V656.8h1V681.3zM324.5 674V669.6h1V674zM326.5 678.2V664.3h1V678.2zM328.5 672.4V664.3h1V672.4zM329.5 673.6V672.4h1V673.6zM330.5 688.6V673.6h1V688.6zM332.5 688.6V675.8h1V688.6zM334.5 704.6V675.8h1V704.6zM335.5 692.7V655h1V692.7zM337.5 672.4V655h1V672.4zM338.5 668.8V658.2h1V668.8zM340.5 670.8V658.2h1V670.8zM341.5 688.1V670.8h1V688.1zM342.5 672.1V663.4h1V672.1zM344.5 687.6V663.4h1V687.6zM345.5 682.5V674.1h1V682.5zM346.5 674.1V673.2h1V674.1zM348.5 693.3V673.2h1V693.3zM349.5 679.7V678.8h1V679.7zM351.5 687.6V673.5h1V687.6zM352.5 673.5V664.5h1V673.5zM354.5 675.9V664.5h1V675.9zM356.5 699.2V674.6h1V699.2zM357.5 693.6V679.3h1V693.6zM359.5 683.1V651h1V683.1zM361.5 664.8V651h1V664.8zM362.5 682.2V664.8h1V682.2zM363.5 672.3V667.5h1V672.3zM365.5 682.8V667.5h1V682.8zM366.5 682.7V669.9h1V682.7zM367.5 669.9V667h1V669.9zM369.5 682.8V667h1V682.8zM371.5 682.8V669.8h1V682.8zM372.5 669.8V657.4h1V669.8zM374.5 676V657.4h1V676zM375.5 682.6V676h1V682.6zM376.5 699V682.6h1V699zM377.5 695V673.8h1V695zM379.5 682.2V662.1h1V682.2zM381.5 672.5V662.1h1V672.5zM383.5 679.6V666.1h1V679.6zM385.5 693.1V667.2h1V693.1zM386.5 692.7V687.9h1V692.7zM387.5 687.9V667.4h1V687.9zM389.5 689.4V667.4h1V689.4zM390.5 670.4V664.8h1V670.4zM392.5 691.1V664.8h1V691.1zM393.5 684.7V674.6h1V684.7zM395.5 679V674.6h1V679zM396.5 690.9V670.3h1V690.9zM398.5 697.9V670.3h1V697.9zM399.5 690.3V659.7h1V690.3zM401.5 676.4V659.7h1V676.4zM403.5 674.2V670.3h1V674.2zM405.5 700.4V672.4h1V700.4zM406.5 676.7V672.7h1V676.7zM408.5 690V672.7h1V690zM409.5 686.1V676.8h1V686.1zM410.5 676.8V667.4h1V676.8zM412.5 698.8V657h1V698.8zM414.5 682V657h1V682zM416.5 689.5V662.7h1V689.5zM417.5 686.7V673.7h1V686.7zM419.5 676.2V660.7h1V676.2zM421.5 672.7V660.7h1V672.7zM423.5 686.6V666.4h1V686.6zM425.5 689.5V666.4h1V689.5zM426.5 694.3V664.1h1V694.3zM428.5 692.2V658.6h1V692.2zM430.5 701.8V656.2h1V701.8zM432.5 682V656.2h1V682zM434.5 669V657.6h1V669zM435.5 657.6V656h1V657.6zM437.5 695.8V656h1V695.8zM438.5 688.4V675.9h1V688.4zM440.5 704.3V669.3h1V704.3zM441.5 669.3V668.2h1V669.3zM443.5 669.5V668.2h1V669.5zM444.5 694.7V664.2h1V694.7zM446.5 682.1V659.1h1V682.1zM448.5 667.7V659.1h1V667.7zM449.5 686.6V667.7h1V686.6zM451.5 691.8V669.7h1V691.8zM453.5 677.7V669.7h1V677.7zM454.5 700.3V671.2h1V700.3zM456.5 682.1V671.2h1V682.1zM457.5 687V665.9h1V687zM459.5 681.9V665.7h1V681.9zM460.5 665.7V657.2h1V665.7zM462.5 666.8V657.2h1V666.8zM464.5 669.4V662.3h1V669.4zM465.5 666.2V664.6h1V666.2zM467.5 675.2V664.6h1V675.2zM468.5 684.5V669.6h1V684.5zM470.5 676.4V669.6h1V676.4zM471.5 676.4V641.9h1V676.4zM473.5 675.3V641.9h1V675.3zM475.5 671.7V666.2h1V671.7zM476.5 676.2V669.1h1V676.2zM478.5 674.6V669.1h1V674.6zM479.5 677.7V674.6h1V677.7zM480.5 677.6V662.9h1V677.6zM482.5 671.4V662.9h1V671.4zM483.5 691.4V659.2h1V691.4zM485.5 697.6V653.4h1V697.6zM487.5 672.3V653.4h1V672.3zM489.5 673.7V671.1h1V673.7zM490.5 676.8V673.7h1V676.8zM491.5 680.7V660.8h1V680.7zM493.5 665V660.8h1V665zM494.5 679.9V665h1V679.9zM496.5 693.4V672h1V693.4zM497.5 680.2V648.3h1V680.2zM499.5 674.3V648.3h1V674.3zM500.5 661.3V656.6h1V661.3zM502.5 666.6V656.6h1V666.6zM504.5 669.3V659.7h1V669.3zM506.5 686V668.9h1V686zM508.5 700.2V659.5h1V700.2zM510.5 660.9V659.5h1V660.9zM511.5 680.7V660.9h1V680.7zM512.5 680.2V664.6h1V680.2zM514.5 673.2V664.6h1V673.2zM515.5 694.1V664.2h1V694.1zM517.5 666.9V664.2h1V666.9zM518.5 673.1V664.3h1V673.1zM520.5 702V664.3h1V702zM522.5 702.8V668.7h1V702.8zM523.5 670.3V668.9h1V670.3zM525.5 674.4V668.9h1V674.4zM526.5 676.5V674.4h1V676.5zM527.5 681.4V674.9h1V681.4zM529.5 690.2V663.4h1V690.2zM531.5 680.4V661h1V680.4zM533.5 670.6V661h1V670.6zM535.5 672.3V656.4h1V672.3zM537.5 683.3V656.4h1V683.3zM538.5 684.8V669.7h1V684.8zM539.5 669.7V665.5h1V669.7zM541.5 678.9V665.5h1V678.9zM542.5 676V670.5h1V676zM544.5 689.2V670.5h1V689.2zM546.5 683.4V672.7h1V683.4zM548.5 679.5V675.7h1V679.5zM549.5 690.8V679.5h1V690.8zM550.5 682.3V673.7h1V682.3zM551.5 673.7V660.6h1V673.7zM553.5 670.5V660.6h1V670.5zM554.5 677.5V670.5h1V677.5zM555.5 679.3V660.9h1V679.3zM557.5 677.7V660.9h1V677.7zM558.5 682.9V673.9h1V682.9zM560.5 687.6V673.9h1V687.6zM561.5 677V665.9h1V677zM562.5 665.9V648.3h1V665.9zM564.5 669.1V648.3h1V669.1zM565.5 672V669.1h1V672zM566.5 673.6V672h1V673.6zM567.5 681.9V660.6h1V681.9zM569.5 687.8V660.6h1V687.8zM570.5 695.5V664.9h1V695.5zM572.5 680.2V664.9h1V680.2zM574.5 687.1V677.5h1V687.1zM575.5 693.1V669.9h1V693.1zM576.5 669.9V664.1h1V669.9zM578.5 676.9V664.1h1V676.9zM579.5 691.1V673.5h1V691.1zM581.5 683.9V659.1h1V683.9zM583.5 682.9V652.1h1V682.9zM585.5 669.2V652.1h1V669.2zM586.5 683.6V669.2h1V683.6zM587.5 672.7V670.5h1V672.7zM589.5 686.8V670.5h1V686.8zM590.5 676.1V668.7h1V676.1zM592.5 672.8V668.7h1V672.8zM593.5 677.6V663.1h1V677.6zM595.5 671.6V663.1h1V671.6zM596.5 681.9V661.2h1V681.9zM598.5 674.2V661.2h1V674.2zM599.5 675.6V674.2h1V675.6zM600.5 679.6V675.6h1V679.6zM601.5 677.5V669.1h1V677.5zM603.5 674.7V669.1h1V674.7zM604.5 696.9V674.2h1V696.9zM606.5 688.1V668.9h1V688.1zM608.5 675.3V668.9h1V675.3zM609.5 684.8V670.4h1V684.8zM611.5 673.8V670.4h1V673.8zM612.5 676.3V673.8h1V676.3zM613.5 685.7V658.1h1V685.7zM615.5 662V658.1h1V662zM616.5 689.3V662h1V689.3zM618.5 694.2V636.9h1V694.2zM620.5 667.3V636.9h1V667.3zM622.5 696.9V655.4h1V696.9zM624.5 660V655.4h1V660zM625.5 663.9V660h1V663.9zM626.5 660.9V654.9h1V660.9zM628.5 665.1V654.9h1V665.1zM629.5 688.1V665.1h1V688.1zM630.5 684.3V665.4h1V684.3zM632.5 676.6V665.4h1V676.6zM633.5 673.4V672.6h1V673.4zM635.5 694.8V672.6h1V694.8zM636.5 674.9V673.6h1V674.9zM638.5 683V672.7h1V683zM640.5 685.6V672.7h1V685.6zM641.5 688.3V685.6h1V688.3zM642.5 691.1V679.9h1V691.1zM643.5 679.9V674.6h1V679.9zM645.5 690.8V674.6h1V690.8z" fill="#cfe8ca"/><path d="M47.5 833.5V655.7H48.5V627.4H49.5V639.9H50.5V620.8H51.5V616.9H52.5V631.6H53.5V649H54.5V656.9H55.5V627H56.5V643.9H57.5V636.8H58.5V635.2H59.5V643.6H60.5V606.7H61.5V635H62.5V606.8H63.5V647.2H64.5V660H65.5V627.5H66.5V652.2H67.5V627.5H68.5V643.6H69.5V634.2H70.5V644.3H71.5V614.6H72.5V644.6H73.5V630.3H74.5V644.7H75.5V639.1H76.5V634.4H77.5V637.7H78.5V610.9H79.5V651.1H80.5V632.9H81.5V621.6H82.5V629.2H83.5V604.7H84.5V645.7H85.5V663.8H86.5V617.9H87.5V628.8H88.5V601.7H89.5V625.9H90.5V663.9H91.5V656.3H92.5V650.4H93.5V641.6H94.5V630H95.5V657H96.5V635.1H97.5V618.8H98.5V647H99.5V661.4H100.5V653.1H101.5V605.7H102.5V620.2H103.5V633.4H104.5V642H105.5V656.1H106.5V624.9H107.5V620.2H108.5V642.3H109.5V607.7H110.5V621H111.5V662.3H112.5V650.2H113.5V644.7H114.5V670.4H115.5V616.9H116.5V651.6H117.5V627.3H118.5V631.5H119.5V655H120.5V634H121.5V650.9H122.5V653.3H123.5V641.1H124.5V634.8H125.5V647.7H126.5V649.5H127.5V618.5H128.5V637.8H129.5V665.1H130.5V654.1H131.5V650.3H132.5V639.9H133.5V655H134.5V621.7H135.5V599.8H136.5V656.3H137.5V623H138.5V621.6H139.5V646.4H140.5V647H141.5V642H142.5V653.9H143.5V664.6H144.5V661.8H145.5V636.9H146.5V666.5H147.5V641.3H148.5V648.9H149.5V656.6H150.5V638.1H151.5V649.8H152.5V644.4H153.5V660.4H154.5V661.4H155.5V643.3H156.5V630.2H157.5V648.6H158.5V624.2H159.5V648.7H160.5V651H161.5V659.2H162.5V679.5H163.5V639.2H164.5V637.4H165.5V651.6H166.5V662.1H167.5V607.1H168.5V656.9H169.5V645.3H170.5V630.4H171.5V652.1H172.5V668H173.5V657.4H174.5V643.9H175.5V631.1H176.5V613H177.5V655.6H178.5V628H179.5V657.4H180.5V628.1H181.5V649.8H182.5V630.4H183.5V657.8H184.5V640.1H185.5V627H186.5V651.2H187.5V643.5H188.5V646.8H189.5V633.1H190.5V659.3H191.5V658.6H192.5V646.1H193.5V645H194.5V659.4H195.5V651.3H196.5V659.9H197.5V646.5H198.5V634.5H199.5V678.6H200.5V631.2H201.5V619.4H202.5V663.8H203.5V651.4H204.5V679.3H205.5V657.3H206.5V639.8H207.5V654.1H208.5V619.2H209.5V651.4H210.5V651.9H211.5V638.6H212.5V665H213.5V659.5H214.5V634.2H215.5V643.6H216.5V642.3H217.5V640H218.5V621.6H219.5V591.6H220.5V647.3H221.5V639.9H222.5V668.8H223.5V647.7H224.5V654.8H225.5V633.4H226.5V653.6H227.5V649.1H228.5V634.2H229.5V641.1H230.5V668.3H231.5V639.9H232.5V657.9H233.5V660.2H234.5V632.1H235.5V623.6H236.5V633.2H237.5V679.4H238.5V665.9H239.5V647.4H240.5V646.5H241.5V654H242.5V644.4H243.5V646.6H244.5V650.9H245.5V626.3H246.5V639.2H247.5V655.2H248.5V633.3H249.5V658H250.5V621.7H251.5V637.6H252.5V623.7H253.5V644.5H254.5V623.5H255.5V642.2H256.5V656H257.5V644.5H258.5V656.5H259.5V652.1H260.5V635H261.5V640.3H262.5V634.8H263.5V662.5H264.5V646.8H265.5V642.6H266.5V644.5H267.5V632.4H268.5V645.8H269.5V677.4H270.5V657.7H271.5V652.7H272.5V640.7H273.5V656.5H274.5V639.4H275.5V646.1H276.5V639.2H277.5V644.2H278.5V611.7H279.5V670.3H280.5V654.6H281.5V682.1H282.5V629H283.5V651.7H284.5V681.4H285.5V671.6H286.5V669.6H287.5V667.9H288.5V670H289.5V676.6H290.5V693H291.5V665.3H292.5V703.6H293.5V687.1H294.5V674H295.5V658.9H296.5V673.9H297.5V699.2H298.5V680.3H299.5V670.4H300.5V677.4H301.5V674.3H302.5V670.7H303.5V673.4H304.5V663.1H305.5V671.5H306.5V654.1H307.5V659.7H308.5V671.6H309.5V665.6H310.5V660.6H311.5V675.5H312.5V678.3H313.5V666.5H314.5V679.8H315.5V668.5H316.5V700.6H317.5V664.9H318.5V679.8H319.5V664.6H320.5V656.8H321.5V681.3H322.5V669.6H323.5V669.6H324.5V674H325.5V670.3H326.5V678.2H327.5V664.3H328.5V672.4H329.5V673.6H330.5V688.6H331.5V678.4H332.5V688.6H333.5V675.8H334.5V704.6H335.5V692.7H336.5V655H337.5V672.4H338.5V668.8H339.5V658.2H340.5V670.8H341.5V688.1H342.5V672.1H343.5V663.4H344.5V687.6H345.5V682.5H346.5V674.1H347.5V673.2H348.5V693.3H349.5V679.7H350.5V678.8H351.5V687.6H352.5V673.5H353.5V664.5H354.5V675.9H355.5V674.6H356.5V699.2H357.5V693.6H358.5V679.3H359.5V683.1H360.5V651H361.5V664.8H362.5V682.2H363.5V672.3H364.5V667.5H365.5V682.8H366.5V682.7H367.5V669.9H368.5V667H369.5V682.8H370.5V673H371.5V682.8H372.5V669.8H373.5V657.4H374.5V676H375.5V682.6H376.5V699H377.5V695H378.5V673.8H379.5V682.2H380.5V662.1H381.5V672.5H382.5V666.1H383.5V679.6H384.5V667.2H385.5V693.1H386.5V692.7H387.5V687.9H388.5V667.4H389.5V689.4H390.5V670.4H391.5V664.8H392.5V691.1H393.5V684.7H394.5V674.6H395.5V679H396.5V690.9H397.5V670.3H398.5V697.9H399.5V690.3H400.5V659.7H401.5V676.4H402.5V670.3H403.5V674.2H404.5V672.4H405.5V700.4H406.5V676.7H407.5V672.7H408.5V690H409.5V686.1H410.5V676.8H411.5V667.4H412.5V698.8H413.5V657H414.5V682H415.5V662.7H416.5V689.5H417.5V686.7H418.5V673.7H419.5V676.2H420.5V660.7H421.5V672.7H422.5V670.8H423.5V686.6H424.5V666.4H425.5V689.5H426.5V694.3H427.5V664.1H428.5V692.2H429.5V658.6H430.5V701.8H431.5V656.2H432.5V682H433.5V667.3H434.5V669H435.5V657.6H436.5V656H437.5V695.8H438.5V688.4H439.5V675.9H440.5V704.3H441.5V669.3H442.5V668.2H443.5V669.5H444.5V694.7H445.5V664.2H446.5V682.1H447.5V659.1H448.5V667.7H449.5V686.6H450.5V674H451.5V691.8H452.5V669.7H453.5V677.7H454.5V700.3H455.5V671.2H456.5V682.1H457.5V687H458.5V665.9H459.5V681.9H460.5V665.7H461.5V657.2H462.5V666.8H463.5V662.3H464.5V669.4H465.5V666.2H466.5V664.6H467.5V675.2H468.5V684.5H469.5V669.6H470.5V676.4H471.5V676.4H472.5V641.9H473.5V675.3H474.5V666.2H475.5V671.7H476.5V676.2H477.5V669.1H478.5V674.6H479.5V677.7H480.5V677.6H481.5V662.9H482.5V671.4H483.5V691.4H484.5V659.2H485.5V697.6H486.5V653.4H487.5V672.3H488.5V671.1H489.5V673.7H490.5V676.8H491.5V680.7H492.5V660.8H493.5V665H494.5V679.9H495.5V672H496.5V693.4H497.5V680.2H498.5V648.3H499.5V674.3H500.5V661.3H501.5V656.6H502.5V666.6H503.5V659.7H504.5V669.3H505.5V669.4H506.5V686H507.5V668.9H508.5V700.2H509.5V659.5H510.5V660.9H511.5V680.7H512.5V680.2H513.5V664.6H514.5V673.2H515.5V694.1H516.5V664.2H517.5V666.9H518.5V673.1H519.5V664.3H520.5V702H521.5V668.7H522.5V702.8H523.5V670.3H524.5V668.9H525.5V674.4H526.5V676.5H527.5V681.4H528.5V674.9H529.5V690.2H530.5V663.4H531.5V680.4H532.5V661H533.5V670.6H534.5V670.7H535.5V672.3H536.5V656.4H537.5V683.3H538.5V684.8H539.5V669.7H540.5V665.5H541.5V678.9H542.5V676H543.5V670.5H544.5V689.2H545.5V672.7H546.5V683.4H547.5V675.7H548.5V679.5H549.5V690.8H550.5V682.3H551.5V673.7H552.5V660.6H553.5V670.5H554.5V677.5H555.5V679.3H556.5V660.9H557.5V677.7H558.5V682.9H559.5V673.9H560.5V687.6H561.5V677H562.5V665.9H563.5V648.3H564.5V669.1H565.5V672H566.5V673.6H567.5V681.9H568.5V660.6H569.5V687.8H570.5V695.5H571.5V664.9H572.5V680.2H573.5V677.5H574.5V687.1H575.5V693.1H576.5V669.9H577.5V664.1H578.5V676.9H579.5V691.1H580.5V673.5H581.5V683.9H582.5V659.1H583.5V682.9H584.5V652.1H585.5V669.2H586.5V683.6H587.5V672.7H588.5V670.5H589.5V686.8H590.5V676.1H591.5V668.7H592.5V672.8H593.5V677.6H594.5V663.1H595.5V671.6H596.5V681.9H597.5V661.2H598.5V674.2H599.5V675.6H600.5V679.6H601.5V677.5H602.5V669.1H603.5V674.7H604.5V696.9H605.5V674.2H606.5V688.1H607.5V668.9H608.5V675.3H609.5V684.8H610.5V670.4H611.5V673.8H612.5V676.3H613.5V685.7H614.5V658.1H615.5V662H616.5V689.3H617.5V666.5H618.5V694.2H619.5V636.9H620.5V667.3H621.5V663.2H622.5V696.9H623.5V655.4H624.5V660H625.5V663.9H626.5V660.9H627.5V654.9H628.5V665.1H629.5V688.1H630.5V684.3H631.5V665.4H632.5V676.6H633.5V673.4H634.5V672.6H635.5V694.8H636.5V674.9H637.5V673.6H638.5V683H639.5V672.7H640.5V685.6H641.5V688.3H642.5V691.1H643.5V679.9H644.5V674.6H645.5V690.8H646.5V833.5Z" fill="#8fcb85"/><path d="M47.5 655.7V626.8h1V655.7zM48.5 627.4V611.3h1V627.4zM49.5 639.9V623.3h1V639.9zM50.5 620.8V576.7h1V620.8zM51.5 616.9V580.7h1V616.9zM52.5 631.6V593h1V631.6zM53.5 649V605.5h1V649zM54.5 656.9V619.1h1V656.9zM55.5 627V584.5h1V627zM56.5 643.9V577.6h1V643.9zM57.5 636.8V601.5h1V636.8zM58.5 635.2V599.3h1V635.2zM59.5 643.6V605.7h1V643.6zM60.5 606.7V564.6h1V606.7zM61.5 635V585.6h1V635zM62.5 606.8V567.5h1V606.8zM63.5 647.2V577.6h1V647.2zM64.5 660V622.3h1V660zM65.5 627.5V560h1V627.5zM66.5 652.2V637.6h1V652.2zM67.5 627.5V591.6h1V627.5zM68.5 643.6V596.6h1V643.6zM69.5 634.2V589.2h1V634.2zM70.5 644.3V588h1V644.3zM71.5 614.6V572.5h1V614.6zM72.5 644.6V594.5h1V644.6zM73.5 630.3V600.2h1V630.3zM74.5 644.7V591.1h1V644.7zM75.5 639.1V601h1V639.1zM76.5 634.4V593h1V634.4zM77.5 637.7V617.5h1V637.7zM78.5 610.9V566.8h1V610.9zM79.5 651.1V598.3h1V651.1zM80.5 632.9V590.9h1V632.9zM81.5 621.6V554.4h1V621.6zM82.5 629.2V569.6h1V629.2zM83.5 604.7V574.3h1V604.7zM84.5 645.7V595.1h1V645.7zM85.5 663.8V625h1V663.8zM86.5 617.9V564.4h1V617.9zM87.5 628.8V608.2h1V628.8zM88.5 601.7V553.7h1V601.7zM89.5 625.9V578.6h1V625.9zM90.5 663.9V638.2h1V663.9zM91.5 656.3V592.9h1V656.3zM92.5 650.4V611.3h1V650.4zM93.5 641.6V593.3h1V641.6zM94.5 630V585.2h1V630zM95.5 657V650.4h1V657zM96.5 635.1V590.3h1V635.1zM97.5 618.8V578.2h1V618.8zM98.5 647V600.6h1V647zM99.5 661.4V631.3h1V661.4zM100.5 653.1V608h1V653.1zM101.5 605.7V555.3h1V605.7zM102.5 620.2V575.7h1V620.2zM103.5 633.4V596.6h1V633.4zM104.5 642V627.4h1V642zM105.5 656.1V628.7h1V656.1zM106.5 624.9V575.6h1V624.9zM107.5 620.2V560.9h1V620.2zM108.5 642.3V588.7h1V642.3zM109.5 607.7V566h1V607.7zM110.5 621V581.1h1V621zM111.5 662.3V619.2h1V662.3zM112.5 650.2V607.2h1V650.2zM113.5 644.7V599.3h1V644.7zM114.5 670.4V605.2h1V670.4zM115.5 616.9V579h1V616.9zM116.5 651.6V609.7h1V651.6zM117.5 627.3V580.8h1V627.3zM118.5 631.5V611.8h1V631.5zM119.5 655V598.1h1V655zM120.5 634V609.2h1V634zM121.5 650.9V625.4h1V650.9zM122.5 653.3V598.2h1V653.3zM123.5 641.1V586.5h1V641.1zM124.5 634.8V610h1V634.8zM125.5 647.7V579.8h1V647.7zM126.5 649.5V619.7h1V649.5zM127.5 618.5V575.6h1V618.5zM128.5 637.8V579.2h1V637.8zM129.5 665.1V618.5h1V665.1zM130.5 654.1V628.3h1V654.1zM131.5 650.3V595.4h1V650.3zM132.5 639.9V619h1V639.9zM133.5 655V595.7h1V655zM134.5 621.7V592.4h1V621.7zM135.5 599.8V562.2h1V599.8zM136.5 656.3V616.1h1V656.3zM137.5 623V562.7h1V623zM138.5 621.6V584.6h1V621.6zM139.5 646.4V621.3h1V646.4zM140.5 647V620.2h1V647zM141.5 642V622.9h1V642zM142.5 653.9V630.4h1V653.9zM143.5 664.6V644.6h1V664.6zM144.5 661.8V641.7h1V661.8zM145.5 636.9V602.1h1V636.9zM146.5 666.5V626.9h1V666.5zM147.5 641.3V590.9h1V641.3zM148.5 648.9V617.6h1V648.9zM149.5 656.6V621.5h1V656.6zM150.5 638.1V602.4h1V638.1zM151.5 649.8V609.7h1V649.8zM152.5 644.4V607.9h1V644.4zM153.5 660.4V624.4h1V660.4zM154.5 661.4V637.4h1V661.4zM155.5 643.3V585.5h1V643.3zM156.5 630.2V596.5h1V630.2zM157.5 648.6V603.6h1V648.6zM158.5 624.2V576.5h1V624.2zM159.5 648.7V612.9h1V648.7zM160.5 651V620.6h1V651zM161.5 659.2V628.4h1V659.2zM162.5 679.5V659.6h1V679.5zM163.5 639.2V616.1h1V639.2zM164.5 637.4V618.5h1V637.4zM165.5 651.6V613.4h1V651.6zM166.5 662.1V636.6h1V662.1zM167.5 607.1V581.3h1V607.1zM168.5 656.9V629.8h1V656.9zM169.5 645.3V611.9h1V645.3zM170.5 630.4V587.7h1V630.4zM171.5 652.1V622.6h1V652.1zM172.5 668V651.5h1V668zM173.5 657.4V615.3h1V657.4zM174.5 643.9V601.1h1V643.9zM175.5 631.1V599.3h1V631.1zM176.5 613V585.3h1V613zM177.5 655.6V626.9h1V655.6zM178.5 628V595.9h1V628zM179.5 657.4V618.7h1V657.4zM180.5 628.1V595.7h1V628.1zM181.5 649.8V603.7h1V649.8zM182.5 630.4V585.9h1V630.4zM183.5 657.8V620.9h1V657.8zM184.5 640.1V627.1h1V640.1zM185.5 627V592.2h1V627zM186.5 651.2V591.5h1V651.2zM187.5 643.5V618.1h1V643.5zM188.5 646.8V606.7h1V646.8zM189.5 633.1V600.1h1V633.1zM190.5 659.3V633.7h1V659.3zM191.5 658.6V637h1V658.6zM192.5 646.1V618.1h1V646.1zM193.5 645V620.8h1V645zM194.5 659.4V627.8h1V659.4zM195.5 651.3V604.4h1V651.3zM196.5 659.9V623.9h1V659.9zM197.5 646.5V627.8h1V646.5zM198.5 634.5V598.9h1V634.5zM199.5 678.6V638.1h1V678.6zM200.5 631.2V606.6h1V631.2zM201.5 619.4V583.9h1V619.4zM202.5 663.8V623.7h1V663.8zM203.5 651.4V633.1h1V651.4zM204.5 679.3V642.8h1V679.3zM205.5 657.3V616.3h1V657.3zM206.5 639.8V612.1h1V639.8zM207.5 654.1V600.2h1V654.1zM208.5 619.2V576.9h1V619.2zM209.5 651.4V628.9h1V651.4zM210.5 651.9V599.2h1V651.9zM211.5 638.6V608.3h1V638.6zM212.5 665V629.4h1V665zM213.5 659.5V625.7h1V659.5zM214.5 634.2V588.3h1V634.2zM215.5 643.6V613.9h1V643.6zM216.5 642.3V588h1V642.3zM217.5 640V622.3h1V640zM218.5 621.6V585.1h1V621.6zM219.5 591.6V563.3h1V591.6zM220.5 647.3V617h1V647.3zM221.5 639.9V612.9h1V639.9zM222.5 668.8V657.1h1V668.8zM223.5 647.7V620h1V647.7zM224.5 654.8V597h1V654.8zM225.5 633.4V587.3h1V633.4zM226.5 653.6V616.5h1V653.6zM227.5 649.1V617.8h1V649.1zM228.5 634.2V593.7h1V634.2zM229.5 641.1V605.7h1V641.1zM230.5 668.3V643h1V668.3zM231.5 639.9V610.4h1V639.9zM232.5 657.9V620.2h1V657.9zM233.5 660.2V634.2h1V660.2zM234.5 632.1V602.5h1V632.1zM235.5 623.6V584h1V623.6zM236.5 633.2V586.7h1V633.2zM237.5 679.4V646.7h1V679.4zM238.5 665.9V637.5h1V665.9zM239.5 647.4V599.6h1V647.4zM240.5 646.5V594.1h1V646.5zM241.5 654V621h1V654zM242.5 644.4V600h1V644.4zM243.5 646.6V620h1V646.6zM244.5 650.9V633.2h1V650.9zM245.5 626.3V584.1h1V626.3zM246.5 639.2V602.4h1V639.2zM247.5 655.2V626.2h1V655.2zM248.5 633.3V608.6h1V633.3zM249.5 658V606.4h1V658zM250.5 621.7V584.7h1V621.7zM251.5 637.6V601.8h1V637.6zM252.5 623.7V595.1h1V623.7zM253.5 644.5V605.4h1V644.5zM254.5 623.5V592.7h1V623.5zM255.5 642.2V614.1h1V642.2zM256.5 656V629.7h1V656zM257.5 644.5V600.8h1V644.5zM258.5 656.5V629.7h1V656.5zM259.5 652.1V614.4h1V652.1zM260.5 635V615.5h1V635zM261.5 640.3V617.9h1V640.3zM262.5 634.8V612h1V634.8zM263.5 662.5V636.9h1V662.5zM264.5 646.8V624.3h1V646.8zM265.5 642.6V607.2h1V642.6zM266.5 644.5V607.8h1V644.5zM267.5 632.4V606.9h1V632.4zM268.5 645.8V612.5h1V645.8zM269.5 677.4V639.3h1V677.4zM270.5 657.7V632.1h1V657.7zM271.5 652.7V617.9h1V652.7zM272.5 640.7V601.6h1V640.7zM273.5 656.5V615h1V656.5zM274.5 639.4V610.1h1V639.4zM275.5 646.1V603.4h1V646.1zM276.5 639.2V597.7h1V639.2zM277.5 644.2V597.7h1V644.2zM278.5 611.7V573h1V611.7zM279.5 670.3V617.3h1V670.3zM280.5 654.6V636.4h1V654.6zM281.5 682.1V643.7h1V682.1zM282.5 629V584.1h1V629zM283.5 651.7V601.8h1V651.7z" fill="#c48fe0"/><path d="M284.5 833.5V766.6H285.5V765.8H286.5V765.9H287.5V777.4H288.5V769.1H289.5V770.3H290.5V767.1H291.5V764.2H292.5V771.9H293.5V769.5H294.5V765.6H295.5V758H296.5V767.5H297.5V780.9H298.5V770.9H299.5V764.6H300.5V761.4H301.5V764.6H302.5V766.1H303.5V767.6H304.5V766.4H305.5V766.8H306.5V752.9H307.5V763.6H308.5V771.3H309.5V762.4H310.5V761.2H311.5V760.1H312.5V764H313.5V759.9H314.5V772.8H315.5V771.3H316.5V767.9H317.5V768.2H318.5V764.5H319.5V762.9H320.5V758.7H321.5V764.3H322.5V764.7H323.5V766.1H324.5V772.2H325.5V766.1H326.5V766.7H327.5V764.9H328.5V767.8H329.5V770.1H330.5V766.1H331.5V760.3H332.5V765.8H333.5V775H334.5V773.3H335.5V767.3H336.5V767.2H337.5V768.2H338.5V763.3H339.5V766.8H340.5V766.6H341.5V765.6H342.5V764.6H343.5V762.9H344.5V758.3H345.5V769H346.5V770.5H347.5V766.6H348.5V774.4H349.5V766.5H350.5V769.2H351.5V767.6H352.5V757.8H353.5V762.9H354.5V761.3H355.5V771.2H356.5V764.9H357.5V779.4H358.5V768.1H359.5V764.1H360.5V752.8H361.5V759.6H362.5V776.7H363.5V769H364.5V766.8H365.5V770.6H366.5V766.2H367.5V768.5H368.5V756.5H369.5V762H370.5V768.5H371.5V763.3H372.5V763.2H373.5V759.6H374.5V763.4H375.5V764.9H376.5V770.3H377.5V772.7H378.5V766.7H379.5V772.9H380.5V764.2H381.5V766.7H382.5V768.1H383.5V774H384.5V777.9H385.5V761.5H386.5V768.9H387.5V775.1H388.5V770.6H389.5V768.8H390.5V766.6H391.5V762.1H392.5V773.7H393.5V767.1H394.5V762.5H395.5V766.6H396.5V766H397.5V755.7H398.5V769.9H399.5V766.7H400.5V764.6H401.5V763.2H402.5V759.9H403.5V766.5H404.5V768.6H405.5V772.4H406.5V760.2H407.5V768H408.5V768.6H409.5V767.2H410.5V763.5H411.5V767.6H412.5V774H413.5V762.6H414.5V765.8H415.5V760.1H416.5V761.1H417.5V766.9H418.5V771.8H419.5V762.6H420.5V767.5H421.5V763H422.5V763.7H423.5V772.6H424.5V764.8H425.5V772.3H426.5V769.2H427.5V760.7H428.5V759.7H429.5V770.3H430.5V773.3H431.5V765.1H432.5V763H433.5V763.5H434.5V764.9H435.5V762.1H436.5V759.4H437.5V767H438.5V763.5H439.5V754.8H440.5V775.5H441.5V764.3H442.5V763H443.5V770.2H444.5V769.7H445.5V761.7H446.5V770.9H447.5V761.1H448.5V771.6H449.5V779.3H450.5V764.3H451.5V765.7H452.5V766.9H453.5V770.9H454.5V767.1H455.5V769.3H456.5V774.1H457.5V764.6H458.5V767.5H459.5V762.6H460.5V761.1H461.5V765.6H462.5V762.5H463.5V761.4H464.5V759.8H465.5V775.2H466.5V762.2H467.5V766H468.5V765.7H469.5V762.3H470.5V771H471.5V767.9H472.5V763.5H473.5V771.6H474.5V762.6H475.5V758.7H476.5V767.9H477.5V773.1H478.5V772.5H479.5V760.2H480.5V767.1H481.5V757.5H482.5V775.1H483.5V761H484.5V779.9H485.5V765.8H486.5V760.9H487.5V778.2H488.5V762.6H489.5V769.7H490.5V770.3H491.5V767.5H492.5V763.4H493.5V761.7H494.5V757.7H495.5V765.9H496.5V760H497.5V768.4H498.5V765.2H499.5V765H500.5V764H501.5V767.1H502.5V772.3H503.5V762.6H504.5V758.3H505.5V764.1H506.5V769.2H507.5V770.1H508.5V777.7H509.5V765.8H510.5V766.7H511.5V766.5H512.5V774.1H513.5V757.4H514.5V771.5H515.5V773.1H516.5V760.5H517.5V761.3H518.5V766.8H519.5V767.8H520.5V772.7H521.5V770.5H522.5V768.9H523.5V751.8H524.5V767.2H525.5V764.3H526.5V774.1H527.5V771.2H528.5V762.4H529.5V775.3H530.5V763.1H531.5V772.8H532.5V764.7H533.5V764.1H534.5V767.7H535.5V762.3H536.5V767.6H537.5V766.4H538.5V762.8H539.5V771.7H540.5V766.1H541.5V762.3H542.5V763.6H543.5V765.1H544.5V766.6H545.5V764.7H546.5V763.5H547.5V765.2H548.5V768.3H549.5V767.4H550.5V768.9H551.5V763.8H552.5V759.1H553.5V764.6H554.5V773.3H555.5V759.8H556.5V759.5H557.5V764.7H558.5V766.1H559.5V766.3H560.5V765.9H561.5V761.5H562.5V764.2H563.5V767.2H564.5V765.6H565.5V767.4H566.5V772.5H567.5V768H568.5V762.4H569.5V768.3H570.5V776.3H571.5V763.7H572.5V772.5H573.5V760.9H574.5V769H575.5V764.1H576.5V766.8H577.5V766.5H578.5V763.1H579.5V771.2H580.5V763.7H581.5V765.6H582.5V760.4H583.5V762.4H584.5V753.2H585.5V771.6H586.5V766.8H587.5V770H588.5V764.6H589.5V767.3H590.5V764.9H591.5V767.2H592.5V757.7H593.5V761.4H594.5V762H595.5V766H596.5V770.1H597.5V761.4H598.5V754.9H599.5V768.5H600.5V765.9H601.5V768.3H602.5V759.8H603.5V769.9H604.5V779.2H605.5V769.3H606.5V777.5H607.5V771.5H608.5V762.2H609.5V763.8H610.5V765.1H611.5V760.9H612.5V776.9H613.5V771.5H614.5V768H615.5V766.4H616.5V765.8H617.5V763.9H618.5V769H619.5V752.1H620.5V764.1H621.5V761.5H622.5V773.5H623.5V762.1H624.5V760.9H625.5V766.2H626.5V758.5H627.5V759.9H628.5V769.7H629.5V770H630.5V758.2H631.5V767.1H632.5V764.2H633.5V770.8H634.5V763.5H635.5V771H636.5V766.2H637.5V762H638.5V761.7H639.5V774.7H640.5V768.3H641.5V766.9H642.5V767.9H643.5V765.3H644.5V766.4H645.5V764H646.5V833.5Z" fill="#f56f7e"/><path d="M47.5 508V833.5" stroke="#a9d9a2" stroke-width="1" stroke-dasharray="2 3"/><path d="M43.5 838.5L47.5 834.5L51.5 838.5Z" fill="#56a64b"/></svg>
<div class="ax" style="right:1957px;top:827.5px;text-align:right">0</div>
<div class="ax" style="right:1957px;top:786.7px;text-align:right">200</div>
<div class="ax" style="right:1957px;top:745.9px;text-align:right">400</div>
<div class="ax" style="right:1957px;top:705.1px;text-align:right">600</div>
<div class="ax" style="right:1957px;top:664.3px;text-align:right">800</div>
<div class="ax" style="right:1957px;top:623.5px;text-align:right">1000</div>
<div class="ax" style="right:1957px;top:582.7px;text-align:right">1200</div>
<div class="ax" style="right:1957px;top:541.9px;text-align:right">1400</div>
<div class="ax" style="right:1957px;top:501.1px;text-align:right">1600</div>
<div class="ax" style="left:84.7px;width:40px;top:840px;text-align:center">14:00</div>
<div class="ax" style="left:170px;width:40px;top:840px;text-align:center">15:00</div>
<div class="ax" style="left:255.3px;width:40px;top:840px;text-align:center">16:00</div>
<div class="ax" style="left:340.7px;width:40px;top:840px;text-align:center">17:00</div>
<div class="ax" style="left:426px;width:40px;top:840px;text-align:center">18:00</div>
<div class="ax" style="left:511.3px;width:40px;top:840px;text-align:center">19:00</div>
<div class="ax" style="left:596.6px;width:40px;top:840px;text-align:center">20:00</div>
<div class="a" style="left:18px;top:867.1px;width:12px;height:4px;border-radius:2px;background:#e02f44"></div>
<div class="leg" style="left:37.5px;top:862.6px">error</div>
<div class="leg" style="left:70px;top:862.6px">Total: 171456</div>
<div class="a" style="left:145.8px;top:867.1px;width:12px;height:4px;border-radius:2px;background:#56a64b"></div>
<div class="leg" style="left:165px;top:862.6px">info</div>
<div class="leg" style="left:192px;top:862.6px">Total: 575779</div>
<div class="a" style="left:270.5px;top:867.1px;width:12px;height:4px;border-radius:2px;background:#b877d9"></div>
<div class="leg" style="left:290px;top:862.6px">trace</div>
<div class="leg" style="left:323.6px;top:862.6px">Total: 56811</div>
<div class="panel" style="left:669px;top:457px;width:1317px;height:432px"></div>
<div class="ptitle" style="left:680px;top:468.5px">Log Samples — payment</div>
<svg class="a" style="left:845px;top:468.7px" width="14" height="13" viewBox="0 0 14 13"><path d="M5.3 2.7 H2.3 Q1.1 2.7 1.1 3.9 V10 Q1.1 11.2 2.3 11.2 H8.9 Q10.1 11.2 10.1 10 V6.8" fill="none" stroke="#5b5f63" stroke-width="1.2"/><path d="M4.4 8.1 L12.1 1.1 M8.4 1 H12.5 V5" fill="none" stroke="#45494d" stroke-width="1.3"/></svg>
<div class="a" style="left:670px;top:496px;width:1310px;height:385px;overflow:hidden">
<svg class="a" style="left:15px;top:8.5px" width="4" height="11" viewBox="0 0 4 11"><circle cx="2" cy="1.5" r="1.2" fill="#24292e"/><circle cx="2" cy="5.5" r="1.2" fill="#24292e"/><circle cx="2" cy="9.5" r="1.2" fill="#24292e"/></svg>
<div class="a mono" style="left:28px;top:5.5px;color:#6c7074">2026-04-13 20:20:22.368</div>
<div class="a mono" style="left:221px;top:5.5px;color:#e0285a">ERROR</div>
<div class="a mono" style="left:287px;top:5.5px;color:#24292e">{<span style="color:#6c7074">&quot;level&quot;</span>:&quot;error&quot;,<span style="color:#6c7074">&quot;span_id&quot;</span>:&quot;193ccd24b1ed1bf9&quot;,<span style="color:#6c7074">&quot;trace_flags&quot;</span>:&quot;01&quot;,<span style="color:#6c7074">&quot;trace_id&quot;</span>:&quot;a3da38ffcae2c06a04e8c5132f23ca1a&quot;}</div>
<svg class="a" style="left:15px;top:33.5px" width="4" height="11" viewBox="0 0 4 11"><circle cx="2" cy="1.5" r="1.2" fill="#24292e"/><circle cx="2" cy="5.5" r="1.2" fill="#24292e"/><circle cx="2" cy="9.5" r="1.2" fill="#24292e"/></svg>
<div class="a mono" style="left:28px;top:30.5px;color:#6c7074">2026-04-13 20:20:22.367</div>
<div class="a mono" style="left:221px;top:30.5px;color:#e0285a">ERROR</div>
<div class="a mono" style="left:287px;top:30.5px;color:#24292e">Visa cache full: cannot add new item.</div>
<svg class="a" style="left:15px;top:58.5px" width="4" height="11" viewBox="0 0 4 11"><circle cx="2" cy="1.5" r="1.2" fill="#24292e"/><circle cx="2" cy="5.5" r="1.2" fill="#24292e"/><circle cx="2" cy="9.5" r="1.2" fill="#24292e"/></svg>
<div class="a mono" style="left:28px;top:55.5px;color:#6c7074">2026-04-13 20:20:22.355</div>
<div class="a mono" style="left:221px;top:55.5px;color:#6ccf7f">INFO</div>
<div class="a mono" style="left:279.5px;top:55.5px;color:#24292e">{<span style="color:#6c7074">&quot;level&quot;</span>:&quot;info&quot;,<span style="color:#6c7074">&quot;message&quot;</span>:&quot;Charge request received.&quot;,<span style="color:#6c7074">&quot;request&quot;</span>:{<span style="color:#6c7074">&quot;amount&quot;</span>:{<span style="color:#6c7074">&quot;currencyCode&quot;</span>:&quot;USD&quot;,<span style="color:#6c7074">&quot;nanos&quot;</span>:<span style="color:#1f8a57">369999995</span>,<span style="color:#6c7074">&quot;units&quot;</span>:{<span style="color:#6c7074">&quot;high&quot;</span>:<span style="color:#1f8a57">0</span>,<span style="color:#6c7074">&quot;lo</span></div>
<div class="a mono" style="left:28px;top:75.1px;color:#24292e"><span style="color:#6c7074">w&quot;</span>:<span style="color:#1f8a57">38204</span>,<span style="color:#6c7074">&quot;unsigned&quot;</span>:false}},<span style="color:#6c7074">&quot;creditCard&quot;</span>:{<span style="color:#6c7074">&quot;creditCardCvv&quot;</span>:<span style="color:#1f8a57">620</span>,<span style="color:#6c7074">&quot;creditCardExpirationMonth&quot;</span>:<span style="color:#1f8a57">6</span>,<span style="color:#6c7074">&quot;creditCardExpirationYear&quot;</span>:<span style="color:#1f8a57">2032</span>,<span style="color:#6c7074">&quot;creditCardNumber&quot;</span>:&quot;4780-2119-9421-469</div>
<div class="a mono" style="left:28px;top:94.7px;color:#24292e">1&quot;}},<span style="color:#6c7074">&quot;span_id&quot;</span>:&quot;193ccd24b1ed1bf9&quot;,<span style="color:#6c7074">&quot;trace_flags&quot;</span>:&quot;01&quot;,<span style="color:#6c7074">&quot;trace_id&quot;</span>:&quot;a3da38ffcae2c06a04e8c5132f23ca1a&quot;}</div>
<svg class="a" style="left:15px;top:122.5px" width="4" height="11" viewBox="0 0 4 11"><circle cx="2" cy="1.5" r="1.2" fill="#24292e"/><circle cx="2" cy="5.5" r="1.2" fill="#24292e"/><circle cx="2" cy="9.5" r="1.2" fill="#24292e"/></svg>
<div class="a mono" style="left:28px;top:119.5px;color:#6c7074">2026-04-13 20:20:22.354</div>
<div class="a mono" style="left:221px;top:119.5px;color:#6ccf7f">INFO</div>
<div class="a mono" style="left:279.5px;top:119.5px;color:#24292e">Charge request received.</div>
<svg class="a" style="left:15px;top:147.5px" width="4" height="11" viewBox="0 0 4 11"><circle cx="2" cy="1.5" r="1.2" fill="#24292e"/><circle cx="2" cy="5.5" r="1.2" fill="#24292e"/><circle cx="2" cy="9.5" r="1.2" fill="#24292e"/></svg>
<div class="a mono" style="left:28px;top:144.5px;color:#6c7074">2026-04-13 20:20:22.347</div>
<div class="a mono" style="left:221px;top:144.5px;color:#6ccf7f">INFO</div>
<div class="a mono" style="left:279.5px;top:144.5px;color:#24292e">{<span style="color:#6c7074">&quot;amount&quot;</span>:{<span style="color:#6c7074">&quot;currencyCode&quot;</span>:&quot;USD&quot;,<span style="color:#6c7074">&quot;nanos&quot;</span>:<span style="color:#1f8a57">249999985</span>,<span style="color:#6c7074">&quot;units&quot;</span>:{<span style="color:#6c7074">&quot;high&quot;</span>:<span style="color:#1f8a57">0</span>,<span style="color:#6c7074">&quot;low&quot;</span>:<span style="color:#1f8a57">4705</span>,<span style="color:#6c7074">&quot;unsigned&quot;</span>:false}},<span style="color:#6c7074">&quot;cached&quot;</span>:false,<span style="color:#6c7074">&quot;cardType&quot;</span>:&quot;mastercar</div>
<div class="a mono" style="left:28px;top:164.1px;color:#24292e">d&quot;,<span style="color:#6c7074">&quot;lastFourDigits&quot;</span>:&quot;6007&quot;,<span style="color:#6c7074">&quot;level&quot;</span>:&quot;info&quot;,<span style="color:#6c7074">&quot;loyalty_level&quot;</span>:&quot;gold&quot;,<span style="color:#6c7074">&quot;message&quot;</span>:&quot;Transaction complete.&quot;,<span style="color:#6c7074">&quot;span_id&quot;</span>:&quot;cb30d52c427e6ef2&quot;,<span style="color:#6c7074">&quot;trace_flags&quot;</span>:&quot;01&quot;,<span style="color:#6c7074">&quot;trace_id&quot;</span>:&quot;d7962022a</div>
<div class="a mono" style="left:28px;top:183.7px;color:#24292e">b96b6005caa5bd944f7347c&quot;,<span style="color:#6c7074">&quot;transactionId&quot;</span>:&quot;08a6d3aa-7b2f-4dcc-b1dc-42d8e94707af&quot;}</div>
<svg class="a" style="left:15px;top:211.5px" width="4" height="11" viewBox="0 0 4 11"><circle cx="2" cy="1.5" r="1.2" fill="#24292e"/><circle cx="2" cy="5.5" r="1.2" fill="#24292e"/><circle cx="2" cy="9.5" r="1.2" fill="#24292e"/></svg>
<div class="a mono" style="left:28px;top:208.5px;color:#6c7074">2026-04-13 20:20:22.347</div>
<div class="a mono" style="left:221px;top:208.5px;color:#6ccf7f">INFO</div>
<div class="a mono" style="left:279.5px;top:208.5px;color:#24292e">Transaction complete.</div>
<svg class="a" style="left:15px;top:236.5px" width="4" height="11" viewBox="0 0 4 11"><circle cx="2" cy="1.5" r="1.2" fill="#24292e"/><circle cx="2" cy="5.5" r="1.2" fill="#24292e"/><circle cx="2" cy="9.5" r="1.2" fill="#24292e"/></svg>
<div class="a mono" style="left:28px;top:233.5px;color:#6c7074">2026-04-13 20:20:22.346</div>
<div class="a mono" style="left:221px;top:233.5px;color:#6ccf7f">INFO</div>
<div class="a mono" style="left:279.5px;top:233.5px;color:#24292e">{<span style="color:#6c7074">&quot;level&quot;</span>:&quot;info&quot;,<span style="color:#6c7074">&quot;message&quot;</span>:&quot;Charge request received.&quot;,<span style="color:#6c7074">&quot;request&quot;</span>:{<span style="color:#6c7074">&quot;amount&quot;</span>:{<span style="color:#6c7074">&quot;currencyCode&quot;</span>:&quot;USD&quot;,<span style="color:#6c7074">&quot;nanos&quot;</span>:<span style="color:#1f8a57">249999985</span>,<span style="color:#6c7074">&quot;units&quot;</span>:{<span style="color:#6c7074">&quot;high&quot;</span>:<span style="color:#1f8a57">0</span>,<span style="color:#6c7074">&quot;lo</span></div>
<div class="a mono" style="left:28px;top:253.1px;color:#24292e"><span style="color:#6c7074">w&quot;</span>:<span style="color:#1f8a57">4705</span>,<span style="color:#6c7074">&quot;unsigned&quot;</span>:false}},<span style="color:#6c7074">&quot;creditCard&quot;</span>:{<span style="color:#6c7074">&quot;creditCardCvv&quot;</span>:<span style="color:#1f8a57">364</span>,<span style="color:#6c7074">&quot;creditCardExpirationMonth&quot;</span>:<span style="color:#1f8a57">3</span>,<span style="color:#6c7074">&quot;creditCardExpirationYear&quot;</span>:<span style="color:#1f8a57">2031</span>,<span style="color:#6c7074">&quot;creditCardNumber&quot;</span>:&quot;5400-9590-1968-6007&quot;}},<span style="color:#6c7074">&quot;s</span></div>
<div class="a mono" style="left:28px;top:272.7px;color:#24292e"><span style="color:#6c7074">pan_id&quot;</span>:&quot;cb30d52c427e6ef2&quot;,<span style="color:#6c7074">&quot;trace_flags&quot;</span>:&quot;01&quot;,<span style="color:#6c7074">&quot;trace_id&quot;</span>:&quot;d7962022ab96b6005caa5bd944f7347c&quot;}</div>
<svg class="a" style="left:15px;top:300.5px" width="4" height="11" viewBox="0 0 4 11"><circle cx="2" cy="1.5" r="1.2" fill="#24292e"/><circle cx="2" cy="5.5" r="1.2" fill="#24292e"/><circle cx="2" cy="9.5" r="1.2" fill="#24292e"/></svg>
<div class="a mono" style="left:28px;top:297.5px;color:#6c7074">2026-04-13 20:20:22.346</div>
<div class="a mono" style="left:221px;top:297.5px;color:#6ccf7f">INFO</div>
<div class="a mono" style="left:279.5px;top:297.5px;color:#24292e">Charge request received.</div>
<svg class="a" style="left:15px;top:325.0px" width="4" height="11" viewBox="0 0 4 11"><circle cx="2" cy="1.5" r="1.2" fill="#24292e"/><circle cx="2" cy="5.5" r="1.2" fill="#24292e"/><circle cx="2" cy="9.5" r="1.2" fill="#24292e"/></svg>
<div class="a mono" style="left:28px;top:322px;color:#6c7074">2026-04-13 20:20:22.251</div>
<div class="a mono" style="left:221px;top:322px;color:#e0285a">ERROR</div>
<div class="a mono" style="left:287px;top:322px;color:#24292e">{<span style="color:#6c7074">&quot;level&quot;</span>:&quot;error&quot;,<span style="color:#6c7074">&quot;span_id&quot;</span>:&quot;de0b7204adf3a373&quot;,<span style="color:#6c7074">&quot;trace_flags&quot;</span>:&quot;01&quot;,<span style="color:#6c7074">&quot;trace_id&quot;</span>:&quot;8556fc02c222b1cf3eea433e147afe3d&quot;}</div>
<svg class="a" style="left:15px;top:350.0px" width="4" height="11" viewBox="0 0 4 11"><circle cx="2" cy="1.5" r="1.2" fill="#24292e"/><circle cx="2" cy="5.5" r="1.2" fill="#24292e"/><circle cx="2" cy="9.5" r="1.2" fill="#24292e"/></svg>
<div class="a mono" style="left:28px;top:347px;color:#6c7074">2026-04-13 20:20:22.251</div>
<div class="a mono" style="left:221px;top:347px;color:#e0285a">ERROR</div>
<div class="a mono" style="left:287px;top:347px;color:#24292e">Visa cache full: cannot add new item.</div>
<svg class="a" style="left:15px;top:374.5px" width="4" height="11" viewBox="0 0 4 11"><circle cx="2" cy="1.5" r="1.2" fill="#24292e"/><circle cx="2" cy="5.5" r="1.2" fill="#24292e"/><circle cx="2" cy="9.5" r="1.2" fill="#24292e"/></svg>
<div class="a mono" style="left:28px;top:371.5px;color:#6c7074">2026-04-13 20:20:22.238</div>
<div class="a mono" style="left:221px;top:371.5px;color:#6ccf7f">INFO</div>
<div class="a mono" style="left:279.5px;top:371.5px;color:#24292e">{<span style="color:#6c7074">&quot;level&quot;</span>:&quot;info&quot;,<span style="color:#6c7074">&quot;message&quot;</span>:&quot;Charge request received.&quot;,<span style="color:#6c7074">&quot;request&quot;</span>:{<span style="color:#6c7074">&quot;amount&quot;</span>:{<span style="color:#6c7074">&quot;currencyCode&quot;</span>:&quot;USD&quot;,<span style="color:#6c7074">&quot;nanos&quot;</span>:<span style="color:#1f8a57">299999996</span>,<span style="color:#6c7074">&quot;units&quot;</span>:{<span style="color:#6c7074">&quot;high&quot;</span>:<span style="color:#1f8a57">0</span>,&quot;lo</div>
</div></body></html>
